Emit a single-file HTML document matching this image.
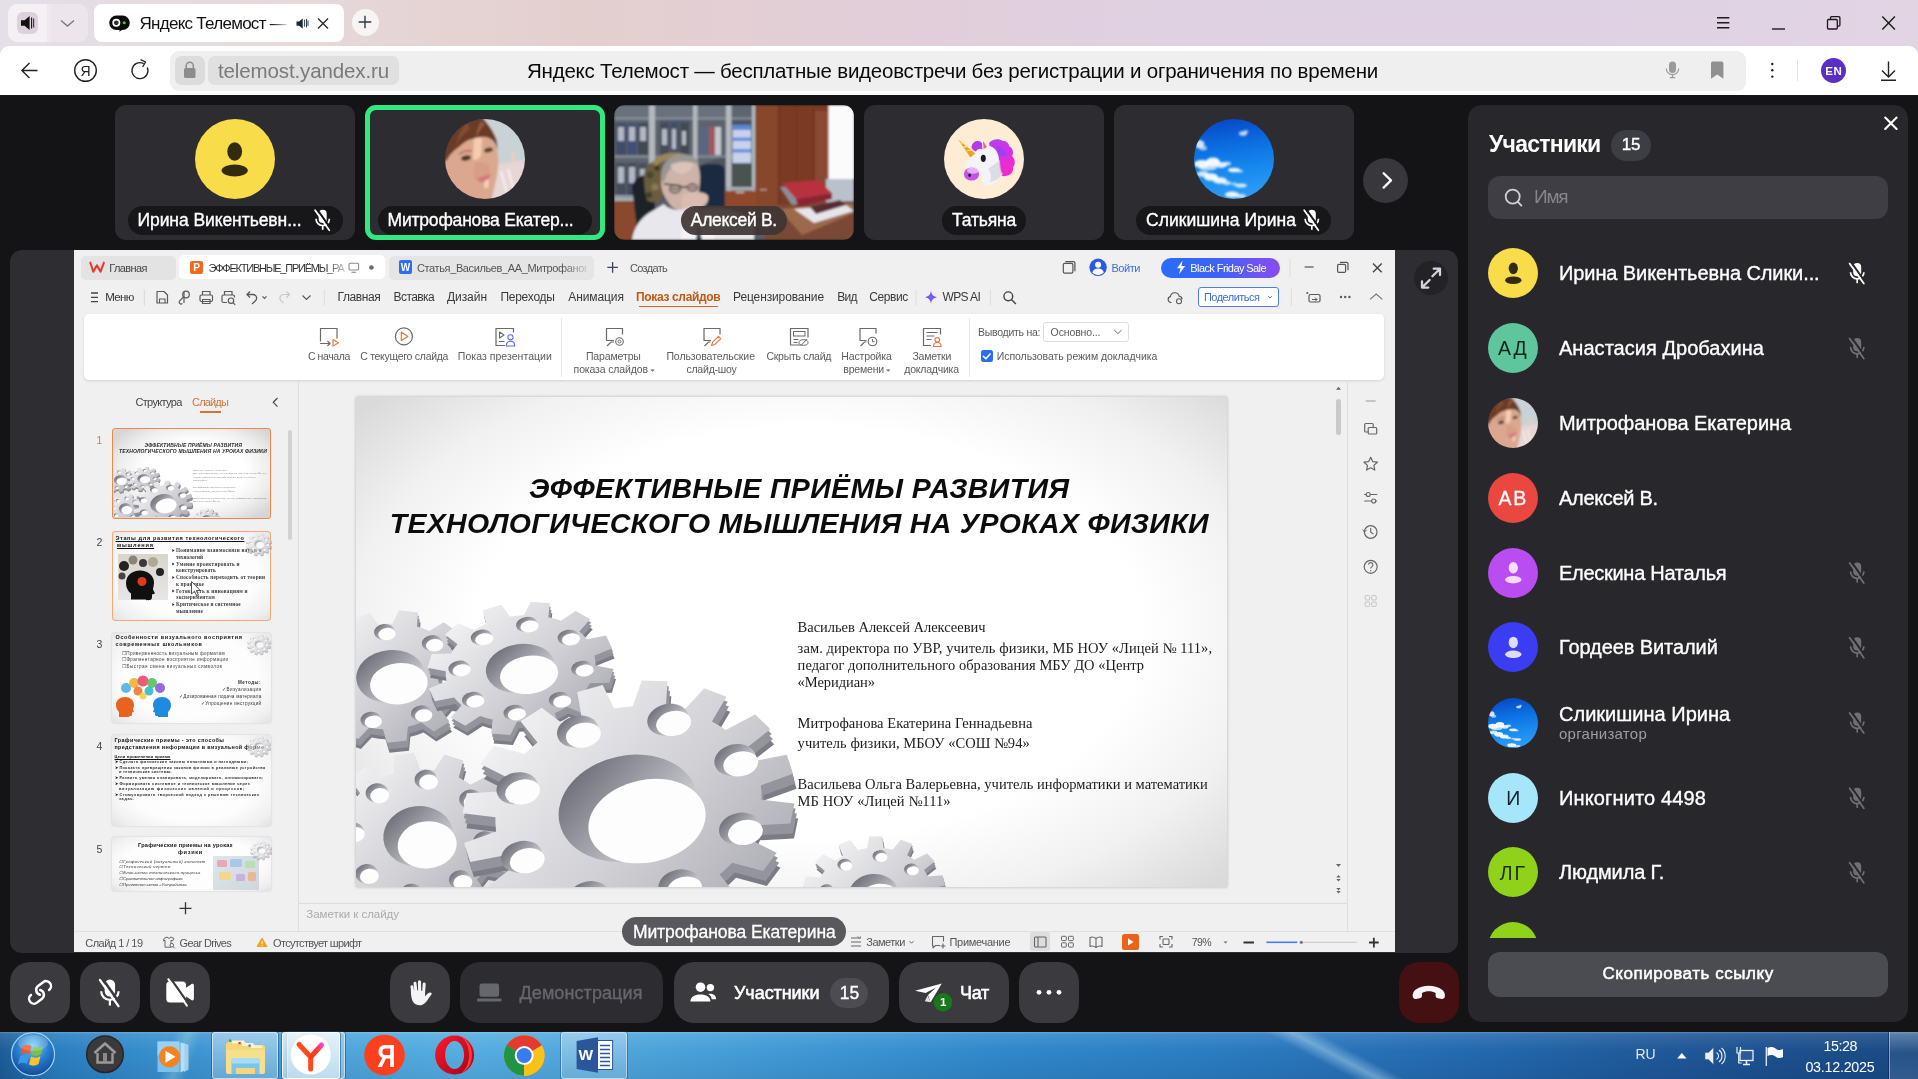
<!DOCTYPE html>
<html lang="ru"><head><meta charset="utf-8"><title>Яндекс Телемост</title>
<style>
html,body{margin:0;padding:0;}
body{width:1918px;height:1079px;overflow:hidden;position:relative;background:#141416;will-change:transform;font-family:"Liberation Sans",sans-serif;}
.b{position:absolute;box-sizing:border-box;}
.t{position:absolute;white-space:nowrap;}
svg{position:absolute;overflow:visible;}
</style></head><body>
<div class="b" style="left:0px;top:0px;width:1918px;height:60px;background:linear-gradient(90deg,#e5dfe8 0%,#e7d9db 14%,#e4cfcf 30%,#e2ceda 48%,#dfd1e2 62%,#ddd1e3 80%,#e2d4e3 100%);"></div>
<div class="b" style="left:8px;top:4px;width:39px;height:38px;background:#f4f0f4;border-radius:9px 0 0 9px;"></div>
<div class="b" style="left:47px;top:4px;width:4px;height:38px;background:#efe9ef;"></div>
<div class="b" style="left:51px;top:4px;width:37px;height:38px;background:#ece5ec;border-radius:0 9px 9px 0;"></div>
<div class="b" style="left:17px;top:12px;width:21px;height:22px;background:#dcd2de;border-radius:6px;"></div>
<div class="b" style="left:94px;top:4px;width:250px;height:38px;background:#fff;border-radius:8px;"></div>
<div class="b" style="left:351.5px;top:8.5px;width:27px;height:27px;background:#f7f4f3;border-radius:14px;"></div>
<div class="b" style="left:0px;top:46px;width:1918px;height:49px;background:#fff;border-radius:9px 9px 0 0;"></div>
<div class="b" style="left:170px;top:51px;width:1576px;height:39.5px;background:#efefef;border-radius:9px;"></div>
<div class="b" style="left:175px;top:55.5px;width:29.5px;height:29.5px;background:#dcdcdc;border-radius:7px;"></div>
<div class="b" style="left:208px;top:55.5px;width:190.5px;height:29.5px;background:#e0e0e0;border-radius:7px;"></div>
<span class="t " style="left:218px;top:57.9px;font-size:20.5px;line-height:26px;color:#7a7a7a;letter-spacing:-0.122px;">telemost.yandex.ru</span>
<span class="t " style="left:527px;top:57.9px;font-size:20.5px;line-height:26px;color:#0a0a0a;letter-spacing:-0.228px;">Яндекс Телемост — бесплатные видеовстречи без регистрации и ограничения по времени</span>
<span class="t " style="left:139.5px;top:12.61px;font-size:17px;line-height:22px;color:#111;letter-spacing:-0.720px;width:150px;overflow:hidden;-webkit-mask-image:linear-gradient(90deg,#000 88%,transparent 100%);">Яндекс Телемост —</span>
<div class="b" style="left:1821.2px;top:58.4px;width:24.8px;height:24.8px;background:#5b2fc4;border-radius:13px;"></div>
<span class="t " style="left:1825.3px;top:64.02px;font-size:11.5px;line-height:14px;color:#fff;font-weight:700;letter-spacing:0.512px;">EN</span>
<svg width="1918" height="1079" viewBox="0 0 1918 1079" style="left:0;top:0" fill="none"><path d="M21 20.2h3.6l5-4.2v14l-5-4.2H21z" fill="#111"/><path d="M31.6 17.5v11" stroke="#111" stroke-width="1.1"/><path d="M33.7 18.5v9" stroke="#111" stroke-width="0.9"/><path d="M61 20.5l6.5 5.6 6.5-5.6" stroke="#7b767d" stroke-width="1.3"/><path d="M116.5 15.5h6a7.3 7.3 0 0 1 0 14.6h-0.6l-2.6 1.7 0.3-1.7h-3.1a7.3 7.3 0 0 1 0-14.6z" fill="#0b0b0b"/><circle cx="116.3" cy="22.8" r="3.2" stroke="#fff" stroke-width="1.6" fill="#333"/><circle cx="124.2" cy="22.8" r="1.5" fill="#38d04c"/><path d="M296.5 21.4h2.6l3.6-3v10.4l-3.6-3h-2.6z" fill="#1c2838"/><path d="M304.6 19.7v7M306.5 19v8.4M308 20.5v5.4" stroke="#1c2838" stroke-width="0.9"/><path d="M318 18.5l10 10M328 18.5l-10 10" stroke="#2b2b2b" stroke-width="1.4"/><path d="M358.7 22h12.6M365 15.7v12.6" stroke="#2b3a4a" stroke-width="1.4"/><path d="M37.5 70.5H22M29.5 63l-7.6 7.5 7.6 7.5" stroke="#222" stroke-width="1.4"/><circle cx="85.5" cy="70.5" r="10.8" stroke="#222" stroke-width="1.4"/><path d="M147.300 67.500a8 8 0 1 1-3.600-3.900" stroke="#222" stroke-width="1.300"/><path d="M140.600 59.600l5 2.400-3 5" stroke="#222" stroke-width="1.300" stroke-linejoin="round"/><rect x="184" y="68" width="11.5" height="10" rx="1.6" fill="#8c8c8c"/><path d="M186.2 68v-2.3a3.55 3.55 0 0 1 7.1 0V68" stroke="#8c8c8c" stroke-width="1.5"/><path d="M1717 17.7h12.3M1717 22.7h12.3M1717 27.7h12.3" stroke="#1a1a1a" stroke-width="1.4"/><path d="M1772 29h13" stroke="#1a1a1a" stroke-width="1.4"/><rect x="1827.5" y="19.5" width="9.8" height="9.5" rx="1" stroke="#1a1a1a" stroke-width="1.3"/><path d="M1830.5 19.3v-1.6a1 1 0 0 1 1-1h7.4a1 1 0 0 1 1 1v7.4a1 1 0 0 1-1 1h-1.5" stroke="#1a1a1a" stroke-width="1.3"/><path d="M1882.3 16.5l12.6 13M1894.9 16.5l-12.6 13" stroke="#1a1a1a" stroke-width="1.4"/><rect x="1669" y="61.5" width="7" height="11.5" rx="3.5" fill="#9a9a9a"/><path d="M1666.3 68.5a6.2 6.2 0 0 0 12.4 0" stroke="#9a9a9a" stroke-width="1.2"/><path d="M1672.5 74.5v2.8M1669.8 77.6h5.4" stroke="#9a9a9a" stroke-width="1.2"/><path d="M1711 63.2a1.6 1.6 0 0 1 1.6-1.6h9.2a1.6 1.6 0 0 1 1.6 1.6v15.5l-6.2-4.2-6.2 4.2z" fill="#909090"/><circle cx="1772.3" cy="64" r="1.2" fill="#222"/><circle cx="1772.3" cy="70.3" r="1.2" fill="#222"/><circle cx="1772.3" cy="76.6" r="1.2" fill="#222"/><path d="M1797.5 60v21" stroke="#e2e2e2" stroke-width="1"/><path d="M1888.5 61.5v15M1882 70.5l6.5 6.5 6.5-6.5M1881 80.3h15" stroke="#222" stroke-width="1.4"/></svg>
<span class="t " style="left:80.6px;top:62.95px;font-size:14px;line-height:16px;color:#222;">Я</span>
<div class="b" style="left:0px;top:95px;width:1918px;height:935px;background:#141416;"></div>
<div class="b" style="left:115px;top:105px;width:239.5px;height:135px;background:#2c2c31;border-radius:11px;"></div>
<div class="b" style="left:365px;top:105px;width:239.5px;height:135px;background:#2c2c31;border-radius:11px;"></div>
<div class="b" style="left:864px;top:105px;width:239.5px;height:135px;background:#2c2c31;border-radius:11px;"></div>
<div class="b" style="left:1114px;top:105px;width:239.5px;height:135px;background:#2c2c31;border-radius:11px;"></div>
<div class="b" style="left:194.7px;top:119px;width:80px;height:80px;background:#f9dc4a;border-radius:40px;"></div>
<svg width="80" height="80" viewBox="0 0 80 80" style="left:444.5px;top:119.1px;border-radius:50%;overflow:hidden"><defs><filter id="fb1" x="-10%" y="-10%" width="120%" height="120%"><feGaussianBlur stdDeviation="1.3"/></filter></defs><g filter="url(#fb1)"><rect x="-5" y="-5" width="90" height="90" fill="#c9d3d5"/><path d="M50 46l35-6v50h-42z" fill="#e6d6d6"/><path d="M56 52l6 22M63 50l6 22" stroke="#f6ecec" stroke-width="2.500"/><rect x="67" y="32" width="2.500" height="11" fill="#f0cdb6"/><path d="M-5 38c6-14 22-22 38-22 12 0 19 8 20 20 1 8 0 14-1 20-2 10-4 18-6 28h-51z" fill="#dba88f"/><path d="M30 44c4-2 10-1 14 3 2 6 0 12-4 16-5 1-9-1-11-4z" fill="#d59a84" opacity=".8"/><path d="M29 20c3-2 6-2 8 0l-1 16c-2 4-5 6-8 4z" fill="#f6ccb0"/><path d="M40 60c2 0 4 1 4 3l-1 6c-2 1-4 0-4-2z" fill="#f6cdb6"/><path d="M32 60c4-2 9-3 14-5-1 4-6 8-11 8z" fill="#d4737c"/><ellipse cx="21" cy="39" rx="5" ry="2.600" fill="#4a3028" transform="rotate(-12 21 39)"/><ellipse cx="43.500" cy="31" rx="4.500" ry="2.300" fill="#5a3c30" transform="rotate(-14 43.500 31)"/><path d="M14 35c4-3 9-4 13-3" stroke="#8a5a48" stroke-width="1.200" fill="none"/><path d="M-5 48c2-4 5-6 7-7 3-6 7-10 12-13 4-4 8-7 13-8 5-2 9-2 12-2 4 0 8 2 10 5 2 2 3 5 3 8 1-4 0-10-2-14-3-7-8-13-12-18h-48z" fill="#6a3a27"/><path d="M22 4c-6 6-10 14-11 24 3-8 8-14 14-18z" fill="#8a5236" opacity=".8"/><path d="M36 2c-3 6-5 12-5 18 2-6 5-11 9-15z" fill="#a86a48" opacity=".7"/></g></svg>
<div class="b" style="left:944px;top:119px;width:80px;height:80px;background:#feecd4;border-radius:40px;"></div>
<svg width="80" height="80" viewBox="0 0 80 80" style="left:1193.9px;top:119.2px;border-radius:50%;overflow:hidden"><defs><linearGradient id="sk1" x1="0" y1="0" x2="0.15" y2="1"><stop offset="0" stop-color="#0742c2"/><stop offset="0.4" stop-color="#0b6fe2"/><stop offset="0.75" stop-color="#1a8cf0"/><stop offset="1" stop-color="#2c9af4"/></linearGradient><filter id="sb1" x="-10%" y="-10%" width="120%" height="120%"><feGaussianBlur stdDeviation="0.9"/></filter></defs><rect width="80" height="80" fill="url(#sk1)"/><g filter="url(#sb1)" fill="#fff"><ellipse cx="49" cy="14.5" rx="4" ry="2.3" opacity="0.75"/><ellipse cx="52" cy="12.5" rx="2.2" ry="1.6" opacity="0.6"/><ellipse cx="5" cy="25" rx="5.5" ry="4" opacity="0.8"/><ellipse cx="9" cy="29" rx="4" ry="2.5" opacity="0.6"/><ellipse cx="8" cy="45" rx="8" ry="4" opacity="0.92"/><ellipse cx="19" cy="43" rx="7" ry="4.5" opacity="0.95"/><ellipse cx="27" cy="46" rx="6" ry="3" opacity="0.85"/><ellipse cx="33" cy="44.5" rx="4" ry="2" opacity="0.7"/><ellipse cx="14" cy="49" rx="9" ry="2.5" opacity="0.7"/><ellipse cx="40" cy="51" rx="6" ry="2.3" opacity="0.9"/><ellipse cx="46" cy="52" rx="3" ry="1.5" opacity="0.6"/><ellipse cx="9" cy="55" rx="6" ry="3" opacity="0.8"/><ellipse cx="17" cy="58" rx="7" ry="3.8" opacity="0.92"/><ellipse cx="26" cy="61.5" rx="7" ry="3.3" opacity="0.9"/><ellipse cx="33" cy="64" rx="4" ry="2" opacity="0.7"/><ellipse cx="47" cy="66.5" rx="6" ry="2" opacity="0.8"/><ellipse cx="40" cy="65" rx="3" ry="1.4" opacity="0.6"/><ellipse cx="38" cy="75.5" rx="7" ry="3" opacity="0.9"/><ellipse cx="47" cy="77" rx="5" ry="2" opacity="0.7"/></g></svg>
<div class="b" style="left:128px;top:205.5px;width:214.5px;height:29.5px;background:#17171a;border-radius:15px;"></div>
<div class="b" style="left:378px;top:205.5px;width:214px;height:29.5px;background:#17171a;border-radius:15px;"></div>
<div class="b" style="left:942px;top:205.5px;width:84px;height:29.5px;background:#17171a;border-radius:15px;"></div>
<div class="b" style="left:1136.3px;top:205.5px;width:195.2px;height:29.5px;background:#17171a;border-radius:15px;"></div>
<span class="t " style="left:137.5px;top:209.24px;font-size:17.5px;line-height:22px;color:#fff;letter-spacing:-0.077px;-webkit-text-stroke:0.35px #fff;">Ирина Викентьевн...</span>
<span class="t " style="left:387.5px;top:209.24px;font-size:17.5px;line-height:22px;color:#fff;letter-spacing:-0.190px;-webkit-text-stroke:0.35px #fff;">Митрофанова Екатер...</span>
<span class="t " style="left:952px;top:209.24px;font-size:17.5px;line-height:22px;color:#fff;letter-spacing:-0.180px;-webkit-text-stroke:0.35px #fff;">Татьяна</span>
<span class="t " style="left:1146px;top:209.24px;font-size:17.5px;line-height:22px;color:#fff;letter-spacing:0.026px;-webkit-text-stroke:0.35px #fff;">Сликишина Ирина</span>
<div class="b" style="left:1363.4px;top:158px;width:44.6px;height:44.6px;background:#37373c;border-radius:23px;"></div>
<svg width="1918" height="1079" viewBox="0 0 1918 1079" style="left:0;top:0" fill="none"><g transform="translate(234.7 159.1) scale(1)" fill="#332b10"><ellipse cx="0" cy="-7.6" rx="7.4" ry="9.3"/><ellipse cx="0" cy="11.4" rx="13.1" ry="6"/></g><g transform="translate(322.7 220) scale(1.0)" opacity="1.0"><rect x="-4" y="-10.3" width="8" height="13.2" rx="4" fill="#fff"/><path d="M-6.7 -1.2a6.7 6.7 0 0 0 13.4 0" stroke="#fff" stroke-width="1.7" fill="none"/><path d="M0 5.6v4.2" stroke="#fff" stroke-width="1.7"/><path d="M-5.6 -10.6L8.6 9.4" stroke="#17171a" stroke-width="2" /><path d="M-7.6 -9.8L6.6 10.2" stroke="#fff" stroke-width="1.8" stroke-linecap="round"/></g><g transform="translate(1311.8 220) scale(1.0)" opacity="1.0"><rect x="-4" y="-10.3" width="8" height="13.2" rx="4" fill="#fff"/><path d="M-6.7 -1.2a6.7 6.7 0 0 0 13.4 0" stroke="#fff" stroke-width="1.7" fill="none"/><path d="M0 5.6v4.2" stroke="#fff" stroke-width="1.7"/><path d="M-5.6 -10.6L8.6 9.4" stroke="#17171a" stroke-width="2" /><path d="M-7.6 -9.8L6.6 10.2" stroke="#fff" stroke-width="1.8" stroke-linecap="round"/></g><path d="M1383.6 173.2l7.4 7.2-7.4 7.2" stroke="#fff" stroke-width="2.3" stroke-linecap="round" stroke-linejoin="round"/><g transform="translate(944 119)"><defs><linearGradient id="mane" x1="0" y1="0" x2="0.4" y2="1"><stop offset="0" stop-color="#b044f0"/><stop offset="0.45" stop-color="#cf33ea"/><stop offset="1" stop-color="#f628c8"/></linearGradient></defs><path d="M45 24c3-4 10-5 14-2 3 0 6 2 6 5 4 2 5 7 3 10 3 3 4 8 1 11 1 5-3 9-8 9-4 1-8-2-8-6l-4-8z" fill="url(#mane)"/><path d="M53 27c5 1 9 4 10 9-3 2-6 2-9 0z" fill="#7a4cf0" opacity=".55"/><path d="M30 35c2-6 9-10 16-8 6 2 9 8 9 15 0 6 1 11 3 14-2 5-7 9-13 10-4 1-7-1-7-4 0-4-2-6-5-8-4 2-9 1-11-2-2-4 0-9 3-12 2-2 4-3 5-5z" fill="#f4f4f8"/><path d="M44 50c3 3 4 8 2 13 5-1 10-4 13-8-2-3-3-8-3-14z" fill="#d4d4de" opacity=".75"/><ellipse cx="27.500" cy="55" rx="7.600" ry="6.600" fill="#c653e8"/><ellipse cx="29" cy="51.500" rx="6" ry="3.300" fill="#ecd0f6" opacity=".75"/><ellipse cx="25.600" cy="56.300" rx="1.300" ry="1.800" fill="#241428"/><ellipse cx="39.300" cy="39.300" rx="2.500" ry="3.600" fill="#1c1c1c"/><path d="M14 20.300l17.200 14.200-4.800 3.800z" fill="#eaa51c"/><path d="M16.800 24l3.600-0.600M19.800 28l4.200-1M22.900 32l4.800-1.400" stroke="#fbe38a" stroke-width="1.300"/><path d="M27.500 27.500c1-4.500 5-6.500 8.500-5 2.500 1 3.500 4.500 2.500 8-2.500-1.500-5-0.500-6.500 2-2.500-1-4.500-2.500-4.500-5z" fill="#b63ae8"/><path d="M37.400 17.800l7.400 10.600-6 4z" fill="#f4f4f8"/><path d="M38.800 21.600l4.200 6.400-3.400 2.200z" fill="#ec6a8a"/></g></svg>
<div class="b" style="left:365px;top:105px;width:239.5px;height:135px;border-radius:11px;border:5px solid #31e881;"></div>
<svg width="240" height="135" viewBox="0 0 240 135" style="left:614px;top:105px;border-radius:11px;overflow:hidden;"><defs><filter id="vb" x="-5%" y="-5%" width="110%" height="110%"><feGaussianBlur stdDeviation="0.9"/></filter></defs><g filter="url(#vb)"><rect width="240" height="135" fill="#565d66"/><rect x="0" y="0" width="142" height="95" fill="#4d545e"/><rect x="0" y="0" width="142" height="12" fill="#5d6670"/><rect x="2" y="18" width="10" height="32" fill="#2e3a5a"/><rect x="13" y="18" width="10" height="32" fill="#2c3f68"/><rect x="24" y="18" width="10" height="32" fill="#30343e"/><rect x="46" y="18" width="9" height="32" fill="#323846"/><rect x="56" y="18" width="9" height="32" fill="#2f3d55"/><rect x="66" y="18" width="9" height="32" fill="#30343c"/><rect x="86" y="22" width="8" height="28" fill="#4a5878"/><rect x="95" y="22" width="6" height="28" fill="#a04450"/><rect x="101" y="22" width="6" height="28" fill="#c8ccd4"/><rect x="2" y="58" width="10" height="32" fill="#343a48"/><rect x="13" y="58" width="10" height="32" fill="#30384c"/><rect x="24" y="58" width="9" height="32" fill="#3a3f48"/><rect x="46" y="14" width="30" height="4" fill="#3a4660"/><rect x="4" y="22" width="6" height="14" fill="#b4b8c6"/><rect x="15" y="22" width="6" height="14" fill="#b4b8c6"/><rect x="26" y="22" width="6" height="14" fill="#b4b8c6"/><rect x="48" y="24" width="5" height="16" fill="#b4b8c6"/><rect x="58" y="24" width="4" height="20" fill="#b4b8c6"/><rect x="68" y="26" width="4" height="14" fill="#b4b8c6"/><rect x="4" y="62" width="6" height="16" fill="#b4b8c6"/><rect x="15" y="62" width="6" height="16" fill="#b4b8c6"/><rect x="26" y="64" width="5" height="12" fill="#b4b8c6"/><rect x="0" y="12.5" width="140" height="2" fill="#8b949c"/><rect x="0" y="50.5" width="140" height="2.2" fill="#7f8890"/><rect x="0" y="90" width="35" height="3" fill="#8b949c"/><rect x="35" y="0" width="6" height="86" fill="#b4b9be"/><rect x="79" y="0" width="4.5" height="86" fill="#b4b9be"/><rect x="112" y="0" width="5.5" height="86" fill="#b4b9be"/><rect x="138" y="0" width="4" height="86" fill="#b4b9be"/><rect x="112" y="82" width="30" height="3.5" fill="#a9aeb3"/><path d="M0 0h112v50L0 95z" fill="#aab4bc" opacity=".16"/><rect x="118.5" y="20" width="18.5" height="38" fill="#c7d3ea"/><rect x="118.5" y="20" width="18.5" height="5" fill="#5f86d8"/><rect x="118.5" y="32.5" width="18.5" height="3.5" fill="#6a8fdc"/><rect x="118.5" y="44" width="18.5" height="3.5" fill="#6a8fdc"/><rect x="118" y="60" width="20" height="22" fill="#4a5350"/><rect x="141.5" y="0" width="73.5" height="110" fill="#7a3a24"/><rect x="141.5" y="0" width="24" height="110" fill="#86462c"/><rect x="200" y="6" width="15" height="100" fill="#8a4a30"/><rect x="164.5" y="0" width="1" height="100" fill="#5a2a1a"/><rect x="199.5" y="4" width="1" height="100" fill="#5a2a1a"/><rect x="182" y="0" width="1" height="100" fill="#6a321f"/><rect x="110" y="86" width="32" height="30" fill="#8f4a2c"/><rect x="0" y="95" width="30" height="40" fill="#8a4a2e"/><rect x="0" y="93" width="30" height="3" fill="#a8adb2"/><rect x="122" y="86.5" width="8" height="1.5" fill="#c9c1b8"/><rect x="146" y="84" width="7" height="1.5" fill="#b39a8a"/><rect x="214.5" y="0" width="26" height="74" fill="#fbfbfb"/><rect x="212" y="74" width="28" height="30" fill="#b9c1cb"/><path d="M160 100L240 96V135H150z" fill="#7a4a34"/><path d="M165 104l75-6v10l-52 22z" fill="#9c6a4c"/><path d="M180 104l52-4 8 6-40 12z" fill="#e6e6ea"/><path d="M166 82l40-2 12 14-40 6z" fill="#8c8f96"/><path d="M168 78l36-3 14 13-36 6z" fill="#b8303e"/><path d="M182 94l36-6v6l-34 8z" fill="#8c2430"/><path d="M196 102l30-7 6 5-30 9z" fill="#5a2a30"/><path d="M84 66c0-5 4-7 10-7h8c6 0 9 3 9 9v34H84z" fill="#1f2a40"/><path d="M18 82c2-8 8-12 14-12l8 2 2 60H24z" fill="#1d2027"/><path d="M30 72c0-10 6-16 13-16 3 0 5 2 5 5v34c-4 3-12 3-15 0-2-6-3-14-3-23z" fill="#6b5c3c"/><circle cx="36" cy="70" r="3.400" fill="#3f4a2c"/><circle cx="41" cy="82" r="3.600" fill="#8a7a52"/><circle cx="35" cy="90" r="3" fill="#39422a"/><circle cx="43" cy="63" r="2.500" fill="#2f3822"/><path d="M38 58c8-13 34-15 45 0l-3 2.500c-9-10-29-9-38 0.500z" fill="#9a8658"/><path d="M47 76c0-15 8-26 21-26 12 0 18 9 18 22 0 12-2 21-6 29-4 6-17 6-23 0-6-8-10-14-10-25z" fill="#cdb3a8"/><path d="M47 72c0-13 8-23 21-23 9 0 15 4 17 10-8-3-19-2-25 2-5 3-8 8-9 14l-3 3z" fill="#9a9693"/><path d="M56 60c6-4 16-5 24-1-3 6-6 9-12 10-6 0-10-4-12-9z" fill="#dcc6bc" opacity=".85"/><path d="M50 79l15 1.500 4 2 13-2.500" stroke="#3e3838" stroke-width="1.500" fill="none"/><ellipse cx="61" cy="84" rx="5.500" ry="3.800" stroke="#443c3c" stroke-width="1.200" fill="#b8a49c"/><ellipse cx="78.500" cy="82.500" rx="5" ry="3.600" stroke="#443c3c" stroke-width="1.200" fill="#b8a49c"/><path d="M57 84h8M75 82.500h7" stroke="#4a3e3a" stroke-width="1.200"/><path d="M68 92c2-4 8-6 14-5 6 0 10 1 12 4 1 4-1 8-4 10l-8 6-14-2z" fill="#d8bdb0"/><path d="M18 135c2-14 10-24 22-30l10-6c4 6 18 8 26 3l8 4c18-6 40-2 56 10v19z" fill="#e7e7ec"/><path d="M70 118c8-8 20-12 34-10l-4 27H66z" fill="#f4f4f8"/><path d="M84 118l4 17h-6z" fill="#3a3f4c"/></g></svg>
<div class="b" style="left:681px;top:205.5px;width:105.5px;height:29.5px;background:rgba(62,54,52,.93);border-radius:15px;"></div>
<span class="t " style="left:690.8px;top:209.24px;font-size:17.5px;line-height:22px;color:#fff;letter-spacing:-0.312px;-webkit-text-stroke:0.35px #fff;">Алексей В.</span>
<div class="b" style="left:1468.2px;top:105px;width:439.8px;height:917px;background:#27272c;border-radius:14px;"></div>
<span class="t " style="left:1489px;top:129.53px;font-size:23px;line-height:28px;color:#fff;font-weight:700;letter-spacing:-0.743px;">Участники</span>
<div class="b" style="left:1611.3px;top:130.3px;width:39.5px;height:30.3px;background:#3d3d44;border-radius:15.2px;"></div>
<span class="t " style="left:1621.7px;top:134.11px;font-size:17px;line-height:22px;color:#fff;letter-spacing:-0.105px;-webkit-text-stroke:0.4px #fff;">15</span>
<div class="b" style="left:1488.3px;top:175.6px;width:399.5px;height:43.8px;background:#3e3e44;border-radius:12px;"></div>
<span class="t " style="left:1534px;top:184.72px;font-size:19px;line-height:24px;color:#85858c;letter-spacing:-1.202px;">Имя</span>
<div class="b" style="left:1488.3px;top:248.10000000000002px;width:50px;height:50px;background:#f9dc4a;border-radius:25px;"></div>
<span class="t " style="left:1559px;top:261.27px;font-size:20px;line-height:24px;color:#fff;letter-spacing:-0.092px;-webkit-text-stroke:0.35px #fff;">Ирина Викентьевна Слики...</span>
<div class="b" style="left:1488.3px;top:323px;width:50px;height:50px;background:#5ec59d;border-radius:25px;"></div>
<span class="t " style="left:1498.05px;top:336.34px;font-size:19.5px;line-height:24px;color:#10271e;letter-spacing:1.820px;">АД</span>
<span class="t " style="left:1559px;top:336.17px;font-size:20px;line-height:24px;color:#fff;letter-spacing:0.033px;-webkit-text-stroke:0.35px #fff;">Анастасия Дробахина</span>
<svg width="50" height="50" viewBox="0 0 80 80" style="left:1488.3px;top:398px;border-radius:50%;overflow:hidden"><defs><filter id="fb2" x="-10%" y="-10%" width="120%" height="120%"><feGaussianBlur stdDeviation="1.3"/></filter></defs><g filter="url(#fb2)"><rect x="-5" y="-5" width="90" height="90" fill="#c9d3d5"/><path d="M50 46l35-6v50h-42z" fill="#e6d6d6"/><path d="M56 52l6 22M63 50l6 22" stroke="#f6ecec" stroke-width="2.500"/><rect x="67" y="32" width="2.500" height="11" fill="#f0cdb6"/><path d="M-5 38c6-14 22-22 38-22 12 0 19 8 20 20 1 8 0 14-1 20-2 10-4 18-6 28h-51z" fill="#dba88f"/><path d="M30 44c4-2 10-1 14 3 2 6 0 12-4 16-5 1-9-1-11-4z" fill="#d59a84" opacity=".8"/><path d="M29 20c3-2 6-2 8 0l-1 16c-2 4-5 6-8 4z" fill="#f6ccb0"/><path d="M40 60c2 0 4 1 4 3l-1 6c-2 1-4 0-4-2z" fill="#f6cdb6"/><path d="M32 60c4-2 9-3 14-5-1 4-6 8-11 8z" fill="#d4737c"/><ellipse cx="21" cy="39" rx="5" ry="2.600" fill="#4a3028" transform="rotate(-12 21 39)"/><ellipse cx="43.500" cy="31" rx="4.500" ry="2.300" fill="#5a3c30" transform="rotate(-14 43.500 31)"/><path d="M14 35c4-3 9-4 13-3" stroke="#8a5a48" stroke-width="1.200" fill="none"/><path d="M-5 48c2-4 5-6 7-7 3-6 7-10 12-13 4-4 8-7 13-8 5-2 9-2 12-2 4 0 8 2 10 5 2 2 3 5 3 8 1-4 0-10-2-14-3-7-8-13-12-18h-48z" fill="#6a3a27"/><path d="M22 4c-6 6-10 14-11 24 3-8 8-14 14-18z" fill="#8a5236" opacity=".8"/><path d="M36 2c-3 6-5 12-5 18 2-6 5-11 9-15z" fill="#a86a48" opacity=".7"/></g></svg>
<span class="t " style="left:1559px;top:411.17px;font-size:20px;line-height:24px;color:#fff;letter-spacing:-0.086px;-webkit-text-stroke:0.35px #fff;">Митрофанова Екатерина</span>
<div class="b" style="left:1488.3px;top:472.8px;width:50px;height:50px;background:#ea4740;border-radius:25px;"></div>
<span class="t " style="left:1498.55px;top:486.14px;font-size:19.5px;line-height:24px;color:#fff;letter-spacing:1.743px;-webkit-text-stroke:0.3px #fff;">АВ</span>
<span class="t " style="left:1559px;top:485.97px;font-size:20px;line-height:24px;color:#fff;letter-spacing:-0.316px;-webkit-text-stroke:0.35px #fff;">Алексей В.</span>
<div class="b" style="left:1488.3px;top:547.5px;width:50px;height:50px;background:#b94df2;border-radius:25px;"></div>
<span class="t " style="left:1559px;top:560.67px;font-size:20px;line-height:24px;color:#fff;letter-spacing:-0.280px;-webkit-text-stroke:0.35px #fff;">Елескина Наталья</span>
<div class="b" style="left:1488.3px;top:622.2px;width:50px;height:50px;background:#3b3df2;border-radius:25px;"></div>
<span class="t " style="left:1559px;top:635.37px;font-size:20px;line-height:24px;color:#fff;letter-spacing:-0.077px;-webkit-text-stroke:0.35px #fff;">Гордеев Виталий</span>
<svg width="50" height="50" viewBox="0 0 80 80" style="left:1488.3px;top:697.5px;border-radius:50%;overflow:hidden"><defs><linearGradient id="sk2" x1="0" y1="0" x2="0.15" y2="1"><stop offset="0" stop-color="#0742c2"/><stop offset="0.4" stop-color="#0b6fe2"/><stop offset="0.75" stop-color="#1a8cf0"/><stop offset="1" stop-color="#2c9af4"/></linearGradient><filter id="sb2" x="-10%" y="-10%" width="120%" height="120%"><feGaussianBlur stdDeviation="0.9"/></filter></defs><rect width="80" height="80" fill="url(#sk2)"/><g filter="url(#sb2)" fill="#fff"><ellipse cx="49" cy="14.5" rx="4" ry="2.3" opacity="0.75"/><ellipse cx="52" cy="12.5" rx="2.2" ry="1.6" opacity="0.6"/><ellipse cx="5" cy="25" rx="5.5" ry="4" opacity="0.8"/><ellipse cx="9" cy="29" rx="4" ry="2.5" opacity="0.6"/><ellipse cx="8" cy="45" rx="8" ry="4" opacity="0.92"/><ellipse cx="19" cy="43" rx="7" ry="4.5" opacity="0.95"/><ellipse cx="27" cy="46" rx="6" ry="3" opacity="0.85"/><ellipse cx="33" cy="44.5" rx="4" ry="2" opacity="0.7"/><ellipse cx="14" cy="49" rx="9" ry="2.5" opacity="0.7"/><ellipse cx="40" cy="51" rx="6" ry="2.3" opacity="0.9"/><ellipse cx="46" cy="52" rx="3" ry="1.5" opacity="0.6"/><ellipse cx="9" cy="55" rx="6" ry="3" opacity="0.8"/><ellipse cx="17" cy="58" rx="7" ry="3.8" opacity="0.92"/><ellipse cx="26" cy="61.5" rx="7" ry="3.3" opacity="0.9"/><ellipse cx="33" cy="64" rx="4" ry="2" opacity="0.7"/><ellipse cx="47" cy="66.5" rx="6" ry="2" opacity="0.8"/><ellipse cx="40" cy="65" rx="3" ry="1.4" opacity="0.6"/><ellipse cx="38" cy="75.5" rx="7" ry="3" opacity="0.9"/><ellipse cx="47" cy="77" rx="5" ry="2" opacity="0.7"/></g></svg>
<span class="t " style="left:1559px;top:701.67px;font-size:20px;line-height:24px;color:#fff;letter-spacing:0.014px;-webkit-text-stroke:0.35px #fff;">Сликишина Ирина</span>
<span class="t " style="left:1559px;top:724.7px;font-size:15px;line-height:18px;color:#9d9da3;letter-spacing:0.263px;">организатор</span>
<div class="b" style="left:1488.3px;top:772.8px;width:50px;height:50px;background:#a6e6fb;border-radius:25px;"></div>
<span class="t " style="left:1506.3px;top:786.14px;font-size:19.5px;line-height:24px;color:#12202a;letter-spacing:-0.016px;">И</span>
<span class="t " style="left:1559px;top:785.97px;font-size:20px;line-height:24px;color:#fff;letter-spacing:0.133px;-webkit-text-stroke:0.35px #fff;">Инкогнито 4498</span>
<div class="b" style="left:1488.3px;top:847.2px;width:50px;height:50px;background:#90d11a;border-radius:25px;"></div>
<span class="t " style="left:1499.8px;top:860.54px;font-size:19.5px;line-height:24px;color:#1a2a05;letter-spacing:1.822px;">ЛГ</span>
<span class="t " style="left:1559px;top:860.37px;font-size:20px;line-height:24px;color:#fff;letter-spacing:-0.127px;-webkit-text-stroke:0.35px #fff;">Людмила Г.</span>
<div class="b" style="left:1488.3px;top:900px;width:50px;height:37.5px;overflow:hidden;"><div class="b" style="left:0;top:22.3px;width:50px;height:50px;border-radius:25px;background:#90d11a"></div></div>
<div class="b" style="left:1488.4px;top:952.3px;width:399.6px;height:45.1px;background:#4b4c51;border-radius:12px;"></div>
<span class="t " style="left:1602.5px;top:962.51px;font-size:17px;line-height:22px;color:#fff;letter-spacing:0.537px;-webkit-text-stroke:0.5px #fff;">Скопировать ссылку</span>
<svg width="1918" height="1079" viewBox="0 0 1918 1079" style="left:0;top:0" fill="none"><path d="M1885.2 117.5l11.4 11.4M1896.6 117.5l-11.4 11.4" stroke="#fff" stroke-width="2.1" stroke-linecap="round"/><circle cx="1512.7" cy="196.6" r="7" stroke="#cfcfd4" stroke-width="1.8"/><path d="M1517.8 201.8l3.6 3.8" stroke="#cfcfd4" stroke-width="1.8" stroke-linecap="round"/><g transform="translate(1513.3 273.1) scale(0.625)" fill="#332b10"><ellipse cx="0" cy="-7.6" rx="7.4" ry="9.3"/><ellipse cx="0" cy="11.4" rx="13.1" ry="6"/></g><g transform="translate(1857.2 273.40000000000003) scale(1.0)" opacity="1.0"><rect x="-4" y="-10.3" width="8" height="13.2" rx="4" fill="#fff"/><path d="M-6.7 -1.2a6.7 6.7 0 0 0 13.4 0" stroke="#fff" stroke-width="1.7" fill="none"/><path d="M0 5.6v4.2" stroke="#fff" stroke-width="1.7"/><path d="M-5.6 -10.6L8.6 9.4" stroke="#27272c" stroke-width="2" /><path d="M-7.6 -9.8L6.6 10.2" stroke="#fff" stroke-width="1.8" stroke-linecap="round"/></g><g transform="translate(1857.2 348.3) scale(1.0)" opacity="1.0"><rect x="-4" y="-10.3" width="8" height="13.2" rx="4" fill="#6f6f76"/><path d="M-6.7 -1.2a6.7 6.7 0 0 0 13.4 0" stroke="#6f6f76" stroke-width="1.7" fill="none"/><path d="M0 5.6v4.2" stroke="#6f6f76" stroke-width="1.7"/><path d="M-5.6 -10.6L8.6 9.4" stroke="#27272c" stroke-width="2" /><path d="M-7.6 -9.8L6.6 10.2" stroke="#6f6f76" stroke-width="1.8" stroke-linecap="round"/></g><g transform="translate(1513.3 572.5) scale(0.625)" fill="#f6dcfd"><ellipse cx="0" cy="-7.6" rx="7.4" ry="9.3"/><ellipse cx="0" cy="11.4" rx="13.1" ry="6"/></g><g transform="translate(1857.2 572.8) scale(1.0)" opacity="1.0"><rect x="-4" y="-10.3" width="8" height="13.2" rx="4" fill="#6f6f76"/><path d="M-6.7 -1.2a6.7 6.7 0 0 0 13.4 0" stroke="#6f6f76" stroke-width="1.7" fill="none"/><path d="M0 5.6v4.2" stroke="#6f6f76" stroke-width="1.7"/><path d="M-5.6 -10.6L8.6 9.4" stroke="#27272c" stroke-width="2" /><path d="M-7.6 -9.8L6.6 10.2" stroke="#6f6f76" stroke-width="1.8" stroke-linecap="round"/></g><g transform="translate(1513.3 647.2) scale(0.625)" fill="#dcdcff"><ellipse cx="0" cy="-7.6" rx="7.4" ry="9.3"/><ellipse cx="0" cy="11.4" rx="13.1" ry="6"/></g><g transform="translate(1857.2 647.5) scale(1.0)" opacity="1.0"><rect x="-4" y="-10.3" width="8" height="13.2" rx="4" fill="#6f6f76"/><path d="M-6.7 -1.2a6.7 6.7 0 0 0 13.4 0" stroke="#6f6f76" stroke-width="1.7" fill="none"/><path d="M0 5.6v4.2" stroke="#6f6f76" stroke-width="1.7"/><path d="M-5.6 -10.6L8.6 9.4" stroke="#27272c" stroke-width="2" /><path d="M-7.6 -9.8L6.6 10.2" stroke="#6f6f76" stroke-width="1.8" stroke-linecap="round"/></g><g transform="translate(1857.2 722.8) scale(1.0)" opacity="1.0"><rect x="-4" y="-10.3" width="8" height="13.2" rx="4" fill="#6f6f76"/><path d="M-6.7 -1.2a6.7 6.7 0 0 0 13.4 0" stroke="#6f6f76" stroke-width="1.7" fill="none"/><path d="M0 5.6v4.2" stroke="#6f6f76" stroke-width="1.7"/><path d="M-5.6 -10.6L8.6 9.4" stroke="#27272c" stroke-width="2" /><path d="M-7.6 -9.8L6.6 10.2" stroke="#6f6f76" stroke-width="1.8" stroke-linecap="round"/></g><g transform="translate(1857.2 798.0999999999999) scale(1.0)" opacity="1.0"><rect x="-4" y="-10.3" width="8" height="13.2" rx="4" fill="#6f6f76"/><path d="M-6.7 -1.2a6.7 6.7 0 0 0 13.4 0" stroke="#6f6f76" stroke-width="1.7" fill="none"/><path d="M0 5.6v4.2" stroke="#6f6f76" stroke-width="1.7"/><path d="M-5.6 -10.6L8.6 9.4" stroke="#27272c" stroke-width="2" /><path d="M-7.6 -9.8L6.6 10.2" stroke="#6f6f76" stroke-width="1.8" stroke-linecap="round"/></g><g transform="translate(1857.2 872.5) scale(1.0)" opacity="1.0"><rect x="-4" y="-10.3" width="8" height="13.2" rx="4" fill="#6f6f76"/><path d="M-6.7 -1.2a6.7 6.7 0 0 0 13.4 0" stroke="#6f6f76" stroke-width="1.7" fill="none"/><path d="M0 5.6v4.2" stroke="#6f6f76" stroke-width="1.7"/><path d="M-5.6 -10.6L8.6 9.4" stroke="#27272c" stroke-width="2" /><path d="M-7.6 -9.8L6.6 10.2" stroke="#6f6f76" stroke-width="1.8" stroke-linecap="round"/></g></svg>
<div class="b" style="left:10px;top:962.3px;width:60px;height:60.3px;background:#3a3a3f;border-radius:20px;"></div>
<div class="b" style="left:79.9px;top:962.3px;width:60px;height:60.3px;background:#3a3a3f;border-radius:20px;"></div>
<div class="b" style="left:149.9px;top:962.3px;width:60px;height:60.3px;background:#3a3a3f;border-radius:20px;"></div>
<div class="b" style="left:389.7px;top:962.3px;width:60px;height:60.3px;background:#3a3a3f;border-radius:20px;"></div>
<div class="b" style="left:459.5px;top:962.3px;width:203.3px;height:60.3px;background:#2c2c31;border-radius:20px;"></div>
<div class="b" style="left:673.7px;top:962.3px;width:215.1px;height:60.3px;background:#3a3a3f;border-radius:20px;"></div>
<div class="b" style="left:899px;top:962.3px;width:109.5px;height:60.3px;background:#3a3a3f;border-radius:20px;"></div>
<div class="b" style="left:1019.3px;top:962.3px;width:59.3px;height:60.3px;background:#3a3a3f;border-radius:20px;"></div>
<div class="b" style="left:1398.5px;top:962.3px;width:60px;height:60.5px;background:#451012;border-radius:20px;"></div>
<span class="t " style="left:519.5px;top:981.76px;font-size:18px;line-height:22px;color:#66666d;letter-spacing:0.091px;-webkit-text-stroke:0.35px #66666d;">Демонстрация</span>
<span class="t " style="left:734px;top:981.76px;font-size:18px;line-height:22px;color:#fff;letter-spacing:-0.066px;-webkit-text-stroke:0.55px #fff;">Участники</span>
<div class="b" style="left:830.2px;top:978px;width:38.3px;height:29.5px;background:#4c4c52;border-radius:15px;"></div>
<span class="t " style="left:839.7px;top:981.94px;font-size:17.5px;line-height:22px;color:#fff;letter-spacing:0.117px;-webkit-text-stroke:0.35px #fff;">15</span>
<span class="t " style="left:960px;top:981.76px;font-size:18px;line-height:22px;color:#fff;letter-spacing:-0.352px;-webkit-text-stroke:0.55px #fff;">Чат</span>
<svg width="1918" height="1079" viewBox="0 0 1918 1079" style="left:0;top:0" fill="none"><path transform="translate(43.6 988) rotate(-38)" d="M3.2 4.9A4.9 4.9 0 0 0 3.2 -4.9L-3.2 -4.9A4.9 4.9 0 0 0 -7.06 3.02" stroke="#fff" stroke-width="2.5" fill="none" stroke-linecap="round"/><path transform="translate(36.5 996.8) rotate(-38)" d="M-3.2 -4.9A4.9 4.9 0 0 0 -3.2 4.9L3.2 4.9A4.9 4.9 0 0 0 7.06 -3.02" stroke="#fff" stroke-width="2.5" fill="none" stroke-linecap="round"/><g transform="translate(109.9 992.8) scale(1.3)" opacity="1.0"><rect x="-4" y="-10.3" width="8" height="13.2" rx="4" fill="#fff"/><path d="M-6.7 -1.2a6.7 6.7 0 0 0 13.4 0" stroke="#fff" stroke-width="1.7" fill="none"/><path d="M0 5.6v4.2" stroke="#fff" stroke-width="1.7"/><path d="M-5.6 -10.6L8.6 9.4" stroke="#3a3a3f" stroke-width="2" /><path d="M-7.6 -9.8L6.6 10.2" stroke="#fff" stroke-width="1.8" stroke-linecap="round"/></g><path d="M166.3 985.2a3.6 3.6 0 0 1 3.6-3.6h12.6a3.6 3.6 0 0 1 3.6 3.6v2.6l5.2-3.6c1.4-0.9 2.6-0.2 2.6 1.4v13c0 1.6-1.2 2.3-2.6 1.400l-5.200-3.600v2.6a3.6 3.6 0 0 1-3.6 3.6h-12.600a3.6 3.6 0 0 1-3.600-3.600z" fill="#fff"/><path d="M170.4 978.2L189 1004.6" stroke="#3a3a3f" stroke-width="2.2"/><path d="M168.3 979.2L186.9 1005.6" stroke="#fff" stroke-width="2" stroke-linecap="round"/><path d="M411.900 986.800L413.600 996" stroke="#f4f4f6" stroke-width="2.900" stroke-linecap="round"/><path d="M415 983.300L416.300 995" stroke="#f4f4f6" stroke-width="3" stroke-linecap="round"/><path d="M419.500 981.700L419.700 995" stroke="#f4f4f6" stroke-width="3.100" stroke-linecap="round"/><path d="M424.200 984L423.400 995" stroke="#f4f4f6" stroke-width="3" stroke-linecap="round"/><path d="M410.800 990C411 996 411.500 1000 413.500 1002.500C415.500 1005 419 1005.900 422 1004.900C425 1003.900 427 1001 428.500 998.500L431.400 994.600C432.100 993.500 431.600 992.500 430.400 992.400C428.500 992.300 426.500 994.300 425.200 996.400L425 991Z" fill="#f4f4f6"/><rect x="479.5" y="983.6" width="19.6" height="13.2" rx="2.3" fill="#66666d"/><rect x="476.8" y="998.4" width="25" height="3.2" rx="1.6" fill="#66666d"/><circle cx="700.5" cy="987.2" r="4.8" fill="#fff"/><path d="M690.4 1001.6c0-4.600 4.200-7 10-7s10 2.400 10 7z" fill="#fff" /><circle cx="710.4" cy="987.6" r="3.7" fill="#fff"/><path d="M709.8 993.8c3.500 0 6.200 1.600 6.200 4.700v0.700h-4.300c-0.300-2.300-1.400-4-3.600-5.100z" fill="#fff"/><path d="M915 990.800l26.800-7.200-11.200 18.600-2.600-7.200 8.200-7.400-10.600 5.400z" fill="#fff"/><path d="M927.600 995.600l3 6.600-5.800-1z" fill="#fff" opacity=".85"/><circle cx="943" cy="1002.3" r="9.2" fill="#17791b"/><circle cx="1039" cy="992.3" r="2.4" fill="#fff"/><circle cx="1049" cy="992.3" r="2.4" fill="#fff"/><circle cx="1059" cy="992.3" r="2.4" fill="#fff"/><path d="M1412.800 996.800c-0.600-2.800 0.600-5.800 3.400-7.600 3.400-2.200 7.600-3.400 12.600-3.400s9.200 1.200 12.600 3.400c2.800 1.800 4 4.800 3.400 7.600-0.300 1.500-1.500 2.300-3 2.100l-3.800-0.600c-1.500-0.200-2.400-1.300-2.400-2.800v-2.600c-2-1.100-4.300-1.600-6.800-1.600s-4.800 0.500-6.800 1.600v2.600c0 1.500-0.900 2.600-2.400 2.800l-3.800 0.600c-1.500 0.200-2.700-0.600-3-2.100z" fill="#f4f4f6"/></svg>
<span class="t " style="left:939.9px;top:995.42px;font-size:11.5px;line-height:14px;color:#fff;font-weight:700;">1</span>
<div class="b" style="left:10px;top:250.4px;width:1448.4px;height:702.2px;background:#2d2d32;border-radius:12px;"></div>
<div class="b" style="left:74.3px;top:250.4px;width:1320.3px;height:701.9px;background:#f0f0f0;"></div>
<div class="b" style="left:80.7px;top:255.5px;width:95.1px;height:24px;background:#e3e3e3;border-radius:5px;"></div>
<div class="b" style="left:179.3px;top:255.2px;width:205.6px;height:24.3px;background:#fff;border-radius:5px;"></div>
<div class="b" style="left:389px;top:255.6px;width:204.7px;height:24px;background:#e5e5e5;border-radius:5px;"></div>
<span class="t " style="left:109.2px;top:260.99px;font-size:11px;line-height:14px;color:#444;letter-spacing:-0.581px;">Главная</span>
<div class="b" style="left:189.6px;top:260.6px;width:13.7px;height:13.4px;background:#f0691c;border-radius:2px;"></div>
<span class="t " style="left:193.2px;top:261.54px;font-size:10px;line-height:12px;color:#fff;font-weight:700;">P</span>
<span class="t " style="left:208.5px;top:260.99px;font-size:11px;line-height:14px;color:#333;letter-spacing:-1.230px;width:136px;overflow:hidden;-webkit-mask-image:linear-gradient(90deg,#000 86%,rgba(0,0,0,.25) 100%);">ЭФФЕКТИВНЫЕ_ПРИЁМЫ_РА</span>
<div class="b" style="left:398.7px;top:260.2px;width:13.7px;height:13.8px;background:#2b6cf0;border-radius:2px;"></div>
<span class="t " style="left:400.7px;top:261.54px;font-size:10px;line-height:12px;color:#fff;font-weight:700;">W</span>
<span class="t " style="left:417px;top:260.99px;font-size:11px;line-height:14px;color:#555;letter-spacing:-0.383px;width:169px;overflow:hidden;-webkit-mask-image:linear-gradient(90deg,#000 86%,rgba(0,0,0,.2) 100%);">Статья_Васильев_АА_Митрофанова</span>
<span class="t " style="left:629.9px;top:260.59px;font-size:11px;line-height:14px;color:#555;letter-spacing:-0.658px;">Создать</span>
<span class="t " style="left:1111.4px;top:260.89px;font-size:11px;line-height:14px;color:#3d6de0;letter-spacing:-0.416px;">Войти</span>
<div class="b" style="left:1161.4px;top:257.5px;width:118.9px;height:20.4px;background:linear-gradient(90deg,#2a6cf8 0%,#3f62f6 50%,#8a4cf0 100%);border-radius:10.2px;"></div>
<span class="t " style="left:1190.3px;top:260.79px;font-size:11px;line-height:14px;color:#fff;letter-spacing:-0.582px;">Black Friday Sale</span>
<span class="t " style="left:105.3px;top:290.42px;font-size:11.5px;line-height:14px;color:#333;letter-spacing:-0.670px;">Меню</span>
<span class="t " style="left:337.5px;top:290.24px;font-size:12px;line-height:15px;color:#3a3a3a;letter-spacing:-0.396px;">Главная</span>
<span class="t " style="left:393.6px;top:290.24px;font-size:12px;line-height:15px;color:#3a3a3a;letter-spacing:-0.586px;">Вставка</span>
<span class="t " style="left:446.9px;top:290.24px;font-size:12px;line-height:15px;color:#3a3a3a;letter-spacing:-0.039px;">Дизайн</span>
<span class="t " style="left:500.4px;top:290.24px;font-size:12px;line-height:15px;color:#3a3a3a;letter-spacing:-0.248px;">Переходы</span>
<span class="t " style="left:568.3px;top:290.24px;font-size:12px;line-height:15px;color:#3a3a3a;letter-spacing:-0.104px;">Анимация</span>
<span class="t " style="left:733.1px;top:290.24px;font-size:12px;line-height:15px;color:#3a3a3a;letter-spacing:-0.126px;">Рецензирование</span>
<span class="t " style="left:837.3px;top:290.24px;font-size:12px;line-height:15px;color:#3a3a3a;letter-spacing:-0.803px;">Вид</span>
<span class="t " style="left:869.2px;top:290.24px;font-size:12px;line-height:15px;color:#3a3a3a;letter-spacing:-0.415px;">Сервис</span>
<span class="t " style="left:942.4px;top:290.24px;font-size:12px;line-height:15px;color:#3a3a3a;letter-spacing:-0.591px;">WPS AI</span>
<span class="t " style="left:636px;top:290.24px;font-size:12px;line-height:15px;color:#c25a14;font-weight:700;letter-spacing:-0.342px;">Показ слайдов</span>
<div class="b" style="left:639px;top:305.6px;width:79px;height:1.8px;background:#d2691e;"></div>
<div class="b" style="left:1198px;top:286.8px;width:80.6px;height:20.4px;background:#fff;border-radius:3px;border:1.3px solid #4d7df2;"></div>
<span class="t " style="left:1204px;top:290.19px;font-size:11px;line-height:14px;color:#3d6de0;letter-spacing:-0.534px;">Поделиться</span>
<svg width="1918" height="1079" viewBox="0 0 1918 1079" style="left:0;top:0" fill="none"><path d="M90.3 262.6l3 9.2 3.6-6.600 3.600 6.600 3.400-9.200" stroke="#e8382c" stroke-width="2" stroke-linejoin="round" stroke-linecap="round"/><rect x="349" y="263.2" width="9.6" height="6.800" rx="1.2" stroke="#8a8a8a" stroke-width="1.1"/><path d="M351.500 272.300h4.600" stroke="#8a8a8a" stroke-width="1.1"/><circle cx="371.4" cy="267.5" r="2.3" fill="#6a6a6a"/><path d="M607.300 267.400h10.600M612.600 262.100v10.600" stroke="#3c4262" stroke-width="1.300"/><rect x="1063.300" y="263.400" width="9.600" height="9.800" rx="1.400" stroke="#555" stroke-width="1.200"/><path d="M1065.300 261.600h8.200a1.400 1.400 0 0 1 1.400 1.400v8.200" stroke="#555" stroke-width="1.200"/><circle cx="1098.100" cy="267.300" r="8.700" fill="#2b5ae0"/><circle cx="1098.100" cy="264.800" r="3" fill="#fff"/><path d="M1092.400 272.600c0.600-2.600 2.800-4 5.700-4s5.100 1.400 5.700 4c-1.500 1.600-3.500 2.500-5.700 2.500s-4.200-0.900-5.700-2.500z" fill="#fff"/><path d="M1182.600 260.600l-5.600 7.600h3.600l-1.600 6 6.200-8.200h-3.800z" fill="#fff"/><path d="M1290 259v18" stroke="#dcdcdc" stroke-width="1"/><path d="M1304.600 267h9" stroke="#555" stroke-width="1.200"/><rect x="1337.600" y="264.400" width="8" height="8" rx="1.200" stroke="#555" stroke-width="1.200"/><path d="M1340 262.300h6.800a1.200 1.200 0 0 1 1.200 1.200v6.800" stroke="#555" stroke-width="1.200"/><path d="M1373 263.400l8.700 8.800M1381.700 263.400l-8.700 8.800" stroke="#444" stroke-width="1.400"/><path d="M91 293h7M91 297.300h7M91 301.600h7" stroke="#444" stroke-width="1.300"/><path d="M144.300 289.500v16" stroke="#d8d8d8" stroke-width="1"/><path d="M157 291.500h7l3.500 3.500v8h-10.500z" stroke="#5a5a5a" stroke-width="1.200" stroke-linejoin="round"/><path d="M159.500 303v-4h5.500v4" stroke="#5a5a5a" stroke-width="1.100"/><circle cx="186" cy="294.500" r="3.300" stroke="#5a5a5a" stroke-width="1.200"/><path d="M183.500 297l-3.800 3.800M179.700 300.800a1.800 1.800 0 1 0 2.600 2.600" stroke="#5a5a5a" stroke-width="1.200"/><path d="M184 292v11" stroke="#5a5a5a" stroke-width="1.200"/><rect x="200" y="295" width="12.500" height="6.500" rx="1.500" stroke="#5a5a5a" stroke-width="1.200"/><path d="M202.500 295v-3.500h7.500v3.500M202.500 299.500h7.500v4h-7.500z" stroke="#5a5a5a" stroke-width="1.200"/><path d="M224.500 295v-3.500h7.500v3.500" stroke="#5a5a5a" stroke-width="1.200"/><path d="M227 302.500h-3.500a1.500 1.500 0 0 1-1.500-1.500v-4.500a1.500 1.500 0 0 1 1.500-1.500h9.500a1.500 1.500 0 0 1 1.500 1.500v1" stroke="#5a5a5a" stroke-width="1.200"/><circle cx="231" cy="300.700" r="2.700" stroke="#5a5a5a" stroke-width="1.200"/><path d="M233 302.700l2.200 2.200" stroke="#5a5a5a" stroke-width="1.200"/><path d="M247.500 294.500h5.500a3.600 3.600 0 0 1 2.500 6.200l-3.500 3.300" stroke="#5a5a5a" stroke-width="1.300"/><path d="M250 291.500l-3 3 3 3" stroke="#5a5a5a" stroke-width="1.300"/><path d="M262.500 296.300l2 2 2-2" stroke="#5a5a5a" stroke-width="1.200"/><path d="M289 294.500h-5.500a3.600 3.600 0 0 0-2.500 6.200l2.500 2.500" stroke="#c8c8c8" stroke-width="1.200"/><path d="M286.500 291.500l3 3-3 3" stroke="#c8c8c8" stroke-width="1.200"/><path d="M302.500 295.500l4 4 4-4" stroke="#5a5a5a" stroke-width="1.200"/><path d="M324.300 289.500v16" stroke="#dcdcdc" stroke-width="1"/><path d="M916.100 289.500v16M990.400 289.500v16" stroke="#dcdcdc" stroke-width="1"/><path d="M931 290.600c0.500 4 1.800 5.800 6 6.700-4.200 0.900-5.500 2.700-6 6.700-0.500-4-1.800-5.800-6-6.700 4.200-0.900 5.500-2.700 6-6.700z" fill="#8a44f2"/><path d="M931 293.600c0.300 2.200 1 3.200 3.200 3.700-2.200 0.500-2.900 1.500-3.200 3.700-0.300-2.200-1-3.200-3.200-3.700 2.200-0.500 2.900-1.500 3.200-3.700z" fill="#4a7af8"/><circle cx="1008.300" cy="296.300" r="4.400" stroke="#444" stroke-width="1.400"/><path d="M1011.600 299.800l4.300 4.300" stroke="#444" stroke-width="1.400"/><path d="M1171.500 302.500h-0.500a3 3 0 0 1-0.600-5.900 4.500 4.500 0 0 1 8.800-0.500 3.300 3.300 0 0 1 2.800 3.200" stroke="#5a5a5a" stroke-width="1.200"/><circle cx="1179" cy="301.300" r="2.500" stroke="#5a5a5a" stroke-width="1.100"/><path d="M1268.300 296.200l1.800 1.800 1.800-1.800" stroke="#3d6de0" stroke-width="1"/><path d="M1291.300 288.500v18" stroke="#dcdcdc" stroke-width="1"/><rect x="1309" y="294.500" width="11" height="7.500" rx="1.500" stroke="#5a5a5a" stroke-width="1.200"/><path d="M1307.300 294v-2M1306.300 293h2M1312 299.500h5M1315 297.500l2 2-2 2" stroke="#5a5a5a" stroke-width="1"/><circle cx="1341" cy="297" r="1.200" fill="#5a5a5a"/><circle cx="1345.200" cy="297" r="1.200" fill="#5a5a5a"/><circle cx="1349.400" cy="297" r="1.200" fill="#5a5a5a"/><path d="M1370 299.400l6.200-5.400 6.200 5.400" stroke="#777" stroke-width="1.200"/></svg>
<div class="b" style="left:84.1px;top:313.7px;width:1299.5px;height:66.3px;background:#fff;border-radius:5px;box-shadow:0 1px 3px rgba(0,0,0,.13);"></div>
<span class="t " style="left:307.9px;top:349.66px;font-size:10.5px;line-height:13px;color:#5c5c5c;letter-spacing:-0.386px;">С начала</span>
<span class="t " style="left:360.2px;top:349.66px;font-size:10.5px;line-height:13px;color:#5c5c5c;letter-spacing:-0.280px;">С текущего слайда</span>
<span class="t " style="left:457.8px;top:349.66px;font-size:10.5px;line-height:13px;color:#5c5c5c;letter-spacing:0.041px;">Показ презентации</span>
<span class="t " style="left:585.9px;top:349.66px;font-size:10.5px;line-height:13px;color:#5c5c5c;letter-spacing:-0.119px;">Параметры</span>
<span class="t " style="left:573.6px;top:362.86px;font-size:10.5px;line-height:13px;color:#5c5c5c;letter-spacing:-0.141px;">показа слайдов</span>
<span class="t " style="left:666.4px;top:349.66px;font-size:10.5px;line-height:13px;color:#5c5c5c;letter-spacing:-0.074px;">Пользовательские</span>
<span class="t " style="left:686.4px;top:362.86px;font-size:10.5px;line-height:13px;color:#5c5c5c;letter-spacing:-0.211px;">слайд-шоу</span>
<span class="t " style="left:766.5px;top:349.66px;font-size:10.5px;line-height:13px;color:#5c5c5c;letter-spacing:-0.281px;">Скрыть слайд</span>
<span class="t " style="left:841.3px;top:349.66px;font-size:10.5px;line-height:13px;color:#5c5c5c;letter-spacing:-0.143px;">Настройка</span>
<span class="t " style="left:843.3px;top:362.86px;font-size:10.5px;line-height:13px;color:#5c5c5c;letter-spacing:-0.183px;">времени</span>
<span class="t " style="left:912.5px;top:349.66px;font-size:10.5px;line-height:13px;color:#5c5c5c;letter-spacing:-0.223px;">Заметки</span>
<span class="t " style="left:904.3px;top:362.86px;font-size:10.5px;line-height:13px;color:#5c5c5c;letter-spacing:-0.227px;">докладчика</span>
<span class="t " style="left:977.9px;top:326.26px;font-size:10.5px;line-height:13px;color:#5c5c5c;letter-spacing:-0.247px;">Выводить на:</span>
<div class="b" style="left:1042.6px;top:322px;width:86px;height:19.7px;background:#fff;border-radius:3px;border:1px solid #dedede;"></div>
<span class="t " style="left:1050.6px;top:326.26px;font-size:10.5px;line-height:13px;color:#5c5c5c;letter-spacing:-0.122px;">Основно...</span>
<div class="b" style="left:980.6px;top:350.1px;width:12.1px;height:12.2px;background:#2b6cf0;border-radius:2.5px;"></div>
<span class="t " style="left:996.7px;top:349.86px;font-size:10.5px;line-height:13px;color:#5c5c5c;letter-spacing:-0.043px;">Использовать режим докладчика</span>
<svg width="1918" height="1079" viewBox="0 0 1918 1079" style="left:0;top:0" fill="none"><path d="M983.300 356.200l2.500 2.500 4.300-4.800" stroke="#fff" stroke-width="1.500" stroke-linecap="round" stroke-linejoin="round"/><path d="M1114.200 330l3.700 3.600 3.700-3.600" stroke="#6a6a6a" stroke-width="1"/><path d="M561.500 318v59M969.400 318v59" stroke="#e6e6e6" stroke-width="1"/><path d="M650.300 369.500l2.200 2.200 2.200-2.200z M886 369.500l2.200 2.200 2.200-2.200z" fill="#6a6a6a"/><path d="M320.500 341.500v-13h16.500v10" stroke="#6a6a6a" stroke-width="1.200"/><path d="M320 343.500h9.500M327.500 341l2.500 2.500-2.500 2.500" stroke="#6a6a6a" stroke-width="1.200"/><path d="M333 339.500l5.500 3.300-5.500 3.300z" stroke="#e8743a" stroke-width="1.100" stroke-linejoin="round"/><circle cx="403.900" cy="336.400" r="8.500" stroke="#6a6a6a" stroke-width="1.200"/><path d="M401.300 332.200l6.600 4.200-6.600 4.200z" stroke="#e8743a" stroke-width="1.200" stroke-linejoin="round"/><path d="M505 345.500h-9v-17h17.500v4" stroke="#6a6a6a" stroke-width="1.200"/><path d="M499.500 332v6l4.500-3zM499 341.500h5.500" stroke="#6a6a6a" stroke-width="1.100" stroke-linejoin="round"/><circle cx="510.500" cy="337.300" r="2.600" stroke="#5a6af0" stroke-width="1.100"/><path d="M506.300 346c0-3 1.800-4.800 4.200-4.800s4.200 1.800 4.200 4.800z" stroke="#5a6af0" stroke-width="1.100"/><path d="M614 340.500h-7.500v-12h16v6" stroke="#6a6a6a" stroke-width="1.200"/><path d="M607 346l4-4h3" stroke="#6a6a6a" stroke-width="1.200"/><circle cx="619.500" cy="341.500" r="3.800" stroke="#6a6a6a" stroke-width="1.100"/><circle cx="619.500" cy="341.500" r="1.500" stroke="#6a6a6a" stroke-width="1"/><path d="M711 340.500h-7v-12h16v6" stroke="#6a6a6a" stroke-width="1.200"/><path d="M704.500 346l4-4h2" stroke="#6a6a6a" stroke-width="1.200"/><path d="M711.500 345.500l1.200-3.300 5.800-5.800 2.200 2.200-5.800 5.800z" stroke="#e8743a" stroke-width="1.100" stroke-linejoin="round"/><path d="M800 345h-9.500v-16.500h17.500v9" stroke="#6a6a6a" stroke-width="1.200"/><rect x="793.500" y="331.500" width="11.500" height="4.500" stroke="#6a6a6a" stroke-width="1"/><path d="M793.500 339.500h5M793.500 342.500h4" stroke="#6a6a6a" stroke-width="1"/><ellipse cx="803.500" cy="342.500" rx="4.500" ry="2.800" stroke="#6a6a6a" stroke-width="1"/><path d="M800.500 346l6.500-7" stroke="#6a6a6a" stroke-width="1"/><path d="M866.500 340.500h-6.500v-12h16v5" stroke="#6a6a6a" stroke-width="1.200"/><path d="M860.500 346l4-4h2" stroke="#6a6a6a" stroke-width="1.200"/><circle cx="872.500" cy="341.500" r="4.300" stroke="#6a6a6a" stroke-width="1.100"/><path d="M872.500 339v2.700h2.200" stroke="#6a6a6a" stroke-width="1"/><path d="M931 345.500h-7.500v-17h17v6" stroke="#6a6a6a" stroke-width="1.200"/><path d="M926.500 332.500h11M926.500 336h8M926.500 339.500h5" stroke="#6a6a6a" stroke-width="1"/><circle cx="937.300" cy="339.800" r="2.300" stroke="#e8743a" stroke-width="1.100"/><path d="M933.500 346.500c0-2.500 1.600-4 3.800-4s3.800 1.500 3.800 4z" stroke="#e8743a" stroke-width="1.100"/></svg>
<div class="b" style="left:297.5px;top:381px;width:1px;height:550.5px;background:#dedede;"></div>
<div class="b" style="left:1346.6px;top:381px;width:1px;height:550.5px;background:#dedede;"></div>
<div class="b" style="left:298px;top:903.4px;width:1048.6px;height:1px;background:#dcdcdc;"></div>
<div class="b" style="left:74.3px;top:931.3px;width:1320.3px;height:1px;background:#e0e0e0;"></div>
<div class="b" style="left:355.5px;top:396.6px;width:871.5px;height:490.69999999999993px;background:radial-gradient(ellipse 66% 72% at 52% 48%,#ffffff 0%,#ffffff 58%,#f1f1f1 80%,#dadada 100%);box-shadow:0 0 3px rgba(0,0,0,.25);"></div>
<svg width="871.5" height="490.69999999999993" viewBox="355.5 396.6 871.5 490.69999999999993" style="left:355.5px;top:396.6px;overflow:hidden"><defs><linearGradient id="g1" x1="0" y1="0" x2="1" y2="1"><stop offset="0" stop-color="#fbfbfc"/><stop offset="0.55" stop-color="#d0d0d5"/><stop offset="1" stop-color="#a4a4ac"/></linearGradient><linearGradient id="g1h" x1="0" y1="0" x2="1" y2="1"><stop offset="0" stop-color="#5e5e68"/><stop offset="0.5" stop-color="#a6a6ae"/><stop offset="1" stop-color="#f2f2f4"/></linearGradient></defs><path d="M0.7910 0.1196 L0.7746 0.2001 L0.9488 0.3159 L0.8526 0.5226 L0.6519 0.4638 L0.6008 0.5282 L0.5434 0.5871 L0.6274 0.7787 L0.4347 0.9006 L0.2976 0.7426 L0.2199 0.7692 L0.1397 0.7877 L0.1068 0.9943 L-0.1211 0.9926 L-0.1511 0.7856 L-0.2309 0.7660 L-0.3083 0.7382 L-0.4477 0.8942 L-0.6386 0.7696 L-0.5518 0.5792 L-0.6084 0.5195 L-0.6585 0.4543 L-0.8600 0.5102 L-0.9533 0.3022 L-0.7774 0.1889 L-0.7927 0.1081 L-0.7996 0.0262 L-0.9994 -0.0358 L-0.9653 -0.2612 L-0.7561 -0.2613 L-0.7253 -0.3376 L-0.6868 -0.4102 L-0.8214 -0.5704 L-0.6709 -0.7416 L-0.4948 -0.6286 L-0.4277 -0.6761 L-0.3560 -0.7164 L-0.3826 -0.9239 L-0.1634 -0.9866 L-0.0764 -0.7963 L0.0058 -0.8000 L0.0878 -0.7952 L0.1776 -0.9841 L0.3959 -0.9183 L0.3663 -0.7112 L0.4373 -0.6699 L0.5038 -0.6214 L0.6815 -0.7319 L0.8295 -0.5585 L0.6927 -0.4003 L0.7301 -0.3271 L0.7598 -0.2504 L0.9690 -0.2472 L0.9998 -0.0214 L0.7991 0.0377Z" transform="translate(392.5 686) rotate(-6) scale(86 66)" fill="#7c7c86"/><path d="M0.7910 0.1196 L0.7746 0.2001 L0.9488 0.3159 L0.8526 0.5226 L0.6519 0.4638 L0.6008 0.5282 L0.5434 0.5871 L0.6274 0.7787 L0.4347 0.9006 L0.2976 0.7426 L0.2199 0.7692 L0.1397 0.7877 L0.1068 0.9943 L-0.1211 0.9926 L-0.1511 0.7856 L-0.2309 0.7660 L-0.3083 0.7382 L-0.4477 0.8942 L-0.6386 0.7696 L-0.5518 0.5792 L-0.6084 0.5195 L-0.6585 0.4543 L-0.8600 0.5102 L-0.9533 0.3022 L-0.7774 0.1889 L-0.7927 0.1081 L-0.7996 0.0262 L-0.9994 -0.0358 L-0.9653 -0.2612 L-0.7561 -0.2613 L-0.7253 -0.3376 L-0.6868 -0.4102 L-0.8214 -0.5704 L-0.6709 -0.7416 L-0.4948 -0.6286 L-0.4277 -0.6761 L-0.3560 -0.7164 L-0.3826 -0.9239 L-0.1634 -0.9866 L-0.0764 -0.7963 L0.0058 -0.8000 L0.0878 -0.7952 L0.1776 -0.9841 L0.3959 -0.9183 L0.3663 -0.7112 L0.4373 -0.6699 L0.5038 -0.6214 L0.6815 -0.7319 L0.8295 -0.5585 L0.6927 -0.4003 L0.7301 -0.3271 L0.7598 -0.2504 L0.9690 -0.2472 L0.9998 -0.0214 L0.7991 0.0377Z" transform="translate(391.65 682.6) rotate(-6) scale(86 66)" fill="#94949c"/><path d="M0.7910 0.1196 L0.7746 0.2001 L0.9488 0.3159 L0.8526 0.5226 L0.6519 0.4638 L0.6008 0.5282 L0.5434 0.5871 L0.6274 0.7787 L0.4347 0.9006 L0.2976 0.7426 L0.2199 0.7692 L0.1397 0.7877 L0.1068 0.9943 L-0.1211 0.9926 L-0.1511 0.7856 L-0.2309 0.7660 L-0.3083 0.7382 L-0.4477 0.8942 L-0.6386 0.7696 L-0.5518 0.5792 L-0.6084 0.5195 L-0.6585 0.4543 L-0.8600 0.5102 L-0.9533 0.3022 L-0.7774 0.1889 L-0.7927 0.1081 L-0.7996 0.0262 L-0.9994 -0.0358 L-0.9653 -0.2612 L-0.7561 -0.2613 L-0.7253 -0.3376 L-0.6868 -0.4102 L-0.8214 -0.5704 L-0.6709 -0.7416 L-0.4948 -0.6286 L-0.4277 -0.6761 L-0.3560 -0.7164 L-0.3826 -0.9239 L-0.1634 -0.9866 L-0.0764 -0.7963 L0.0058 -0.8000 L0.0878 -0.7952 L0.1776 -0.9841 L0.3959 -0.9183 L0.3663 -0.7112 L0.4373 -0.6699 L0.5038 -0.6214 L0.6815 -0.7319 L0.8295 -0.5585 L0.6927 -0.4003 L0.7301 -0.3271 L0.7598 -0.2504 L0.9690 -0.2472 L0.9998 -0.0214 L0.7991 0.0377Z" transform="translate(390.825 679.3) rotate(-6) scale(86 66)" fill="#94949c"/><path d="M0.7910 0.1196 L0.7746 0.2001 L0.9488 0.3159 L0.8526 0.5226 L0.6519 0.4638 L0.6008 0.5282 L0.5434 0.5871 L0.6274 0.7787 L0.4347 0.9006 L0.2976 0.7426 L0.2199 0.7692 L0.1397 0.7877 L0.1068 0.9943 L-0.1211 0.9926 L-0.1511 0.7856 L-0.2309 0.7660 L-0.3083 0.7382 L-0.4477 0.8942 L-0.6386 0.7696 L-0.5518 0.5792 L-0.6084 0.5195 L-0.6585 0.4543 L-0.8600 0.5102 L-0.9533 0.3022 L-0.7774 0.1889 L-0.7927 0.1081 L-0.7996 0.0262 L-0.9994 -0.0358 L-0.9653 -0.2612 L-0.7561 -0.2613 L-0.7253 -0.3376 L-0.6868 -0.4102 L-0.8214 -0.5704 L-0.6709 -0.7416 L-0.4948 -0.6286 L-0.4277 -0.6761 L-0.3560 -0.7164 L-0.3826 -0.9239 L-0.1634 -0.9866 L-0.0764 -0.7963 L0.0058 -0.8000 L0.0878 -0.7952 L0.1776 -0.9841 L0.3959 -0.9183 L0.3663 -0.7112 L0.4373 -0.6699 L0.5038 -0.6214 L0.6815 -0.7319 L0.8295 -0.5585 L0.6927 -0.4003 L0.7301 -0.3271 L0.7598 -0.2504 L0.9690 -0.2472 L0.9998 -0.0214 L0.7991 0.0377Z" transform="translate(390 676) rotate(-6) scale(86 66)" fill="url(#g1)"/><g transform="translate(390 676) rotate(-6) scale(86 66)"><circle cx="0.000" cy="0.000" r="0.400" fill="url(#g1h)"/><ellipse cx="0.088" cy="0.123" rx="0.336" ry="0.312" fill="#fdfdfd"/><circle cx="0.666" cy="0.135" r="0.120" fill="url(#g1h)"/><ellipse cx="0.693" cy="0.172" rx="0.101" ry="0.094" fill="#fdfdfd"/><circle cx="0.310" cy="0.605" r="0.120" fill="url(#g1h)"/><ellipse cx="0.336" cy="0.642" rx="0.101" ry="0.094" fill="#fdfdfd"/><circle cx="-0.280" cy="0.620" r="0.120" fill="url(#g1h)"/><ellipse cx="-0.254" cy="0.657" rx="0.101" ry="0.094" fill="#fdfdfd"/><circle cx="-0.659" cy="0.167" r="0.120" fill="url(#g1h)"/><ellipse cx="-0.633" cy="0.204" rx="0.101" ry="0.094" fill="#fdfdfd"/><circle cx="-0.542" cy="-0.411" r="0.120" fill="url(#g1h)"/><ellipse cx="-0.515" cy="-0.374" rx="0.101" ry="0.094" fill="#fdfdfd"/><circle cx="-0.017" cy="-0.680" r="0.120" fill="url(#g1h)"/><ellipse cx="0.010" cy="-0.643" rx="0.101" ry="0.094" fill="#fdfdfd"/><circle cx="0.521" cy="-0.437" r="0.120" fill="url(#g1h)"/><ellipse cx="0.548" cy="-0.400" rx="0.101" ry="0.094" fill="#fdfdfd"/></g><defs><linearGradient id="g2" x1="0" y1="0" x2="1" y2="1"><stop offset="0" stop-color="#fbfbfc"/><stop offset="0.55" stop-color="#d0d0d5"/><stop offset="1" stop-color="#a4a4ac"/></linearGradient><linearGradient id="g2h" x1="0" y1="0" x2="1" y2="1"><stop offset="0" stop-color="#5e5e68"/><stop offset="0.5" stop-color="#a6a6ae"/><stop offset="1" stop-color="#f2f2f4"/></linearGradient></defs><path d="M0.7990 0.0400 L0.7917 0.1150 L0.9786 0.2056 L0.9145 0.4046 L0.7098 0.3690 L0.6720 0.4341 L0.6281 0.4954 L0.7447 0.6674 L0.5897 0.8076 L0.4303 0.6744 L0.3649 0.7119 L0.2963 0.7431 L0.3113 0.9503 L0.1069 0.9943 L0.0354 0.7992 L-0.0400 0.7990 L-0.1150 0.7917 L-0.2056 0.9786 L-0.4046 0.9145 L-0.3690 0.7098 L-0.4341 0.6720 L-0.4954 0.6281 L-0.6674 0.7447 L-0.8076 0.5897 L-0.6744 0.4303 L-0.7119 0.3649 L-0.7431 0.2963 L-0.9503 0.3113 L-0.9943 0.1069 L-0.7992 0.0354 L-0.7990 -0.0400 L-0.7917 -0.1150 L-0.9786 -0.2056 L-0.9145 -0.4046 L-0.7098 -0.3690 L-0.6720 -0.4341 L-0.6281 -0.4954 L-0.7447 -0.6674 L-0.5897 -0.8076 L-0.4303 -0.6744 L-0.3649 -0.7119 L-0.2963 -0.7431 L-0.3113 -0.9503 L-0.1069 -0.9943 L-0.0354 -0.7992 L0.0400 -0.7990 L0.1150 -0.7917 L0.2056 -0.9786 L0.4046 -0.9145 L0.3690 -0.7098 L0.4341 -0.6720 L0.4954 -0.6281 L0.6674 -0.7447 L0.8076 -0.5897 L0.6744 -0.4303 L0.7119 -0.3649 L0.7431 -0.2963 L0.9503 -0.3113 L0.9943 -0.1069 L0.7992 -0.0354Z" transform="translate(522.5 678) rotate(-8) scale(94 66)" fill="#7c7c86"/><path d="M0.7990 0.0400 L0.7917 0.1150 L0.9786 0.2056 L0.9145 0.4046 L0.7098 0.3690 L0.6720 0.4341 L0.6281 0.4954 L0.7447 0.6674 L0.5897 0.8076 L0.4303 0.6744 L0.3649 0.7119 L0.2963 0.7431 L0.3113 0.9503 L0.1069 0.9943 L0.0354 0.7992 L-0.0400 0.7990 L-0.1150 0.7917 L-0.2056 0.9786 L-0.4046 0.9145 L-0.3690 0.7098 L-0.4341 0.6720 L-0.4954 0.6281 L-0.6674 0.7447 L-0.8076 0.5897 L-0.6744 0.4303 L-0.7119 0.3649 L-0.7431 0.2963 L-0.9503 0.3113 L-0.9943 0.1069 L-0.7992 0.0354 L-0.7990 -0.0400 L-0.7917 -0.1150 L-0.9786 -0.2056 L-0.9145 -0.4046 L-0.7098 -0.3690 L-0.6720 -0.4341 L-0.6281 -0.4954 L-0.7447 -0.6674 L-0.5897 -0.8076 L-0.4303 -0.6744 L-0.3649 -0.7119 L-0.2963 -0.7431 L-0.3113 -0.9503 L-0.1069 -0.9943 L-0.0354 -0.7992 L0.0400 -0.7990 L0.1150 -0.7917 L0.2056 -0.9786 L0.4046 -0.9145 L0.3690 -0.7098 L0.4341 -0.6720 L0.4954 -0.6281 L0.6674 -0.7447 L0.8076 -0.5897 L0.6744 -0.4303 L0.7119 -0.3649 L0.7431 -0.2963 L0.9503 -0.3113 L0.9943 -0.1069 L0.7992 -0.0354Z" transform="translate(521.65 674.6) rotate(-8) scale(94 66)" fill="#94949c"/><path d="M0.7990 0.0400 L0.7917 0.1150 L0.9786 0.2056 L0.9145 0.4046 L0.7098 0.3690 L0.6720 0.4341 L0.6281 0.4954 L0.7447 0.6674 L0.5897 0.8076 L0.4303 0.6744 L0.3649 0.7119 L0.2963 0.7431 L0.3113 0.9503 L0.1069 0.9943 L0.0354 0.7992 L-0.0400 0.7990 L-0.1150 0.7917 L-0.2056 0.9786 L-0.4046 0.9145 L-0.3690 0.7098 L-0.4341 0.6720 L-0.4954 0.6281 L-0.6674 0.7447 L-0.8076 0.5897 L-0.6744 0.4303 L-0.7119 0.3649 L-0.7431 0.2963 L-0.9503 0.3113 L-0.9943 0.1069 L-0.7992 0.0354 L-0.7990 -0.0400 L-0.7917 -0.1150 L-0.9786 -0.2056 L-0.9145 -0.4046 L-0.7098 -0.3690 L-0.6720 -0.4341 L-0.6281 -0.4954 L-0.7447 -0.6674 L-0.5897 -0.8076 L-0.4303 -0.6744 L-0.3649 -0.7119 L-0.2963 -0.7431 L-0.3113 -0.9503 L-0.1069 -0.9943 L-0.0354 -0.7992 L0.0400 -0.7990 L0.1150 -0.7917 L0.2056 -0.9786 L0.4046 -0.9145 L0.3690 -0.7098 L0.4341 -0.6720 L0.4954 -0.6281 L0.6674 -0.7447 L0.8076 -0.5897 L0.6744 -0.4303 L0.7119 -0.3649 L0.7431 -0.2963 L0.9503 -0.3113 L0.9943 -0.1069 L0.7992 -0.0354Z" transform="translate(520.825 671.3) rotate(-8) scale(94 66)" fill="#94949c"/><path d="M0.7990 0.0400 L0.7917 0.1150 L0.9786 0.2056 L0.9145 0.4046 L0.7098 0.3690 L0.6720 0.4341 L0.6281 0.4954 L0.7447 0.6674 L0.5897 0.8076 L0.4303 0.6744 L0.3649 0.7119 L0.2963 0.7431 L0.3113 0.9503 L0.1069 0.9943 L0.0354 0.7992 L-0.0400 0.7990 L-0.1150 0.7917 L-0.2056 0.9786 L-0.4046 0.9145 L-0.3690 0.7098 L-0.4341 0.6720 L-0.4954 0.6281 L-0.6674 0.7447 L-0.8076 0.5897 L-0.6744 0.4303 L-0.7119 0.3649 L-0.7431 0.2963 L-0.9503 0.3113 L-0.9943 0.1069 L-0.7992 0.0354 L-0.7990 -0.0400 L-0.7917 -0.1150 L-0.9786 -0.2056 L-0.9145 -0.4046 L-0.7098 -0.3690 L-0.6720 -0.4341 L-0.6281 -0.4954 L-0.7447 -0.6674 L-0.5897 -0.8076 L-0.4303 -0.6744 L-0.3649 -0.7119 L-0.2963 -0.7431 L-0.3113 -0.9503 L-0.1069 -0.9943 L-0.0354 -0.7992 L0.0400 -0.7990 L0.1150 -0.7917 L0.2056 -0.9786 L0.4046 -0.9145 L0.3690 -0.7098 L0.4341 -0.6720 L0.4954 -0.6281 L0.6674 -0.7447 L0.8076 -0.5897 L0.6744 -0.4303 L0.7119 -0.3649 L0.7431 -0.2963 L0.9503 -0.3113 L0.9943 -0.1069 L0.7992 -0.0354Z" transform="translate(520 668) rotate(-8) scale(94 66)" fill="url(#g2)"/><g transform="translate(520 668) rotate(-8) scale(94 66)"><circle cx="0.000" cy="0.000" r="0.370" fill="url(#g2h)"/><ellipse cx="0.081" cy="0.114" rx="0.311" ry="0.289" fill="#fdfdfd"/><circle cx="0.647" cy="0.131" r="0.115" fill="url(#g2h)"/><ellipse cx="0.672" cy="0.167" rx="0.097" ry="0.090" fill="#fdfdfd"/><circle cx="0.365" cy="0.550" r="0.115" fill="url(#g2h)"/><ellipse cx="0.390" cy="0.586" rx="0.097" ry="0.090" fill="#fdfdfd"/><circle cx="-0.131" cy="0.647" r="0.115" fill="url(#g2h)"/><ellipse cx="-0.106" cy="0.682" rx="0.097" ry="0.090" fill="#fdfdfd"/><circle cx="-0.550" cy="0.365" r="0.115" fill="url(#g2h)"/><ellipse cx="-0.525" cy="0.400" rx="0.097" ry="0.090" fill="#fdfdfd"/><circle cx="-0.647" cy="-0.131" r="0.115" fill="url(#g2h)"/><ellipse cx="-0.622" cy="-0.096" rx="0.097" ry="0.090" fill="#fdfdfd"/><circle cx="-0.365" cy="-0.550" r="0.115" fill="url(#g2h)"/><ellipse cx="-0.339" cy="-0.515" rx="0.097" ry="0.090" fill="#fdfdfd"/><circle cx="0.131" cy="-0.647" r="0.115" fill="url(#g2h)"/><ellipse cx="0.156" cy="-0.611" rx="0.097" ry="0.090" fill="#fdfdfd"/><circle cx="0.550" cy="-0.365" r="0.115" fill="url(#g2h)"/><ellipse cx="0.575" cy="-0.329" rx="0.097" ry="0.090" fill="#fdfdfd"/></g><defs><linearGradient id="g3" x1="0" y1="0" x2="1" y2="1"><stop offset="0" stop-color="#fbfbfc"/><stop offset="0.55" stop-color="#d0d0d5"/><stop offset="1" stop-color="#a4a4ac"/></linearGradient><linearGradient id="g3h" x1="0" y1="0" x2="1" y2="1"><stop offset="0" stop-color="#5e5e68"/><stop offset="0.5" stop-color="#a6a6ae"/><stop offset="1" stop-color="#f2f2f4"/></linearGradient></defs><path d="M0.7841 0.1589 L0.7656 0.2320 L0.9369 0.3495 L0.8438 0.5367 L0.6467 0.4709 L0.5995 0.5297 L0.5470 0.5837 L0.6366 0.7712 L0.4624 0.8867 L0.3246 0.7312 L0.2544 0.7585 L0.1819 0.7791 L0.1658 0.9862 L-0.0429 0.9991 L-0.0844 0.7955 L-0.1589 0.7841 L-0.2320 0.7656 L-0.3495 0.9369 L-0.5367 0.8438 L-0.4709 0.6467 L-0.5297 0.5995 L-0.5837 0.5470 L-0.7712 0.6366 L-0.8867 0.4624 L-0.7312 0.3246 L-0.7585 0.2544 L-0.7791 0.1819 L-0.9862 0.1658 L-0.9991 -0.0429 L-0.7955 -0.0844 L-0.7841 -0.1589 L-0.7656 -0.2320 L-0.9369 -0.3495 L-0.8438 -0.5367 L-0.6467 -0.4709 L-0.5995 -0.5297 L-0.5470 -0.5837 L-0.6366 -0.7712 L-0.4624 -0.8867 L-0.3246 -0.7312 L-0.2544 -0.7585 L-0.1819 -0.7791 L-0.1658 -0.9862 L0.0429 -0.9991 L0.0844 -0.7955 L0.1589 -0.7841 L0.2320 -0.7656 L0.3495 -0.9369 L0.5367 -0.8438 L0.4709 -0.6467 L0.5297 -0.5995 L0.5837 -0.5470 L0.7712 -0.6366 L0.8867 -0.4624 L0.7312 -0.3246 L0.7585 -0.2544 L0.7791 -0.1819 L0.9862 -0.1658 L0.9991 0.0429 L0.7955 0.0844Z" transform="translate(420.75 847) rotate(-6) scale(98 84)" fill="#7c7c86"/><path d="M0.7841 0.1589 L0.7656 0.2320 L0.9369 0.3495 L0.8438 0.5367 L0.6467 0.4709 L0.5995 0.5297 L0.5470 0.5837 L0.6366 0.7712 L0.4624 0.8867 L0.3246 0.7312 L0.2544 0.7585 L0.1819 0.7791 L0.1658 0.9862 L-0.0429 0.9991 L-0.0844 0.7955 L-0.1589 0.7841 L-0.2320 0.7656 L-0.3495 0.9369 L-0.5367 0.8438 L-0.4709 0.6467 L-0.5297 0.5995 L-0.5837 0.5470 L-0.7712 0.6366 L-0.8867 0.4624 L-0.7312 0.3246 L-0.7585 0.2544 L-0.7791 0.1819 L-0.9862 0.1658 L-0.9991 -0.0429 L-0.7955 -0.0844 L-0.7841 -0.1589 L-0.7656 -0.2320 L-0.9369 -0.3495 L-0.8438 -0.5367 L-0.6467 -0.4709 L-0.5995 -0.5297 L-0.5470 -0.5837 L-0.6366 -0.7712 L-0.4624 -0.8867 L-0.3246 -0.7312 L-0.2544 -0.7585 L-0.1819 -0.7791 L-0.1658 -0.9862 L0.0429 -0.9991 L0.0844 -0.7955 L0.1589 -0.7841 L0.2320 -0.7656 L0.3495 -0.9369 L0.5367 -0.8438 L0.4709 -0.6467 L0.5297 -0.5995 L0.5837 -0.5470 L0.7712 -0.6366 L0.8867 -0.4624 L0.7312 -0.3246 L0.7585 -0.2544 L0.7791 -0.1819 L0.9862 -0.1658 L0.9991 0.0429 L0.7955 0.0844Z" transform="translate(419.815 843.26) rotate(-6) scale(98 84)" fill="#94949c"/><path d="M0.7841 0.1589 L0.7656 0.2320 L0.9369 0.3495 L0.8438 0.5367 L0.6467 0.4709 L0.5995 0.5297 L0.5470 0.5837 L0.6366 0.7712 L0.4624 0.8867 L0.3246 0.7312 L0.2544 0.7585 L0.1819 0.7791 L0.1658 0.9862 L-0.0429 0.9991 L-0.0844 0.7955 L-0.1589 0.7841 L-0.2320 0.7656 L-0.3495 0.9369 L-0.5367 0.8438 L-0.4709 0.6467 L-0.5297 0.5995 L-0.5837 0.5470 L-0.7712 0.6366 L-0.8867 0.4624 L-0.7312 0.3246 L-0.7585 0.2544 L-0.7791 0.1819 L-0.9862 0.1658 L-0.9991 -0.0429 L-0.7955 -0.0844 L-0.7841 -0.1589 L-0.7656 -0.2320 L-0.9369 -0.3495 L-0.8438 -0.5367 L-0.6467 -0.4709 L-0.5995 -0.5297 L-0.5470 -0.5837 L-0.6366 -0.7712 L-0.4624 -0.8867 L-0.3246 -0.7312 L-0.2544 -0.7585 L-0.1819 -0.7791 L-0.1658 -0.9862 L0.0429 -0.9991 L0.0844 -0.7955 L0.1589 -0.7841 L0.2320 -0.7656 L0.3495 -0.9369 L0.5367 -0.8438 L0.4709 -0.6467 L0.5297 -0.5995 L0.5837 -0.5470 L0.7712 -0.6366 L0.8867 -0.4624 L0.7312 -0.3246 L0.7585 -0.2544 L0.7791 -0.1819 L0.9862 -0.1658 L0.9991 0.0429 L0.7955 0.0844Z" transform="translate(418.9075 839.63) rotate(-6) scale(98 84)" fill="#94949c"/><path d="M0.7841 0.1589 L0.7656 0.2320 L0.9369 0.3495 L0.8438 0.5367 L0.6467 0.4709 L0.5995 0.5297 L0.5470 0.5837 L0.6366 0.7712 L0.4624 0.8867 L0.3246 0.7312 L0.2544 0.7585 L0.1819 0.7791 L0.1658 0.9862 L-0.0429 0.9991 L-0.0844 0.7955 L-0.1589 0.7841 L-0.2320 0.7656 L-0.3495 0.9369 L-0.5367 0.8438 L-0.4709 0.6467 L-0.5297 0.5995 L-0.5837 0.5470 L-0.7712 0.6366 L-0.8867 0.4624 L-0.7312 0.3246 L-0.7585 0.2544 L-0.7791 0.1819 L-0.9862 0.1658 L-0.9991 -0.0429 L-0.7955 -0.0844 L-0.7841 -0.1589 L-0.7656 -0.2320 L-0.9369 -0.3495 L-0.8438 -0.5367 L-0.6467 -0.4709 L-0.5995 -0.5297 L-0.5470 -0.5837 L-0.6366 -0.7712 L-0.4624 -0.8867 L-0.3246 -0.7312 L-0.2544 -0.7585 L-0.1819 -0.7791 L-0.1658 -0.9862 L0.0429 -0.9991 L0.0844 -0.7955 L0.1589 -0.7841 L0.2320 -0.7656 L0.3495 -0.9369 L0.5367 -0.8438 L0.4709 -0.6467 L0.5297 -0.5995 L0.5837 -0.5470 L0.7712 -0.6366 L0.8867 -0.4624 L0.7312 -0.3246 L0.7585 -0.2544 L0.7791 -0.1819 L0.9862 -0.1658 L0.9991 0.0429 L0.7955 0.0844Z" transform="translate(418 836) rotate(-6) scale(98 84)" fill="url(#g3)"/><g transform="translate(418 836) rotate(-6) scale(98 84)"><circle cx="0.000" cy="0.000" r="0.360" fill="url(#g3h)"/><ellipse cx="0.079" cy="0.111" rx="0.302" ry="0.281" fill="#fdfdfd"/><circle cx="0.666" cy="0.135" r="0.115" fill="url(#g3h)"/><ellipse cx="0.692" cy="0.171" rx="0.097" ry="0.090" fill="#fdfdfd"/><circle cx="0.376" cy="0.567" r="0.115" fill="url(#g3h)"/><ellipse cx="0.401" cy="0.602" rx="0.097" ry="0.090" fill="#fdfdfd"/><circle cx="-0.135" cy="0.666" r="0.115" fill="url(#g3h)"/><ellipse cx="-0.110" cy="0.702" rx="0.097" ry="0.090" fill="#fdfdfd"/><circle cx="-0.567" cy="0.376" r="0.115" fill="url(#g3h)"/><ellipse cx="-0.541" cy="0.411" rx="0.097" ry="0.090" fill="#fdfdfd"/><circle cx="-0.666" cy="-0.135" r="0.115" fill="url(#g3h)"/><ellipse cx="-0.641" cy="-0.100" rx="0.097" ry="0.090" fill="#fdfdfd"/><circle cx="-0.376" cy="-0.567" r="0.115" fill="url(#g3h)"/><ellipse cx="-0.350" cy="-0.531" rx="0.097" ry="0.090" fill="#fdfdfd"/><circle cx="0.135" cy="-0.666" r="0.115" fill="url(#g3h)"/><ellipse cx="0.160" cy="-0.631" rx="0.097" ry="0.090" fill="#fdfdfd"/><circle cx="0.567" cy="-0.376" r="0.115" fill="url(#g3h)"/><ellipse cx="0.592" cy="-0.340" rx="0.097" ry="0.090" fill="#fdfdfd"/></g><defs><linearGradient id="g4" x1="0" y1="0" x2="1" y2="1"><stop offset="0" stop-color="#fbfbfc"/><stop offset="0.55" stop-color="#d0d0d5"/><stop offset="1" stop-color="#a4a4ac"/></linearGradient><linearGradient id="g4h" x1="0" y1="0" x2="1" y2="1"><stop offset="0" stop-color="#5e5e68"/><stop offset="0.5" stop-color="#a6a6ae"/><stop offset="1" stop-color="#f2f2f4"/></linearGradient></defs><path d="M0.7960 0.0799 L0.7870 0.1438 L0.9726 0.2325 L0.9155 0.4024 L0.7140 0.3609 L0.6825 0.4173 L0.6466 0.4710 L0.7754 0.6315 L0.6502 0.7598 L0.4867 0.6349 L0.4339 0.6721 L0.3782 0.7050 L0.4246 0.9054 L0.2562 0.9666 L0.1630 0.7832 L0.0993 0.7938 L0.0349 0.7992 L-0.0102 0.9999 L-0.1886 0.9820 L-0.1930 0.7764 L-0.2550 0.7583 L-0.3153 0.7352 L-0.4431 0.8965 L-0.5960 0.8030 L-0.5107 0.6158 L-0.5587 0.5725 L-0.6031 0.5256 L-0.7882 0.6155 L-0.8854 0.4648 L-0.7273 0.3332 L-0.7518 0.2734 L-0.7714 0.2119 L-0.9772 0.2125 L-0.9994 0.0346 L-0.7999 -0.0154 L-0.7960 -0.0799 L-0.7870 -0.1438 L-0.9726 -0.2325 L-0.9155 -0.4024 L-0.7140 -0.3609 L-0.6825 -0.4173 L-0.6466 -0.4710 L-0.7754 -0.6315 L-0.6502 -0.7598 L-0.4867 -0.6349 L-0.4339 -0.6721 L-0.3782 -0.7050 L-0.4246 -0.9054 L-0.2562 -0.9666 L-0.1630 -0.7832 L-0.0993 -0.7938 L-0.0349 -0.7992 L0.0102 -0.9999 L0.1886 -0.9820 L0.1930 -0.7764 L0.2550 -0.7583 L0.3153 -0.7352 L0.4431 -0.8965 L0.5960 -0.8030 L0.5107 -0.6158 L0.5587 -0.5725 L0.6031 -0.5256 L0.7882 -0.6155 L0.8854 -0.4648 L0.7273 -0.3332 L0.7518 -0.2734 L0.7714 -0.2119 L0.9772 -0.2125 L0.9994 -0.0346 L0.7999 0.0154Z" transform="translate(874.75 900) rotate(-5) scale(72 57)" fill="#7c7c86"/><path d="M0.7960 0.0799 L0.7870 0.1438 L0.9726 0.2325 L0.9155 0.4024 L0.7140 0.3609 L0.6825 0.4173 L0.6466 0.4710 L0.7754 0.6315 L0.6502 0.7598 L0.4867 0.6349 L0.4339 0.6721 L0.3782 0.7050 L0.4246 0.9054 L0.2562 0.9666 L0.1630 0.7832 L0.0993 0.7938 L0.0349 0.7992 L-0.0102 0.9999 L-0.1886 0.9820 L-0.1930 0.7764 L-0.2550 0.7583 L-0.3153 0.7352 L-0.4431 0.8965 L-0.5960 0.8030 L-0.5107 0.6158 L-0.5587 0.5725 L-0.6031 0.5256 L-0.7882 0.6155 L-0.8854 0.4648 L-0.7273 0.3332 L-0.7518 0.2734 L-0.7714 0.2119 L-0.9772 0.2125 L-0.9994 0.0346 L-0.7999 -0.0154 L-0.7960 -0.0799 L-0.7870 -0.1438 L-0.9726 -0.2325 L-0.9155 -0.4024 L-0.7140 -0.3609 L-0.6825 -0.4173 L-0.6466 -0.4710 L-0.7754 -0.6315 L-0.6502 -0.7598 L-0.4867 -0.6349 L-0.4339 -0.6721 L-0.3782 -0.7050 L-0.4246 -0.9054 L-0.2562 -0.9666 L-0.1630 -0.7832 L-0.0993 -0.7938 L-0.0349 -0.7992 L0.0102 -0.9999 L0.1886 -0.9820 L0.1930 -0.7764 L0.2550 -0.7583 L0.3153 -0.7352 L0.4431 -0.8965 L0.5960 -0.8030 L0.5107 -0.6158 L0.5587 -0.5725 L0.6031 -0.5256 L0.7882 -0.6155 L0.8854 -0.4648 L0.7273 -0.3332 L0.7518 -0.2734 L0.7714 -0.2119 L0.9772 -0.2125 L0.9994 -0.0346 L0.7999 0.0154Z" transform="translate(874.155 897.62) rotate(-5) scale(72 57)" fill="#94949c"/><path d="M0.7960 0.0799 L0.7870 0.1438 L0.9726 0.2325 L0.9155 0.4024 L0.7140 0.3609 L0.6825 0.4173 L0.6466 0.4710 L0.7754 0.6315 L0.6502 0.7598 L0.4867 0.6349 L0.4339 0.6721 L0.3782 0.7050 L0.4246 0.9054 L0.2562 0.9666 L0.1630 0.7832 L0.0993 0.7938 L0.0349 0.7992 L-0.0102 0.9999 L-0.1886 0.9820 L-0.1930 0.7764 L-0.2550 0.7583 L-0.3153 0.7352 L-0.4431 0.8965 L-0.5960 0.8030 L-0.5107 0.6158 L-0.5587 0.5725 L-0.6031 0.5256 L-0.7882 0.6155 L-0.8854 0.4648 L-0.7273 0.3332 L-0.7518 0.2734 L-0.7714 0.2119 L-0.9772 0.2125 L-0.9994 0.0346 L-0.7999 -0.0154 L-0.7960 -0.0799 L-0.7870 -0.1438 L-0.9726 -0.2325 L-0.9155 -0.4024 L-0.7140 -0.3609 L-0.6825 -0.4173 L-0.6466 -0.4710 L-0.7754 -0.6315 L-0.6502 -0.7598 L-0.4867 -0.6349 L-0.4339 -0.6721 L-0.3782 -0.7050 L-0.4246 -0.9054 L-0.2562 -0.9666 L-0.1630 -0.7832 L-0.0993 -0.7938 L-0.0349 -0.7992 L0.0102 -0.9999 L0.1886 -0.9820 L0.1930 -0.7764 L0.2550 -0.7583 L0.3153 -0.7352 L0.4431 -0.8965 L0.5960 -0.8030 L0.5107 -0.6158 L0.5587 -0.5725 L0.6031 -0.5256 L0.7882 -0.6155 L0.8854 -0.4648 L0.7273 -0.3332 L0.7518 -0.2734 L0.7714 -0.2119 L0.9772 -0.2125 L0.9994 -0.0346 L0.7999 0.0154Z" transform="translate(873.5775 895.31) rotate(-5) scale(72 57)" fill="#94949c"/><path d="M0.7960 0.0799 L0.7870 0.1438 L0.9726 0.2325 L0.9155 0.4024 L0.7140 0.3609 L0.6825 0.4173 L0.6466 0.4710 L0.7754 0.6315 L0.6502 0.7598 L0.4867 0.6349 L0.4339 0.6721 L0.3782 0.7050 L0.4246 0.9054 L0.2562 0.9666 L0.1630 0.7832 L0.0993 0.7938 L0.0349 0.7992 L-0.0102 0.9999 L-0.1886 0.9820 L-0.1930 0.7764 L-0.2550 0.7583 L-0.3153 0.7352 L-0.4431 0.8965 L-0.5960 0.8030 L-0.5107 0.6158 L-0.5587 0.5725 L-0.6031 0.5256 L-0.7882 0.6155 L-0.8854 0.4648 L-0.7273 0.3332 L-0.7518 0.2734 L-0.7714 0.2119 L-0.9772 0.2125 L-0.9994 0.0346 L-0.7999 -0.0154 L-0.7960 -0.0799 L-0.7870 -0.1438 L-0.9726 -0.2325 L-0.9155 -0.4024 L-0.7140 -0.3609 L-0.6825 -0.4173 L-0.6466 -0.4710 L-0.7754 -0.6315 L-0.6502 -0.7598 L-0.4867 -0.6349 L-0.4339 -0.6721 L-0.3782 -0.7050 L-0.4246 -0.9054 L-0.2562 -0.9666 L-0.1630 -0.7832 L-0.0993 -0.7938 L-0.0349 -0.7992 L0.0102 -0.9999 L0.1886 -0.9820 L0.1930 -0.7764 L0.2550 -0.7583 L0.3153 -0.7352 L0.4431 -0.8965 L0.5960 -0.8030 L0.5107 -0.6158 L0.5587 -0.5725 L0.6031 -0.5256 L0.7882 -0.6155 L0.8854 -0.4648 L0.7273 -0.3332 L0.7518 -0.2734 L0.7714 -0.2119 L0.9772 -0.2125 L0.9994 -0.0346 L0.7999 0.0154Z" transform="translate(873 893) rotate(-5) scale(72 57)" fill="url(#g4)"/><g transform="translate(873 893) rotate(-5) scale(72 57)"><circle cx="0.000" cy="0.000" r="0.340" fill="url(#g4h)"/><ellipse cx="0.075" cy="0.105" rx="0.286" ry="0.265" fill="#fdfdfd"/><circle cx="0.647" cy="0.131" r="0.100" fill="url(#g4h)"/><ellipse cx="0.669" cy="0.162" rx="0.084" ry="0.078" fill="#fdfdfd"/><circle cx="0.365" cy="0.550" r="0.100" fill="url(#g4h)"/><ellipse cx="0.387" cy="0.581" rx="0.084" ry="0.078" fill="#fdfdfd"/><circle cx="-0.131" cy="0.647" r="0.100" fill="url(#g4h)"/><ellipse cx="-0.109" cy="0.678" rx="0.084" ry="0.078" fill="#fdfdfd"/><circle cx="-0.550" cy="0.365" r="0.100" fill="url(#g4h)"/><ellipse cx="-0.528" cy="0.395" rx="0.084" ry="0.078" fill="#fdfdfd"/><circle cx="-0.647" cy="-0.131" r="0.100" fill="url(#g4h)"/><ellipse cx="-0.625" cy="-0.100" rx="0.084" ry="0.078" fill="#fdfdfd"/><circle cx="-0.365" cy="-0.550" r="0.100" fill="url(#g4h)"/><ellipse cx="-0.343" cy="-0.519" rx="0.084" ry="0.078" fill="#fdfdfd"/><circle cx="0.131" cy="-0.647" r="0.100" fill="url(#g4h)"/><ellipse cx="0.153" cy="-0.616" rx="0.084" ry="0.078" fill="#fdfdfd"/><circle cx="0.550" cy="-0.365" r="0.100" fill="url(#g4h)"/><ellipse cx="0.572" cy="-0.334" rx="0.084" ry="0.078" fill="#fdfdfd"/></g><defs><linearGradient id="g5" x1="0" y1="0" x2="1" y2="1"><stop offset="0" stop-color="#fbfbfc"/><stop offset="0.55" stop-color="#d0d0d5"/><stop offset="1" stop-color="#a4a4ac"/></linearGradient><linearGradient id="g5h" x1="0" y1="0" x2="1" y2="1"><stop offset="0" stop-color="#5e5e68"/><stop offset="0.5" stop-color="#a6a6ae"/><stop offset="1" stop-color="#f2f2f4"/></linearGradient></defs><path d="M0.7942 0.0958 L0.7855 0.1516 L0.9719 0.2356 L0.9230 0.3847 L0.7231 0.3422 L0.6971 0.3924 L0.6677 0.4407 L0.8077 0.5896 L0.7056 0.7087 L0.5371 0.5929 L0.4939 0.6293 L0.4482 0.6626 L0.5206 0.8538 L0.3807 0.9247 L0.2693 0.7533 L0.2155 0.7704 L0.1605 0.7837 L0.1543 0.9880 L-0.0022 1.0000 L-0.0394 0.7990 L-0.0958 0.7942 L-0.1516 0.7855 L-0.2356 0.9719 L-0.3847 0.9230 L-0.3422 0.7231 L-0.3924 0.6971 L-0.4407 0.6677 L-0.5896 0.8077 L-0.7087 0.7056 L-0.5929 0.5371 L-0.6293 0.4939 L-0.6626 0.4482 L-0.8538 0.5206 L-0.9247 0.3807 L-0.7533 0.2693 L-0.7704 0.2155 L-0.7837 0.1605 L-0.9880 0.1543 L-1.0000 -0.0022 L-0.7990 -0.0394 L-0.7942 -0.0958 L-0.7855 -0.1516 L-0.9719 -0.2356 L-0.9230 -0.3847 L-0.7231 -0.3422 L-0.6971 -0.3924 L-0.6677 -0.4407 L-0.8077 -0.5896 L-0.7056 -0.7087 L-0.5371 -0.5929 L-0.4939 -0.6293 L-0.4482 -0.6626 L-0.5206 -0.8538 L-0.3807 -0.9247 L-0.2693 -0.7533 L-0.2155 -0.7704 L-0.1605 -0.7837 L-0.1543 -0.9880 L0.0022 -1.0000 L0.0394 -0.7990 L0.0958 -0.7942 L0.1516 -0.7855 L0.2356 -0.9719 L0.3847 -0.9230 L0.3422 -0.7231 L0.3924 -0.6971 L0.4407 -0.6677 L0.5896 -0.8077 L0.7087 -0.7056 L0.5929 -0.5371 L0.6293 -0.4939 L0.6626 -0.4482 L0.8538 -0.5206 L0.9247 -0.3807 L0.7533 -0.2693 L0.7704 -0.2155 L0.7837 -0.1605 L0.9880 -0.1543 L1.0000 0.0022 L0.7990 0.0394Z" transform="translate(631.75 823) rotate(-12) scale(168 126)" fill="#7c7c86"/><path d="M0.7942 0.0958 L0.7855 0.1516 L0.9719 0.2356 L0.9230 0.3847 L0.7231 0.3422 L0.6971 0.3924 L0.6677 0.4407 L0.8077 0.5896 L0.7056 0.7087 L0.5371 0.5929 L0.4939 0.6293 L0.4482 0.6626 L0.5206 0.8538 L0.3807 0.9247 L0.2693 0.7533 L0.2155 0.7704 L0.1605 0.7837 L0.1543 0.9880 L-0.0022 1.0000 L-0.0394 0.7990 L-0.0958 0.7942 L-0.1516 0.7855 L-0.2356 0.9719 L-0.3847 0.9230 L-0.3422 0.7231 L-0.3924 0.6971 L-0.4407 0.6677 L-0.5896 0.8077 L-0.7087 0.7056 L-0.5929 0.5371 L-0.6293 0.4939 L-0.6626 0.4482 L-0.8538 0.5206 L-0.9247 0.3807 L-0.7533 0.2693 L-0.7704 0.2155 L-0.7837 0.1605 L-0.9880 0.1543 L-1.0000 -0.0022 L-0.7990 -0.0394 L-0.7942 -0.0958 L-0.7855 -0.1516 L-0.9719 -0.2356 L-0.9230 -0.3847 L-0.7231 -0.3422 L-0.6971 -0.3924 L-0.6677 -0.4407 L-0.8077 -0.5896 L-0.7056 -0.7087 L-0.5371 -0.5929 L-0.4939 -0.6293 L-0.4482 -0.6626 L-0.5206 -0.8538 L-0.3807 -0.9247 L-0.2693 -0.7533 L-0.2155 -0.7704 L-0.1605 -0.7837 L-0.1543 -0.9880 L0.0022 -1.0000 L0.0394 -0.7990 L0.0958 -0.7942 L0.1516 -0.7855 L0.2356 -0.9719 L0.3847 -0.9230 L0.3422 -0.7231 L0.3924 -0.6971 L0.4407 -0.6677 L0.5896 -0.8077 L0.7087 -0.7056 L0.5929 -0.5371 L0.6293 -0.4939 L0.6626 -0.4482 L0.8538 -0.5206 L0.9247 -0.3807 L0.7533 -0.2693 L0.7704 -0.2155 L0.7837 -0.1605 L0.9880 -0.1543 L1.0000 0.0022 L0.7990 0.0394Z" transform="translate(630.475 817.9) rotate(-12) scale(168 126)" fill="#94949c"/><path d="M0.7942 0.0958 L0.7855 0.1516 L0.9719 0.2356 L0.9230 0.3847 L0.7231 0.3422 L0.6971 0.3924 L0.6677 0.4407 L0.8077 0.5896 L0.7056 0.7087 L0.5371 0.5929 L0.4939 0.6293 L0.4482 0.6626 L0.5206 0.8538 L0.3807 0.9247 L0.2693 0.7533 L0.2155 0.7704 L0.1605 0.7837 L0.1543 0.9880 L-0.0022 1.0000 L-0.0394 0.7990 L-0.0958 0.7942 L-0.1516 0.7855 L-0.2356 0.9719 L-0.3847 0.9230 L-0.3422 0.7231 L-0.3924 0.6971 L-0.4407 0.6677 L-0.5896 0.8077 L-0.7087 0.7056 L-0.5929 0.5371 L-0.6293 0.4939 L-0.6626 0.4482 L-0.8538 0.5206 L-0.9247 0.3807 L-0.7533 0.2693 L-0.7704 0.2155 L-0.7837 0.1605 L-0.9880 0.1543 L-1.0000 -0.0022 L-0.7990 -0.0394 L-0.7942 -0.0958 L-0.7855 -0.1516 L-0.9719 -0.2356 L-0.9230 -0.3847 L-0.7231 -0.3422 L-0.6971 -0.3924 L-0.6677 -0.4407 L-0.8077 -0.5896 L-0.7056 -0.7087 L-0.5371 -0.5929 L-0.4939 -0.6293 L-0.4482 -0.6626 L-0.5206 -0.8538 L-0.3807 -0.9247 L-0.2693 -0.7533 L-0.2155 -0.7704 L-0.1605 -0.7837 L-0.1543 -0.9880 L0.0022 -1.0000 L0.0394 -0.7990 L0.0958 -0.7942 L0.1516 -0.7855 L0.2356 -0.9719 L0.3847 -0.9230 L0.3422 -0.7231 L0.3924 -0.6971 L0.4407 -0.6677 L0.5896 -0.8077 L0.7087 -0.7056 L0.5929 -0.5371 L0.6293 -0.4939 L0.6626 -0.4482 L0.8538 -0.5206 L0.9247 -0.3807 L0.7533 -0.2693 L0.7704 -0.2155 L0.7837 -0.1605 L0.9880 -0.1543 L1.0000 0.0022 L0.7990 0.0394Z" transform="translate(629.2375 812.95) rotate(-12) scale(168 126)" fill="#94949c"/><path d="M0.7942 0.0958 L0.7855 0.1516 L0.9719 0.2356 L0.9230 0.3847 L0.7231 0.3422 L0.6971 0.3924 L0.6677 0.4407 L0.8077 0.5896 L0.7056 0.7087 L0.5371 0.5929 L0.4939 0.6293 L0.4482 0.6626 L0.5206 0.8538 L0.3807 0.9247 L0.2693 0.7533 L0.2155 0.7704 L0.1605 0.7837 L0.1543 0.9880 L-0.0022 1.0000 L-0.0394 0.7990 L-0.0958 0.7942 L-0.1516 0.7855 L-0.2356 0.9719 L-0.3847 0.9230 L-0.3422 0.7231 L-0.3924 0.6971 L-0.4407 0.6677 L-0.5896 0.8077 L-0.7087 0.7056 L-0.5929 0.5371 L-0.6293 0.4939 L-0.6626 0.4482 L-0.8538 0.5206 L-0.9247 0.3807 L-0.7533 0.2693 L-0.7704 0.2155 L-0.7837 0.1605 L-0.9880 0.1543 L-1.0000 -0.0022 L-0.7990 -0.0394 L-0.7942 -0.0958 L-0.7855 -0.1516 L-0.9719 -0.2356 L-0.9230 -0.3847 L-0.7231 -0.3422 L-0.6971 -0.3924 L-0.6677 -0.4407 L-0.8077 -0.5896 L-0.7056 -0.7087 L-0.5371 -0.5929 L-0.4939 -0.6293 L-0.4482 -0.6626 L-0.5206 -0.8538 L-0.3807 -0.9247 L-0.2693 -0.7533 L-0.2155 -0.7704 L-0.1605 -0.7837 L-0.1543 -0.9880 L0.0022 -1.0000 L0.0394 -0.7990 L0.0958 -0.7942 L0.1516 -0.7855 L0.2356 -0.9719 L0.3847 -0.9230 L0.3422 -0.7231 L0.3924 -0.6971 L0.4407 -0.6677 L0.5896 -0.8077 L0.7087 -0.7056 L0.5929 -0.5371 L0.6293 -0.4939 L0.6626 -0.4482 L0.8538 -0.5206 L0.9247 -0.3807 L0.7533 -0.2693 L0.7704 -0.2155 L0.7837 -0.1605 L0.9880 -0.1543 L1.0000 0.0022 L0.7990 0.0394Z" transform="translate(628 808) rotate(-12) scale(168 126)" fill="url(#g5)"/><g transform="translate(628 808) rotate(-12) scale(168 126)"><circle cx="0.000" cy="0.000" r="0.420" fill="url(#g5h)"/><ellipse cx="0.092" cy="0.129" rx="0.353" ry="0.328" fill="#fdfdfd"/><circle cx="0.623" cy="0.340" r="0.125" fill="url(#g5h)"/><ellipse cx="0.651" cy="0.379" rx="0.105" ry="0.098" fill="#fdfdfd"/><circle cx="0.200" cy="0.681" r="0.125" fill="url(#g5h)"/><ellipse cx="0.227" cy="0.720" rx="0.105" ry="0.098" fill="#fdfdfd"/><circle cx="-0.340" cy="0.623" r="0.125" fill="url(#g5h)"/><ellipse cx="-0.313" cy="0.662" rx="0.105" ry="0.098" fill="#fdfdfd"/><circle cx="-0.681" cy="0.200" r="0.125" fill="url(#g5h)"/><ellipse cx="-0.654" cy="0.238" rx="0.105" ry="0.098" fill="#fdfdfd"/><circle cx="-0.623" cy="-0.340" r="0.125" fill="url(#g5h)"/><ellipse cx="-0.596" cy="-0.302" rx="0.105" ry="0.098" fill="#fdfdfd"/><circle cx="-0.200" cy="-0.681" r="0.125" fill="url(#g5h)"/><ellipse cx="-0.172" cy="-0.643" rx="0.105" ry="0.098" fill="#fdfdfd"/><circle cx="0.340" cy="-0.623" r="0.125" fill="url(#g5h)"/><ellipse cx="0.368" cy="-0.585" rx="0.105" ry="0.098" fill="#fdfdfd"/><circle cx="0.681" cy="-0.200" r="0.125" fill="url(#g5h)"/><ellipse cx="0.709" cy="-0.161" rx="0.105" ry="0.098" fill="#fdfdfd"/></g></svg>
<span class="t " style="left:529px;top:471.32px;font-size:28.5px;line-height:34px;color:#0c0c0c;font-weight:700;font-style:italic;letter-spacing:0.377px;">ЭФФЕКТИВНЫЕ ПРИЁМЫ РАЗВИТИЯ</span>
<span class="t " style="left:389.7px;top:505.62px;font-size:28.5px;line-height:34px;color:#0c0c0c;font-weight:700;font-style:italic;letter-spacing:0.300px;">ТЕХНОЛОГИЧЕСКОГО МЫШЛЕНИЯ НА УРОКАХ ФИЗИКИ</span>
<span class="t " style="left:797.6px;top:617.61px;font-size:14.5px;line-height:18px;color:#1c1c1c;font-family:'Liberation Serif',serif;letter-spacing:-0.023px;">Васильев Алексей Алексеевич</span>
<span class="t " style="left:797.6px;top:638.61px;font-size:14.5px;line-height:18px;color:#1c1c1c;font-family:'Liberation Serif',serif;letter-spacing:0.065px;">зам. директора по УВР, учитель физики, МБ НОУ «Лицей № 111»,</span>
<span class="t " style="left:797.6px;top:655.71px;font-size:14.5px;line-height:18px;color:#1c1c1c;font-family:'Liberation Serif',serif;letter-spacing:0.033px;">педагог дополнительного образования МБУ ДО «Центр</span>
<span class="t " style="left:797.6px;top:672.81px;font-size:14.5px;line-height:18px;color:#1c1c1c;font-family:'Liberation Serif',serif;letter-spacing:-0.058px;">«Меридиан»</span>
<span class="t " style="left:797.6px;top:713.71px;font-size:14.5px;line-height:18px;color:#1c1c1c;font-family:'Liberation Serif',serif;letter-spacing:0.036px;">Митрофанова Екатерина Геннадьевна</span>
<span class="t " style="left:797.6px;top:733.61px;font-size:14.5px;line-height:18px;color:#1c1c1c;font-family:'Liberation Serif',serif;letter-spacing:0.032px;">учитель физики, МБОУ «СОШ №94»</span>
<span class="t " style="left:797.6px;top:774.51px;font-size:14.5px;line-height:18px;color:#1c1c1c;font-family:'Liberation Serif',serif;letter-spacing:0.021px;">Васильева Ольга Валерьевна, учитель информатики и математики</span>
<span class="t " style="left:797.6px;top:791.71px;font-size:14.5px;line-height:18px;color:#1c1c1c;font-family:'Liberation Serif',serif;letter-spacing:0.108px;">МБ НОУ «Лицей №111»</span>
<div class="b" style="left:1336px;top:399.3px;width:5.4px;height:36px;background:#c9c9c9;border-radius:2.7px;"></div>
<span class="t " style="left:306.3px;top:907.22px;font-size:11.5px;line-height:14px;color:#ababab;letter-spacing:-0.028px;">Заметки к слайду</span>
<svg width="1918" height="1079" viewBox="0 0 1918 1079" style="left:0;top:0" fill="none"><path d="M1336 389.800l2.500-3 2.500 3z" fill="#666"/><path d="M1336 864l2.500 3 2.500-3z" fill="#666"/><path d="M1336.300 877.500l2.200-2.600 2.200 2.600zM1336.300 879l2.200 2.600 2.200-2.600z" fill="#666"/><path d="M1336.300 888l2.200 2.600 2.200-2.600zM1336.300 891l2.200 2.600 2.200-2.600z" fill="#666"/><path d="M1365.7 401h10" stroke="#999" stroke-width="1"/><rect x="1364.7" y="423.500" width="8.500" height="8.500" rx="1" stroke="#666" stroke-width="1.200"/><rect x="1368.2" y="427.500" width="8.500" height="6.500" rx="1" stroke="#666" stroke-width="1.200" fill="#f0f0f0"/><path d="M1370.7 457.300l2 4.300 4.700 0.600-3.500 3.200 0.900 4.700-4.100-2.300-4.100 2.300 0.900-4.700-3.500-3.200 4.700-0.600z" stroke="#666" stroke-width="1.200" stroke-linejoin="round"/><path d="M1364.2 494.500h13M1364.2 501h13" stroke="#666" stroke-width="1.100"/><circle cx="1368.2" cy="494.500" r="2" fill="#f0f0f0" stroke="#666" stroke-width="1.100"/><circle cx="1373.7" cy="501" r="2" fill="#f0f0f0" stroke="#666" stroke-width="1.100"/><circle cx="1370.7" cy="532" r="6.300" stroke="#666" stroke-width="1.200"/><path d="M1370.7 528v4.300l2.800 1.600" stroke="#666" stroke-width="1.100"/><path d="M1362.7 529.500l1.700 2.500 2.300-2" stroke="#666" stroke-width="1"/><circle cx="1370.7" cy="566.800" r="6.500" stroke="#666" stroke-width="1.200"/><path d="M1368.5 564.800a2.200 2.200 0 1 1 3.300 1.900c-0.800 0.500-1.100 0.900-1.100 1.800" stroke="#666" stroke-width="1.100"/><circle cx="1370.7" cy="570.700" r="0.700" fill="#666"/><rect x="1365.2" y="595.5" width="4.500" height="4.500" rx="1" stroke="#c4c4c4" stroke-width="1"/><rect x="1371.7" y="595.5" width="4.500" height="4.500" rx="1" stroke="#c4c4c4" stroke-width="1"/><rect x="1365.2" y="602" width="4.500" height="4.500" rx="1" stroke="#c4c4c4" stroke-width="1"/><rect x="1371.7" y="602" width="4.500" height="4.500" rx="1" stroke="#c4c4c4" stroke-width="1"/></svg>
<span class="t " style="left:135.4px;top:395.09px;font-size:11px;line-height:14px;color:#444;letter-spacing:-0.654px;">Структура</span>
<span class="t " style="left:192.1px;top:395.09px;font-size:11px;line-height:14px;color:#d2733a;letter-spacing:-0.842px;">Слайды</span>
<div class="b" style="left:199.5px;top:411.2px;width:21px;height:1.6px;background:#d2733a;"></div>
<div class="b" style="left:287.6px;top:429.8px;width:4.2px;height:110px;background:#d2d2d2;border-radius:2px;"></div>
<span class="t " style="left:96.6px;top:434.26px;font-size:10.5px;line-height:13px;color:#e07a3c;">1</span>
<span class="t " style="left:96.6px;top:536.16px;font-size:10.5px;line-height:13px;color:#444;">2</span>
<span class="t " style="left:96.6px;top:638.16px;font-size:10.5px;line-height:13px;color:#444;">3</span>
<span class="t " style="left:96.6px;top:740.36px;font-size:10.5px;line-height:13px;color:#444;">4</span>
<span class="t " style="left:96.6px;top:842.56px;font-size:10.5px;line-height:13px;color:#444;">5</span>
<div class="b" style="left:112.2px;top:428.2px;width:159.2px;height:90.80000000000001px;background:radial-gradient(ellipse 62% 66% at 52% 48%,#ffffff 0%,#ffffff 52%,#ededed 78%,#d6d6d6 100%);border-radius:3px;border:1.6px solid #f0874a;"></div>
<svg width="156.2" height="87.80000000000001" viewBox="355.5 396.6 871.5 490.7" preserveAspectRatio="none" style="left:113.7px;top:429.7px;overflow:hidden"><defs><linearGradient id="g6" x1="0" y1="0" x2="1" y2="1"><stop offset="0" stop-color="#fbfbfc"/><stop offset="0.55" stop-color="#d0d0d5"/><stop offset="1" stop-color="#a4a4ac"/></linearGradient><linearGradient id="g6h" x1="0" y1="0" x2="1" y2="1"><stop offset="0" stop-color="#5e5e68"/><stop offset="0.5" stop-color="#a6a6ae"/><stop offset="1" stop-color="#f2f2f4"/></linearGradient></defs><path d="M0.7910 0.1196 L0.7746 0.2001 L0.9488 0.3159 L0.8526 0.5226 L0.6519 0.4638 L0.6008 0.5282 L0.5434 0.5871 L0.6274 0.7787 L0.4347 0.9006 L0.2976 0.7426 L0.2199 0.7692 L0.1397 0.7877 L0.1068 0.9943 L-0.1211 0.9926 L-0.1511 0.7856 L-0.2309 0.7660 L-0.3083 0.7382 L-0.4477 0.8942 L-0.6386 0.7696 L-0.5518 0.5792 L-0.6084 0.5195 L-0.6585 0.4543 L-0.8600 0.5102 L-0.9533 0.3022 L-0.7774 0.1889 L-0.7927 0.1081 L-0.7996 0.0262 L-0.9994 -0.0358 L-0.9653 -0.2612 L-0.7561 -0.2613 L-0.7253 -0.3376 L-0.6868 -0.4102 L-0.8214 -0.5704 L-0.6709 -0.7416 L-0.4948 -0.6286 L-0.4277 -0.6761 L-0.3560 -0.7164 L-0.3826 -0.9239 L-0.1634 -0.9866 L-0.0764 -0.7963 L0.0058 -0.8000 L0.0878 -0.7952 L0.1776 -0.9841 L0.3959 -0.9183 L0.3663 -0.7112 L0.4373 -0.6699 L0.5038 -0.6214 L0.6815 -0.7319 L0.8295 -0.5585 L0.6927 -0.4003 L0.7301 -0.3271 L0.7598 -0.2504 L0.9690 -0.2472 L0.9998 -0.0214 L0.7991 0.0377Z" transform="translate(392.5 686) rotate(-6) scale(86 66)" fill="#7c7c86"/><path d="M0.7910 0.1196 L0.7746 0.2001 L0.9488 0.3159 L0.8526 0.5226 L0.6519 0.4638 L0.6008 0.5282 L0.5434 0.5871 L0.6274 0.7787 L0.4347 0.9006 L0.2976 0.7426 L0.2199 0.7692 L0.1397 0.7877 L0.1068 0.9943 L-0.1211 0.9926 L-0.1511 0.7856 L-0.2309 0.7660 L-0.3083 0.7382 L-0.4477 0.8942 L-0.6386 0.7696 L-0.5518 0.5792 L-0.6084 0.5195 L-0.6585 0.4543 L-0.8600 0.5102 L-0.9533 0.3022 L-0.7774 0.1889 L-0.7927 0.1081 L-0.7996 0.0262 L-0.9994 -0.0358 L-0.9653 -0.2612 L-0.7561 -0.2613 L-0.7253 -0.3376 L-0.6868 -0.4102 L-0.8214 -0.5704 L-0.6709 -0.7416 L-0.4948 -0.6286 L-0.4277 -0.6761 L-0.3560 -0.7164 L-0.3826 -0.9239 L-0.1634 -0.9866 L-0.0764 -0.7963 L0.0058 -0.8000 L0.0878 -0.7952 L0.1776 -0.9841 L0.3959 -0.9183 L0.3663 -0.7112 L0.4373 -0.6699 L0.5038 -0.6214 L0.6815 -0.7319 L0.8295 -0.5585 L0.6927 -0.4003 L0.7301 -0.3271 L0.7598 -0.2504 L0.9690 -0.2472 L0.9998 -0.0214 L0.7991 0.0377Z" transform="translate(391.65 682.6) rotate(-6) scale(86 66)" fill="#94949c"/><path d="M0.7910 0.1196 L0.7746 0.2001 L0.9488 0.3159 L0.8526 0.5226 L0.6519 0.4638 L0.6008 0.5282 L0.5434 0.5871 L0.6274 0.7787 L0.4347 0.9006 L0.2976 0.7426 L0.2199 0.7692 L0.1397 0.7877 L0.1068 0.9943 L-0.1211 0.9926 L-0.1511 0.7856 L-0.2309 0.7660 L-0.3083 0.7382 L-0.4477 0.8942 L-0.6386 0.7696 L-0.5518 0.5792 L-0.6084 0.5195 L-0.6585 0.4543 L-0.8600 0.5102 L-0.9533 0.3022 L-0.7774 0.1889 L-0.7927 0.1081 L-0.7996 0.0262 L-0.9994 -0.0358 L-0.9653 -0.2612 L-0.7561 -0.2613 L-0.7253 -0.3376 L-0.6868 -0.4102 L-0.8214 -0.5704 L-0.6709 -0.7416 L-0.4948 -0.6286 L-0.4277 -0.6761 L-0.3560 -0.7164 L-0.3826 -0.9239 L-0.1634 -0.9866 L-0.0764 -0.7963 L0.0058 -0.8000 L0.0878 -0.7952 L0.1776 -0.9841 L0.3959 -0.9183 L0.3663 -0.7112 L0.4373 -0.6699 L0.5038 -0.6214 L0.6815 -0.7319 L0.8295 -0.5585 L0.6927 -0.4003 L0.7301 -0.3271 L0.7598 -0.2504 L0.9690 -0.2472 L0.9998 -0.0214 L0.7991 0.0377Z" transform="translate(390.825 679.3) rotate(-6) scale(86 66)" fill="#94949c"/><path d="M0.7910 0.1196 L0.7746 0.2001 L0.9488 0.3159 L0.8526 0.5226 L0.6519 0.4638 L0.6008 0.5282 L0.5434 0.5871 L0.6274 0.7787 L0.4347 0.9006 L0.2976 0.7426 L0.2199 0.7692 L0.1397 0.7877 L0.1068 0.9943 L-0.1211 0.9926 L-0.1511 0.7856 L-0.2309 0.7660 L-0.3083 0.7382 L-0.4477 0.8942 L-0.6386 0.7696 L-0.5518 0.5792 L-0.6084 0.5195 L-0.6585 0.4543 L-0.8600 0.5102 L-0.9533 0.3022 L-0.7774 0.1889 L-0.7927 0.1081 L-0.7996 0.0262 L-0.9994 -0.0358 L-0.9653 -0.2612 L-0.7561 -0.2613 L-0.7253 -0.3376 L-0.6868 -0.4102 L-0.8214 -0.5704 L-0.6709 -0.7416 L-0.4948 -0.6286 L-0.4277 -0.6761 L-0.3560 -0.7164 L-0.3826 -0.9239 L-0.1634 -0.9866 L-0.0764 -0.7963 L0.0058 -0.8000 L0.0878 -0.7952 L0.1776 -0.9841 L0.3959 -0.9183 L0.3663 -0.7112 L0.4373 -0.6699 L0.5038 -0.6214 L0.6815 -0.7319 L0.8295 -0.5585 L0.6927 -0.4003 L0.7301 -0.3271 L0.7598 -0.2504 L0.9690 -0.2472 L0.9998 -0.0214 L0.7991 0.0377Z" transform="translate(390 676) rotate(-6) scale(86 66)" fill="url(#g6)"/><g transform="translate(390 676) rotate(-6) scale(86 66)"><circle cx="0.000" cy="0.000" r="0.400" fill="url(#g6h)"/><ellipse cx="0.088" cy="0.123" rx="0.336" ry="0.312" fill="#fdfdfd"/><circle cx="0.666" cy="0.135" r="0.120" fill="url(#g6h)"/><ellipse cx="0.693" cy="0.172" rx="0.101" ry="0.094" fill="#fdfdfd"/><circle cx="0.310" cy="0.605" r="0.120" fill="url(#g6h)"/><ellipse cx="0.336" cy="0.642" rx="0.101" ry="0.094" fill="#fdfdfd"/><circle cx="-0.280" cy="0.620" r="0.120" fill="url(#g6h)"/><ellipse cx="-0.254" cy="0.657" rx="0.101" ry="0.094" fill="#fdfdfd"/><circle cx="-0.659" cy="0.167" r="0.120" fill="url(#g6h)"/><ellipse cx="-0.633" cy="0.204" rx="0.101" ry="0.094" fill="#fdfdfd"/><circle cx="-0.542" cy="-0.411" r="0.120" fill="url(#g6h)"/><ellipse cx="-0.515" cy="-0.374" rx="0.101" ry="0.094" fill="#fdfdfd"/><circle cx="-0.017" cy="-0.680" r="0.120" fill="url(#g6h)"/><ellipse cx="0.010" cy="-0.643" rx="0.101" ry="0.094" fill="#fdfdfd"/><circle cx="0.521" cy="-0.437" r="0.120" fill="url(#g6h)"/><ellipse cx="0.548" cy="-0.400" rx="0.101" ry="0.094" fill="#fdfdfd"/></g><defs><linearGradient id="g7" x1="0" y1="0" x2="1" y2="1"><stop offset="0" stop-color="#fbfbfc"/><stop offset="0.55" stop-color="#d0d0d5"/><stop offset="1" stop-color="#a4a4ac"/></linearGradient><linearGradient id="g7h" x1="0" y1="0" x2="1" y2="1"><stop offset="0" stop-color="#5e5e68"/><stop offset="0.5" stop-color="#a6a6ae"/><stop offset="1" stop-color="#f2f2f4"/></linearGradient></defs><path d="M0.7990 0.0400 L0.7917 0.1150 L0.9786 0.2056 L0.9145 0.4046 L0.7098 0.3690 L0.6720 0.4341 L0.6281 0.4954 L0.7447 0.6674 L0.5897 0.8076 L0.4303 0.6744 L0.3649 0.7119 L0.2963 0.7431 L0.3113 0.9503 L0.1069 0.9943 L0.0354 0.7992 L-0.0400 0.7990 L-0.1150 0.7917 L-0.2056 0.9786 L-0.4046 0.9145 L-0.3690 0.7098 L-0.4341 0.6720 L-0.4954 0.6281 L-0.6674 0.7447 L-0.8076 0.5897 L-0.6744 0.4303 L-0.7119 0.3649 L-0.7431 0.2963 L-0.9503 0.3113 L-0.9943 0.1069 L-0.7992 0.0354 L-0.7990 -0.0400 L-0.7917 -0.1150 L-0.9786 -0.2056 L-0.9145 -0.4046 L-0.7098 -0.3690 L-0.6720 -0.4341 L-0.6281 -0.4954 L-0.7447 -0.6674 L-0.5897 -0.8076 L-0.4303 -0.6744 L-0.3649 -0.7119 L-0.2963 -0.7431 L-0.3113 -0.9503 L-0.1069 -0.9943 L-0.0354 -0.7992 L0.0400 -0.7990 L0.1150 -0.7917 L0.2056 -0.9786 L0.4046 -0.9145 L0.3690 -0.7098 L0.4341 -0.6720 L0.4954 -0.6281 L0.6674 -0.7447 L0.8076 -0.5897 L0.6744 -0.4303 L0.7119 -0.3649 L0.7431 -0.2963 L0.9503 -0.3113 L0.9943 -0.1069 L0.7992 -0.0354Z" transform="translate(522.5 678) rotate(-8) scale(94 66)" fill="#7c7c86"/><path d="M0.7990 0.0400 L0.7917 0.1150 L0.9786 0.2056 L0.9145 0.4046 L0.7098 0.3690 L0.6720 0.4341 L0.6281 0.4954 L0.7447 0.6674 L0.5897 0.8076 L0.4303 0.6744 L0.3649 0.7119 L0.2963 0.7431 L0.3113 0.9503 L0.1069 0.9943 L0.0354 0.7992 L-0.0400 0.7990 L-0.1150 0.7917 L-0.2056 0.9786 L-0.4046 0.9145 L-0.3690 0.7098 L-0.4341 0.6720 L-0.4954 0.6281 L-0.6674 0.7447 L-0.8076 0.5897 L-0.6744 0.4303 L-0.7119 0.3649 L-0.7431 0.2963 L-0.9503 0.3113 L-0.9943 0.1069 L-0.7992 0.0354 L-0.7990 -0.0400 L-0.7917 -0.1150 L-0.9786 -0.2056 L-0.9145 -0.4046 L-0.7098 -0.3690 L-0.6720 -0.4341 L-0.6281 -0.4954 L-0.7447 -0.6674 L-0.5897 -0.8076 L-0.4303 -0.6744 L-0.3649 -0.7119 L-0.2963 -0.7431 L-0.3113 -0.9503 L-0.1069 -0.9943 L-0.0354 -0.7992 L0.0400 -0.7990 L0.1150 -0.7917 L0.2056 -0.9786 L0.4046 -0.9145 L0.3690 -0.7098 L0.4341 -0.6720 L0.4954 -0.6281 L0.6674 -0.7447 L0.8076 -0.5897 L0.6744 -0.4303 L0.7119 -0.3649 L0.7431 -0.2963 L0.9503 -0.3113 L0.9943 -0.1069 L0.7992 -0.0354Z" transform="translate(521.65 674.6) rotate(-8) scale(94 66)" fill="#94949c"/><path d="M0.7990 0.0400 L0.7917 0.1150 L0.9786 0.2056 L0.9145 0.4046 L0.7098 0.3690 L0.6720 0.4341 L0.6281 0.4954 L0.7447 0.6674 L0.5897 0.8076 L0.4303 0.6744 L0.3649 0.7119 L0.2963 0.7431 L0.3113 0.9503 L0.1069 0.9943 L0.0354 0.7992 L-0.0400 0.7990 L-0.1150 0.7917 L-0.2056 0.9786 L-0.4046 0.9145 L-0.3690 0.7098 L-0.4341 0.6720 L-0.4954 0.6281 L-0.6674 0.7447 L-0.8076 0.5897 L-0.6744 0.4303 L-0.7119 0.3649 L-0.7431 0.2963 L-0.9503 0.3113 L-0.9943 0.1069 L-0.7992 0.0354 L-0.7990 -0.0400 L-0.7917 -0.1150 L-0.9786 -0.2056 L-0.9145 -0.4046 L-0.7098 -0.3690 L-0.6720 -0.4341 L-0.6281 -0.4954 L-0.7447 -0.6674 L-0.5897 -0.8076 L-0.4303 -0.6744 L-0.3649 -0.7119 L-0.2963 -0.7431 L-0.3113 -0.9503 L-0.1069 -0.9943 L-0.0354 -0.7992 L0.0400 -0.7990 L0.1150 -0.7917 L0.2056 -0.9786 L0.4046 -0.9145 L0.3690 -0.7098 L0.4341 -0.6720 L0.4954 -0.6281 L0.6674 -0.7447 L0.8076 -0.5897 L0.6744 -0.4303 L0.7119 -0.3649 L0.7431 -0.2963 L0.9503 -0.3113 L0.9943 -0.1069 L0.7992 -0.0354Z" transform="translate(520.825 671.3) rotate(-8) scale(94 66)" fill="#94949c"/><path d="M0.7990 0.0400 L0.7917 0.1150 L0.9786 0.2056 L0.9145 0.4046 L0.7098 0.3690 L0.6720 0.4341 L0.6281 0.4954 L0.7447 0.6674 L0.5897 0.8076 L0.4303 0.6744 L0.3649 0.7119 L0.2963 0.7431 L0.3113 0.9503 L0.1069 0.9943 L0.0354 0.7992 L-0.0400 0.7990 L-0.1150 0.7917 L-0.2056 0.9786 L-0.4046 0.9145 L-0.3690 0.7098 L-0.4341 0.6720 L-0.4954 0.6281 L-0.6674 0.7447 L-0.8076 0.5897 L-0.6744 0.4303 L-0.7119 0.3649 L-0.7431 0.2963 L-0.9503 0.3113 L-0.9943 0.1069 L-0.7992 0.0354 L-0.7990 -0.0400 L-0.7917 -0.1150 L-0.9786 -0.2056 L-0.9145 -0.4046 L-0.7098 -0.3690 L-0.6720 -0.4341 L-0.6281 -0.4954 L-0.7447 -0.6674 L-0.5897 -0.8076 L-0.4303 -0.6744 L-0.3649 -0.7119 L-0.2963 -0.7431 L-0.3113 -0.9503 L-0.1069 -0.9943 L-0.0354 -0.7992 L0.0400 -0.7990 L0.1150 -0.7917 L0.2056 -0.9786 L0.4046 -0.9145 L0.3690 -0.7098 L0.4341 -0.6720 L0.4954 -0.6281 L0.6674 -0.7447 L0.8076 -0.5897 L0.6744 -0.4303 L0.7119 -0.3649 L0.7431 -0.2963 L0.9503 -0.3113 L0.9943 -0.1069 L0.7992 -0.0354Z" transform="translate(520 668) rotate(-8) scale(94 66)" fill="url(#g7)"/><g transform="translate(520 668) rotate(-8) scale(94 66)"><circle cx="0.000" cy="0.000" r="0.370" fill="url(#g7h)"/><ellipse cx="0.081" cy="0.114" rx="0.311" ry="0.289" fill="#fdfdfd"/><circle cx="0.647" cy="0.131" r="0.115" fill="url(#g7h)"/><ellipse cx="0.672" cy="0.167" rx="0.097" ry="0.090" fill="#fdfdfd"/><circle cx="0.365" cy="0.550" r="0.115" fill="url(#g7h)"/><ellipse cx="0.390" cy="0.586" rx="0.097" ry="0.090" fill="#fdfdfd"/><circle cx="-0.131" cy="0.647" r="0.115" fill="url(#g7h)"/><ellipse cx="-0.106" cy="0.682" rx="0.097" ry="0.090" fill="#fdfdfd"/><circle cx="-0.550" cy="0.365" r="0.115" fill="url(#g7h)"/><ellipse cx="-0.525" cy="0.400" rx="0.097" ry="0.090" fill="#fdfdfd"/><circle cx="-0.647" cy="-0.131" r="0.115" fill="url(#g7h)"/><ellipse cx="-0.622" cy="-0.096" rx="0.097" ry="0.090" fill="#fdfdfd"/><circle cx="-0.365" cy="-0.550" r="0.115" fill="url(#g7h)"/><ellipse cx="-0.339" cy="-0.515" rx="0.097" ry="0.090" fill="#fdfdfd"/><circle cx="0.131" cy="-0.647" r="0.115" fill="url(#g7h)"/><ellipse cx="0.156" cy="-0.611" rx="0.097" ry="0.090" fill="#fdfdfd"/><circle cx="0.550" cy="-0.365" r="0.115" fill="url(#g7h)"/><ellipse cx="0.575" cy="-0.329" rx="0.097" ry="0.090" fill="#fdfdfd"/></g><defs><linearGradient id="g8" x1="0" y1="0" x2="1" y2="1"><stop offset="0" stop-color="#fbfbfc"/><stop offset="0.55" stop-color="#d0d0d5"/><stop offset="1" stop-color="#a4a4ac"/></linearGradient><linearGradient id="g8h" x1="0" y1="0" x2="1" y2="1"><stop offset="0" stop-color="#5e5e68"/><stop offset="0.5" stop-color="#a6a6ae"/><stop offset="1" stop-color="#f2f2f4"/></linearGradient></defs><path d="M0.7841 0.1589 L0.7656 0.2320 L0.9369 0.3495 L0.8438 0.5367 L0.6467 0.4709 L0.5995 0.5297 L0.5470 0.5837 L0.6366 0.7712 L0.4624 0.8867 L0.3246 0.7312 L0.2544 0.7585 L0.1819 0.7791 L0.1658 0.9862 L-0.0429 0.9991 L-0.0844 0.7955 L-0.1589 0.7841 L-0.2320 0.7656 L-0.3495 0.9369 L-0.5367 0.8438 L-0.4709 0.6467 L-0.5297 0.5995 L-0.5837 0.5470 L-0.7712 0.6366 L-0.8867 0.4624 L-0.7312 0.3246 L-0.7585 0.2544 L-0.7791 0.1819 L-0.9862 0.1658 L-0.9991 -0.0429 L-0.7955 -0.0844 L-0.7841 -0.1589 L-0.7656 -0.2320 L-0.9369 -0.3495 L-0.8438 -0.5367 L-0.6467 -0.4709 L-0.5995 -0.5297 L-0.5470 -0.5837 L-0.6366 -0.7712 L-0.4624 -0.8867 L-0.3246 -0.7312 L-0.2544 -0.7585 L-0.1819 -0.7791 L-0.1658 -0.9862 L0.0429 -0.9991 L0.0844 -0.7955 L0.1589 -0.7841 L0.2320 -0.7656 L0.3495 -0.9369 L0.5367 -0.8438 L0.4709 -0.6467 L0.5297 -0.5995 L0.5837 -0.5470 L0.7712 -0.6366 L0.8867 -0.4624 L0.7312 -0.3246 L0.7585 -0.2544 L0.7791 -0.1819 L0.9862 -0.1658 L0.9991 0.0429 L0.7955 0.0844Z" transform="translate(420.75 847) rotate(-6) scale(98 84)" fill="#7c7c86"/><path d="M0.7841 0.1589 L0.7656 0.2320 L0.9369 0.3495 L0.8438 0.5367 L0.6467 0.4709 L0.5995 0.5297 L0.5470 0.5837 L0.6366 0.7712 L0.4624 0.8867 L0.3246 0.7312 L0.2544 0.7585 L0.1819 0.7791 L0.1658 0.9862 L-0.0429 0.9991 L-0.0844 0.7955 L-0.1589 0.7841 L-0.2320 0.7656 L-0.3495 0.9369 L-0.5367 0.8438 L-0.4709 0.6467 L-0.5297 0.5995 L-0.5837 0.5470 L-0.7712 0.6366 L-0.8867 0.4624 L-0.7312 0.3246 L-0.7585 0.2544 L-0.7791 0.1819 L-0.9862 0.1658 L-0.9991 -0.0429 L-0.7955 -0.0844 L-0.7841 -0.1589 L-0.7656 -0.2320 L-0.9369 -0.3495 L-0.8438 -0.5367 L-0.6467 -0.4709 L-0.5995 -0.5297 L-0.5470 -0.5837 L-0.6366 -0.7712 L-0.4624 -0.8867 L-0.3246 -0.7312 L-0.2544 -0.7585 L-0.1819 -0.7791 L-0.1658 -0.9862 L0.0429 -0.9991 L0.0844 -0.7955 L0.1589 -0.7841 L0.2320 -0.7656 L0.3495 -0.9369 L0.5367 -0.8438 L0.4709 -0.6467 L0.5297 -0.5995 L0.5837 -0.5470 L0.7712 -0.6366 L0.8867 -0.4624 L0.7312 -0.3246 L0.7585 -0.2544 L0.7791 -0.1819 L0.9862 -0.1658 L0.9991 0.0429 L0.7955 0.0844Z" transform="translate(419.815 843.26) rotate(-6) scale(98 84)" fill="#94949c"/><path d="M0.7841 0.1589 L0.7656 0.2320 L0.9369 0.3495 L0.8438 0.5367 L0.6467 0.4709 L0.5995 0.5297 L0.5470 0.5837 L0.6366 0.7712 L0.4624 0.8867 L0.3246 0.7312 L0.2544 0.7585 L0.1819 0.7791 L0.1658 0.9862 L-0.0429 0.9991 L-0.0844 0.7955 L-0.1589 0.7841 L-0.2320 0.7656 L-0.3495 0.9369 L-0.5367 0.8438 L-0.4709 0.6467 L-0.5297 0.5995 L-0.5837 0.5470 L-0.7712 0.6366 L-0.8867 0.4624 L-0.7312 0.3246 L-0.7585 0.2544 L-0.7791 0.1819 L-0.9862 0.1658 L-0.9991 -0.0429 L-0.7955 -0.0844 L-0.7841 -0.1589 L-0.7656 -0.2320 L-0.9369 -0.3495 L-0.8438 -0.5367 L-0.6467 -0.4709 L-0.5995 -0.5297 L-0.5470 -0.5837 L-0.6366 -0.7712 L-0.4624 -0.8867 L-0.3246 -0.7312 L-0.2544 -0.7585 L-0.1819 -0.7791 L-0.1658 -0.9862 L0.0429 -0.9991 L0.0844 -0.7955 L0.1589 -0.7841 L0.2320 -0.7656 L0.3495 -0.9369 L0.5367 -0.8438 L0.4709 -0.6467 L0.5297 -0.5995 L0.5837 -0.5470 L0.7712 -0.6366 L0.8867 -0.4624 L0.7312 -0.3246 L0.7585 -0.2544 L0.7791 -0.1819 L0.9862 -0.1658 L0.9991 0.0429 L0.7955 0.0844Z" transform="translate(418.9075 839.63) rotate(-6) scale(98 84)" fill="#94949c"/><path d="M0.7841 0.1589 L0.7656 0.2320 L0.9369 0.3495 L0.8438 0.5367 L0.6467 0.4709 L0.5995 0.5297 L0.5470 0.5837 L0.6366 0.7712 L0.4624 0.8867 L0.3246 0.7312 L0.2544 0.7585 L0.1819 0.7791 L0.1658 0.9862 L-0.0429 0.9991 L-0.0844 0.7955 L-0.1589 0.7841 L-0.2320 0.7656 L-0.3495 0.9369 L-0.5367 0.8438 L-0.4709 0.6467 L-0.5297 0.5995 L-0.5837 0.5470 L-0.7712 0.6366 L-0.8867 0.4624 L-0.7312 0.3246 L-0.7585 0.2544 L-0.7791 0.1819 L-0.9862 0.1658 L-0.9991 -0.0429 L-0.7955 -0.0844 L-0.7841 -0.1589 L-0.7656 -0.2320 L-0.9369 -0.3495 L-0.8438 -0.5367 L-0.6467 -0.4709 L-0.5995 -0.5297 L-0.5470 -0.5837 L-0.6366 -0.7712 L-0.4624 -0.8867 L-0.3246 -0.7312 L-0.2544 -0.7585 L-0.1819 -0.7791 L-0.1658 -0.9862 L0.0429 -0.9991 L0.0844 -0.7955 L0.1589 -0.7841 L0.2320 -0.7656 L0.3495 -0.9369 L0.5367 -0.8438 L0.4709 -0.6467 L0.5297 -0.5995 L0.5837 -0.5470 L0.7712 -0.6366 L0.8867 -0.4624 L0.7312 -0.3246 L0.7585 -0.2544 L0.7791 -0.1819 L0.9862 -0.1658 L0.9991 0.0429 L0.7955 0.0844Z" transform="translate(418 836) rotate(-6) scale(98 84)" fill="url(#g8)"/><g transform="translate(418 836) rotate(-6) scale(98 84)"><circle cx="0.000" cy="0.000" r="0.360" fill="url(#g8h)"/><ellipse cx="0.079" cy="0.111" rx="0.302" ry="0.281" fill="#fdfdfd"/><circle cx="0.666" cy="0.135" r="0.115" fill="url(#g8h)"/><ellipse cx="0.692" cy="0.171" rx="0.097" ry="0.090" fill="#fdfdfd"/><circle cx="0.376" cy="0.567" r="0.115" fill="url(#g8h)"/><ellipse cx="0.401" cy="0.602" rx="0.097" ry="0.090" fill="#fdfdfd"/><circle cx="-0.135" cy="0.666" r="0.115" fill="url(#g8h)"/><ellipse cx="-0.110" cy="0.702" rx="0.097" ry="0.090" fill="#fdfdfd"/><circle cx="-0.567" cy="0.376" r="0.115" fill="url(#g8h)"/><ellipse cx="-0.541" cy="0.411" rx="0.097" ry="0.090" fill="#fdfdfd"/><circle cx="-0.666" cy="-0.135" r="0.115" fill="url(#g8h)"/><ellipse cx="-0.641" cy="-0.100" rx="0.097" ry="0.090" fill="#fdfdfd"/><circle cx="-0.376" cy="-0.567" r="0.115" fill="url(#g8h)"/><ellipse cx="-0.350" cy="-0.531" rx="0.097" ry="0.090" fill="#fdfdfd"/><circle cx="0.135" cy="-0.666" r="0.115" fill="url(#g8h)"/><ellipse cx="0.160" cy="-0.631" rx="0.097" ry="0.090" fill="#fdfdfd"/><circle cx="0.567" cy="-0.376" r="0.115" fill="url(#g8h)"/><ellipse cx="0.592" cy="-0.340" rx="0.097" ry="0.090" fill="#fdfdfd"/></g><defs><linearGradient id="g9" x1="0" y1="0" x2="1" y2="1"><stop offset="0" stop-color="#fbfbfc"/><stop offset="0.55" stop-color="#d0d0d5"/><stop offset="1" stop-color="#a4a4ac"/></linearGradient><linearGradient id="g9h" x1="0" y1="0" x2="1" y2="1"><stop offset="0" stop-color="#5e5e68"/><stop offset="0.5" stop-color="#a6a6ae"/><stop offset="1" stop-color="#f2f2f4"/></linearGradient></defs><path d="M0.7960 0.0799 L0.7870 0.1438 L0.9726 0.2325 L0.9155 0.4024 L0.7140 0.3609 L0.6825 0.4173 L0.6466 0.4710 L0.7754 0.6315 L0.6502 0.7598 L0.4867 0.6349 L0.4339 0.6721 L0.3782 0.7050 L0.4246 0.9054 L0.2562 0.9666 L0.1630 0.7832 L0.0993 0.7938 L0.0349 0.7992 L-0.0102 0.9999 L-0.1886 0.9820 L-0.1930 0.7764 L-0.2550 0.7583 L-0.3153 0.7352 L-0.4431 0.8965 L-0.5960 0.8030 L-0.5107 0.6158 L-0.5587 0.5725 L-0.6031 0.5256 L-0.7882 0.6155 L-0.8854 0.4648 L-0.7273 0.3332 L-0.7518 0.2734 L-0.7714 0.2119 L-0.9772 0.2125 L-0.9994 0.0346 L-0.7999 -0.0154 L-0.7960 -0.0799 L-0.7870 -0.1438 L-0.9726 -0.2325 L-0.9155 -0.4024 L-0.7140 -0.3609 L-0.6825 -0.4173 L-0.6466 -0.4710 L-0.7754 -0.6315 L-0.6502 -0.7598 L-0.4867 -0.6349 L-0.4339 -0.6721 L-0.3782 -0.7050 L-0.4246 -0.9054 L-0.2562 -0.9666 L-0.1630 -0.7832 L-0.0993 -0.7938 L-0.0349 -0.7992 L0.0102 -0.9999 L0.1886 -0.9820 L0.1930 -0.7764 L0.2550 -0.7583 L0.3153 -0.7352 L0.4431 -0.8965 L0.5960 -0.8030 L0.5107 -0.6158 L0.5587 -0.5725 L0.6031 -0.5256 L0.7882 -0.6155 L0.8854 -0.4648 L0.7273 -0.3332 L0.7518 -0.2734 L0.7714 -0.2119 L0.9772 -0.2125 L0.9994 -0.0346 L0.7999 0.0154Z" transform="translate(874.75 900) rotate(-5) scale(72 57)" fill="#7c7c86"/><path d="M0.7960 0.0799 L0.7870 0.1438 L0.9726 0.2325 L0.9155 0.4024 L0.7140 0.3609 L0.6825 0.4173 L0.6466 0.4710 L0.7754 0.6315 L0.6502 0.7598 L0.4867 0.6349 L0.4339 0.6721 L0.3782 0.7050 L0.4246 0.9054 L0.2562 0.9666 L0.1630 0.7832 L0.0993 0.7938 L0.0349 0.7992 L-0.0102 0.9999 L-0.1886 0.9820 L-0.1930 0.7764 L-0.2550 0.7583 L-0.3153 0.7352 L-0.4431 0.8965 L-0.5960 0.8030 L-0.5107 0.6158 L-0.5587 0.5725 L-0.6031 0.5256 L-0.7882 0.6155 L-0.8854 0.4648 L-0.7273 0.3332 L-0.7518 0.2734 L-0.7714 0.2119 L-0.9772 0.2125 L-0.9994 0.0346 L-0.7999 -0.0154 L-0.7960 -0.0799 L-0.7870 -0.1438 L-0.9726 -0.2325 L-0.9155 -0.4024 L-0.7140 -0.3609 L-0.6825 -0.4173 L-0.6466 -0.4710 L-0.7754 -0.6315 L-0.6502 -0.7598 L-0.4867 -0.6349 L-0.4339 -0.6721 L-0.3782 -0.7050 L-0.4246 -0.9054 L-0.2562 -0.9666 L-0.1630 -0.7832 L-0.0993 -0.7938 L-0.0349 -0.7992 L0.0102 -0.9999 L0.1886 -0.9820 L0.1930 -0.7764 L0.2550 -0.7583 L0.3153 -0.7352 L0.4431 -0.8965 L0.5960 -0.8030 L0.5107 -0.6158 L0.5587 -0.5725 L0.6031 -0.5256 L0.7882 -0.6155 L0.8854 -0.4648 L0.7273 -0.3332 L0.7518 -0.2734 L0.7714 -0.2119 L0.9772 -0.2125 L0.9994 -0.0346 L0.7999 0.0154Z" transform="translate(874.155 897.62) rotate(-5) scale(72 57)" fill="#94949c"/><path d="M0.7960 0.0799 L0.7870 0.1438 L0.9726 0.2325 L0.9155 0.4024 L0.7140 0.3609 L0.6825 0.4173 L0.6466 0.4710 L0.7754 0.6315 L0.6502 0.7598 L0.4867 0.6349 L0.4339 0.6721 L0.3782 0.7050 L0.4246 0.9054 L0.2562 0.9666 L0.1630 0.7832 L0.0993 0.7938 L0.0349 0.7992 L-0.0102 0.9999 L-0.1886 0.9820 L-0.1930 0.7764 L-0.2550 0.7583 L-0.3153 0.7352 L-0.4431 0.8965 L-0.5960 0.8030 L-0.5107 0.6158 L-0.5587 0.5725 L-0.6031 0.5256 L-0.7882 0.6155 L-0.8854 0.4648 L-0.7273 0.3332 L-0.7518 0.2734 L-0.7714 0.2119 L-0.9772 0.2125 L-0.9994 0.0346 L-0.7999 -0.0154 L-0.7960 -0.0799 L-0.7870 -0.1438 L-0.9726 -0.2325 L-0.9155 -0.4024 L-0.7140 -0.3609 L-0.6825 -0.4173 L-0.6466 -0.4710 L-0.7754 -0.6315 L-0.6502 -0.7598 L-0.4867 -0.6349 L-0.4339 -0.6721 L-0.3782 -0.7050 L-0.4246 -0.9054 L-0.2562 -0.9666 L-0.1630 -0.7832 L-0.0993 -0.7938 L-0.0349 -0.7992 L0.0102 -0.9999 L0.1886 -0.9820 L0.1930 -0.7764 L0.2550 -0.7583 L0.3153 -0.7352 L0.4431 -0.8965 L0.5960 -0.8030 L0.5107 -0.6158 L0.5587 -0.5725 L0.6031 -0.5256 L0.7882 -0.6155 L0.8854 -0.4648 L0.7273 -0.3332 L0.7518 -0.2734 L0.7714 -0.2119 L0.9772 -0.2125 L0.9994 -0.0346 L0.7999 0.0154Z" transform="translate(873.5775 895.31) rotate(-5) scale(72 57)" fill="#94949c"/><path d="M0.7960 0.0799 L0.7870 0.1438 L0.9726 0.2325 L0.9155 0.4024 L0.7140 0.3609 L0.6825 0.4173 L0.6466 0.4710 L0.7754 0.6315 L0.6502 0.7598 L0.4867 0.6349 L0.4339 0.6721 L0.3782 0.7050 L0.4246 0.9054 L0.2562 0.9666 L0.1630 0.7832 L0.0993 0.7938 L0.0349 0.7992 L-0.0102 0.9999 L-0.1886 0.9820 L-0.1930 0.7764 L-0.2550 0.7583 L-0.3153 0.7352 L-0.4431 0.8965 L-0.5960 0.8030 L-0.5107 0.6158 L-0.5587 0.5725 L-0.6031 0.5256 L-0.7882 0.6155 L-0.8854 0.4648 L-0.7273 0.3332 L-0.7518 0.2734 L-0.7714 0.2119 L-0.9772 0.2125 L-0.9994 0.0346 L-0.7999 -0.0154 L-0.7960 -0.0799 L-0.7870 -0.1438 L-0.9726 -0.2325 L-0.9155 -0.4024 L-0.7140 -0.3609 L-0.6825 -0.4173 L-0.6466 -0.4710 L-0.7754 -0.6315 L-0.6502 -0.7598 L-0.4867 -0.6349 L-0.4339 -0.6721 L-0.3782 -0.7050 L-0.4246 -0.9054 L-0.2562 -0.9666 L-0.1630 -0.7832 L-0.0993 -0.7938 L-0.0349 -0.7992 L0.0102 -0.9999 L0.1886 -0.9820 L0.1930 -0.7764 L0.2550 -0.7583 L0.3153 -0.7352 L0.4431 -0.8965 L0.5960 -0.8030 L0.5107 -0.6158 L0.5587 -0.5725 L0.6031 -0.5256 L0.7882 -0.6155 L0.8854 -0.4648 L0.7273 -0.3332 L0.7518 -0.2734 L0.7714 -0.2119 L0.9772 -0.2125 L0.9994 -0.0346 L0.7999 0.0154Z" transform="translate(873 893) rotate(-5) scale(72 57)" fill="url(#g9)"/><g transform="translate(873 893) rotate(-5) scale(72 57)"><circle cx="0.000" cy="0.000" r="0.340" fill="url(#g9h)"/><ellipse cx="0.075" cy="0.105" rx="0.286" ry="0.265" fill="#fdfdfd"/><circle cx="0.647" cy="0.131" r="0.100" fill="url(#g9h)"/><ellipse cx="0.669" cy="0.162" rx="0.084" ry="0.078" fill="#fdfdfd"/><circle cx="0.365" cy="0.550" r="0.100" fill="url(#g9h)"/><ellipse cx="0.387" cy="0.581" rx="0.084" ry="0.078" fill="#fdfdfd"/><circle cx="-0.131" cy="0.647" r="0.100" fill="url(#g9h)"/><ellipse cx="-0.109" cy="0.678" rx="0.084" ry="0.078" fill="#fdfdfd"/><circle cx="-0.550" cy="0.365" r="0.100" fill="url(#g9h)"/><ellipse cx="-0.528" cy="0.395" rx="0.084" ry="0.078" fill="#fdfdfd"/><circle cx="-0.647" cy="-0.131" r="0.100" fill="url(#g9h)"/><ellipse cx="-0.625" cy="-0.100" rx="0.084" ry="0.078" fill="#fdfdfd"/><circle cx="-0.365" cy="-0.550" r="0.100" fill="url(#g9h)"/><ellipse cx="-0.343" cy="-0.519" rx="0.084" ry="0.078" fill="#fdfdfd"/><circle cx="0.131" cy="-0.647" r="0.100" fill="url(#g9h)"/><ellipse cx="0.153" cy="-0.616" rx="0.084" ry="0.078" fill="#fdfdfd"/><circle cx="0.550" cy="-0.365" r="0.100" fill="url(#g9h)"/><ellipse cx="0.572" cy="-0.334" rx="0.084" ry="0.078" fill="#fdfdfd"/></g><defs><linearGradient id="g10" x1="0" y1="0" x2="1" y2="1"><stop offset="0" stop-color="#fbfbfc"/><stop offset="0.55" stop-color="#d0d0d5"/><stop offset="1" stop-color="#a4a4ac"/></linearGradient><linearGradient id="g10h" x1="0" y1="0" x2="1" y2="1"><stop offset="0" stop-color="#5e5e68"/><stop offset="0.5" stop-color="#a6a6ae"/><stop offset="1" stop-color="#f2f2f4"/></linearGradient></defs><path d="M0.7942 0.0958 L0.7855 0.1516 L0.9719 0.2356 L0.9230 0.3847 L0.7231 0.3422 L0.6971 0.3924 L0.6677 0.4407 L0.8077 0.5896 L0.7056 0.7087 L0.5371 0.5929 L0.4939 0.6293 L0.4482 0.6626 L0.5206 0.8538 L0.3807 0.9247 L0.2693 0.7533 L0.2155 0.7704 L0.1605 0.7837 L0.1543 0.9880 L-0.0022 1.0000 L-0.0394 0.7990 L-0.0958 0.7942 L-0.1516 0.7855 L-0.2356 0.9719 L-0.3847 0.9230 L-0.3422 0.7231 L-0.3924 0.6971 L-0.4407 0.6677 L-0.5896 0.8077 L-0.7087 0.7056 L-0.5929 0.5371 L-0.6293 0.4939 L-0.6626 0.4482 L-0.8538 0.5206 L-0.9247 0.3807 L-0.7533 0.2693 L-0.7704 0.2155 L-0.7837 0.1605 L-0.9880 0.1543 L-1.0000 -0.0022 L-0.7990 -0.0394 L-0.7942 -0.0958 L-0.7855 -0.1516 L-0.9719 -0.2356 L-0.9230 -0.3847 L-0.7231 -0.3422 L-0.6971 -0.3924 L-0.6677 -0.4407 L-0.8077 -0.5896 L-0.7056 -0.7087 L-0.5371 -0.5929 L-0.4939 -0.6293 L-0.4482 -0.6626 L-0.5206 -0.8538 L-0.3807 -0.9247 L-0.2693 -0.7533 L-0.2155 -0.7704 L-0.1605 -0.7837 L-0.1543 -0.9880 L0.0022 -1.0000 L0.0394 -0.7990 L0.0958 -0.7942 L0.1516 -0.7855 L0.2356 -0.9719 L0.3847 -0.9230 L0.3422 -0.7231 L0.3924 -0.6971 L0.4407 -0.6677 L0.5896 -0.8077 L0.7087 -0.7056 L0.5929 -0.5371 L0.6293 -0.4939 L0.6626 -0.4482 L0.8538 -0.5206 L0.9247 -0.3807 L0.7533 -0.2693 L0.7704 -0.2155 L0.7837 -0.1605 L0.9880 -0.1543 L1.0000 0.0022 L0.7990 0.0394Z" transform="translate(631.75 823) rotate(-12) scale(168 126)" fill="#7c7c86"/><path d="M0.7942 0.0958 L0.7855 0.1516 L0.9719 0.2356 L0.9230 0.3847 L0.7231 0.3422 L0.6971 0.3924 L0.6677 0.4407 L0.8077 0.5896 L0.7056 0.7087 L0.5371 0.5929 L0.4939 0.6293 L0.4482 0.6626 L0.5206 0.8538 L0.3807 0.9247 L0.2693 0.7533 L0.2155 0.7704 L0.1605 0.7837 L0.1543 0.9880 L-0.0022 1.0000 L-0.0394 0.7990 L-0.0958 0.7942 L-0.1516 0.7855 L-0.2356 0.9719 L-0.3847 0.9230 L-0.3422 0.7231 L-0.3924 0.6971 L-0.4407 0.6677 L-0.5896 0.8077 L-0.7087 0.7056 L-0.5929 0.5371 L-0.6293 0.4939 L-0.6626 0.4482 L-0.8538 0.5206 L-0.9247 0.3807 L-0.7533 0.2693 L-0.7704 0.2155 L-0.7837 0.1605 L-0.9880 0.1543 L-1.0000 -0.0022 L-0.7990 -0.0394 L-0.7942 -0.0958 L-0.7855 -0.1516 L-0.9719 -0.2356 L-0.9230 -0.3847 L-0.7231 -0.3422 L-0.6971 -0.3924 L-0.6677 -0.4407 L-0.8077 -0.5896 L-0.7056 -0.7087 L-0.5371 -0.5929 L-0.4939 -0.6293 L-0.4482 -0.6626 L-0.5206 -0.8538 L-0.3807 -0.9247 L-0.2693 -0.7533 L-0.2155 -0.7704 L-0.1605 -0.7837 L-0.1543 -0.9880 L0.0022 -1.0000 L0.0394 -0.7990 L0.0958 -0.7942 L0.1516 -0.7855 L0.2356 -0.9719 L0.3847 -0.9230 L0.3422 -0.7231 L0.3924 -0.6971 L0.4407 -0.6677 L0.5896 -0.8077 L0.7087 -0.7056 L0.5929 -0.5371 L0.6293 -0.4939 L0.6626 -0.4482 L0.8538 -0.5206 L0.9247 -0.3807 L0.7533 -0.2693 L0.7704 -0.2155 L0.7837 -0.1605 L0.9880 -0.1543 L1.0000 0.0022 L0.7990 0.0394Z" transform="translate(630.475 817.9) rotate(-12) scale(168 126)" fill="#94949c"/><path d="M0.7942 0.0958 L0.7855 0.1516 L0.9719 0.2356 L0.9230 0.3847 L0.7231 0.3422 L0.6971 0.3924 L0.6677 0.4407 L0.8077 0.5896 L0.7056 0.7087 L0.5371 0.5929 L0.4939 0.6293 L0.4482 0.6626 L0.5206 0.8538 L0.3807 0.9247 L0.2693 0.7533 L0.2155 0.7704 L0.1605 0.7837 L0.1543 0.9880 L-0.0022 1.0000 L-0.0394 0.7990 L-0.0958 0.7942 L-0.1516 0.7855 L-0.2356 0.9719 L-0.3847 0.9230 L-0.3422 0.7231 L-0.3924 0.6971 L-0.4407 0.6677 L-0.5896 0.8077 L-0.7087 0.7056 L-0.5929 0.5371 L-0.6293 0.4939 L-0.6626 0.4482 L-0.8538 0.5206 L-0.9247 0.3807 L-0.7533 0.2693 L-0.7704 0.2155 L-0.7837 0.1605 L-0.9880 0.1543 L-1.0000 -0.0022 L-0.7990 -0.0394 L-0.7942 -0.0958 L-0.7855 -0.1516 L-0.9719 -0.2356 L-0.9230 -0.3847 L-0.7231 -0.3422 L-0.6971 -0.3924 L-0.6677 -0.4407 L-0.8077 -0.5896 L-0.7056 -0.7087 L-0.5371 -0.5929 L-0.4939 -0.6293 L-0.4482 -0.6626 L-0.5206 -0.8538 L-0.3807 -0.9247 L-0.2693 -0.7533 L-0.2155 -0.7704 L-0.1605 -0.7837 L-0.1543 -0.9880 L0.0022 -1.0000 L0.0394 -0.7990 L0.0958 -0.7942 L0.1516 -0.7855 L0.2356 -0.9719 L0.3847 -0.9230 L0.3422 -0.7231 L0.3924 -0.6971 L0.4407 -0.6677 L0.5896 -0.8077 L0.7087 -0.7056 L0.5929 -0.5371 L0.6293 -0.4939 L0.6626 -0.4482 L0.8538 -0.5206 L0.9247 -0.3807 L0.7533 -0.2693 L0.7704 -0.2155 L0.7837 -0.1605 L0.9880 -0.1543 L1.0000 0.0022 L0.7990 0.0394Z" transform="translate(629.2375 812.95) rotate(-12) scale(168 126)" fill="#94949c"/><path d="M0.7942 0.0958 L0.7855 0.1516 L0.9719 0.2356 L0.9230 0.3847 L0.7231 0.3422 L0.6971 0.3924 L0.6677 0.4407 L0.8077 0.5896 L0.7056 0.7087 L0.5371 0.5929 L0.4939 0.6293 L0.4482 0.6626 L0.5206 0.8538 L0.3807 0.9247 L0.2693 0.7533 L0.2155 0.7704 L0.1605 0.7837 L0.1543 0.9880 L-0.0022 1.0000 L-0.0394 0.7990 L-0.0958 0.7942 L-0.1516 0.7855 L-0.2356 0.9719 L-0.3847 0.9230 L-0.3422 0.7231 L-0.3924 0.6971 L-0.4407 0.6677 L-0.5896 0.8077 L-0.7087 0.7056 L-0.5929 0.5371 L-0.6293 0.4939 L-0.6626 0.4482 L-0.8538 0.5206 L-0.9247 0.3807 L-0.7533 0.2693 L-0.7704 0.2155 L-0.7837 0.1605 L-0.9880 0.1543 L-1.0000 -0.0022 L-0.7990 -0.0394 L-0.7942 -0.0958 L-0.7855 -0.1516 L-0.9719 -0.2356 L-0.9230 -0.3847 L-0.7231 -0.3422 L-0.6971 -0.3924 L-0.6677 -0.4407 L-0.8077 -0.5896 L-0.7056 -0.7087 L-0.5371 -0.5929 L-0.4939 -0.6293 L-0.4482 -0.6626 L-0.5206 -0.8538 L-0.3807 -0.9247 L-0.2693 -0.7533 L-0.2155 -0.7704 L-0.1605 -0.7837 L-0.1543 -0.9880 L0.0022 -1.0000 L0.0394 -0.7990 L0.0958 -0.7942 L0.1516 -0.7855 L0.2356 -0.9719 L0.3847 -0.9230 L0.3422 -0.7231 L0.3924 -0.6971 L0.4407 -0.6677 L0.5896 -0.8077 L0.7087 -0.7056 L0.5929 -0.5371 L0.6293 -0.4939 L0.6626 -0.4482 L0.8538 -0.5206 L0.9247 -0.3807 L0.7533 -0.2693 L0.7704 -0.2155 L0.7837 -0.1605 L0.9880 -0.1543 L1.0000 0.0022 L0.7990 0.0394Z" transform="translate(628 808) rotate(-12) scale(168 126)" fill="url(#g10)"/><g transform="translate(628 808) rotate(-12) scale(168 126)"><circle cx="0.000" cy="0.000" r="0.420" fill="url(#g10h)"/><ellipse cx="0.092" cy="0.129" rx="0.353" ry="0.328" fill="#fdfdfd"/><circle cx="0.623" cy="0.340" r="0.125" fill="url(#g10h)"/><ellipse cx="0.651" cy="0.379" rx="0.105" ry="0.098" fill="#fdfdfd"/><circle cx="0.200" cy="0.681" r="0.125" fill="url(#g10h)"/><ellipse cx="0.227" cy="0.720" rx="0.105" ry="0.098" fill="#fdfdfd"/><circle cx="-0.340" cy="0.623" r="0.125" fill="url(#g10h)"/><ellipse cx="-0.313" cy="0.662" rx="0.105" ry="0.098" fill="#fdfdfd"/><circle cx="-0.681" cy="0.200" r="0.125" fill="url(#g10h)"/><ellipse cx="-0.654" cy="0.238" rx="0.105" ry="0.098" fill="#fdfdfd"/><circle cx="-0.623" cy="-0.340" r="0.125" fill="url(#g10h)"/><ellipse cx="-0.596" cy="-0.302" rx="0.105" ry="0.098" fill="#fdfdfd"/><circle cx="-0.200" cy="-0.681" r="0.125" fill="url(#g10h)"/><ellipse cx="-0.172" cy="-0.643" rx="0.105" ry="0.098" fill="#fdfdfd"/><circle cx="0.340" cy="-0.623" r="0.125" fill="url(#g10h)"/><ellipse cx="0.368" cy="-0.585" rx="0.105" ry="0.098" fill="#fdfdfd"/><circle cx="0.681" cy="-0.200" r="0.125" fill="url(#g10h)"/><ellipse cx="0.709" cy="-0.161" rx="0.105" ry="0.098" fill="#fdfdfd"/></g></svg>
<span class="t " style="left:144.5px;top:441.97px;font-size:5px;line-height:7px;color:#2a2a2a;font-weight:700;font-style:italic;letter-spacing:0.165px;">ЭФФЕКТИВНЫЕ ПРИЁМЫ РАЗВИТИЯ</span>
<span class="t " style="left:119px;top:448.37px;font-size:5px;line-height:7px;color:#2a2a2a;font-weight:700;font-style:italic;letter-spacing:0.155px;">ТЕХНОЛОГИЧЕСКОГО МЫШЛЕНИЯ НА УРОКАХ ФИЗИКИ</span>
<span class="t " style="left:193px;top:468.69px;font-size:2.7px;line-height:4px;color:#777;font-family:'Liberation Serif',serif;letter-spacing:-0.041px;">Васильев Алексей Алексеевич</span>
<span class="t " style="left:193px;top:472.49px;font-size:2.7px;line-height:4px;color:#777;font-family:'Liberation Serif',serif;letter-spacing:-0.033px;">зам. директора по УВР, учитель физики, МБ НОУ «Лицей № 111»,</span>
<span class="t " style="left:193px;top:475.59px;font-size:2.7px;line-height:4px;color:#777;font-family:'Liberation Serif',serif;letter-spacing:-0.025px;">педагог дополнительного образования МБУ ДО «Центр</span>
<span class="t " style="left:193px;top:478.69px;font-size:2.7px;line-height:4px;color:#777;font-family:'Liberation Serif',serif;letter-spacing:-0.052px;">«Меридиан»</span>
<span class="t " style="left:193px;top:486.09px;font-size:2.7px;line-height:4px;color:#777;font-family:'Liberation Serif',serif;letter-spacing:-0.031px;">Митрофанова Екатерина Геннадьевна</span>
<span class="t " style="left:193px;top:489.79px;font-size:2.7px;line-height:4px;color:#777;font-family:'Liberation Serif',serif;letter-spacing:-0.035px;">учитель физики, МБОУ «СОШ №94»</span>
<span class="t " style="left:193px;top:497.19px;font-size:2.7px;line-height:4px;color:#777;font-family:'Liberation Serif',serif;letter-spacing:-0.036px;">Васильева Ольга Валерьевна, учитель информатики и математики</span>
<span class="t " style="left:193px;top:500.39px;font-size:2.7px;line-height:4px;color:#777;font-family:'Liberation Serif',serif;letter-spacing:-0.033px;">МБ НОУ «Лицей №111»</span>
<div class="b" style="left:112.2px;top:530.6px;width:159.2px;height:90.79999999999995px;background:radial-gradient(ellipse 70% 78% at 50% 48%,#ffffff 0%,#fdfdfd 60%,#efefef 85%,#dedede 100%);border-radius:3px;border:1.6px solid #f5a877;"></div>
<span class="t " style="left:115.5px;top:534.96px;font-size:5.6px;line-height:7px;color:#111;font-weight:700;letter-spacing:0.593px;text-decoration:underline;">Этапы для развития технологического</span>
<span class="t " style="left:117px;top:542.16px;font-size:5.6px;line-height:7px;color:#111;font-weight:700;letter-spacing:0.840px;text-decoration:underline;">мышления</span>
<div class="b" style="left:117.5px;top:553.5px;width:50px;height:46px;background:linear-gradient(180deg,#d9d5cc 0%,#e6e6e6 100%);"></div>
<span class="t " style="left:176px;top:547.45px;font-size:5.2px;line-height:7px;color:#3a3a3a;font-weight:700;font-family:'Liberation Serif',serif;letter-spacing:0.297px;">Понимание взаимосвязи науки и</span>
<span class="t " style="left:176px;top:553.95px;font-size:5.2px;line-height:7px;color:#3a3a3a;font-weight:700;font-family:'Liberation Serif',serif;letter-spacing:0.024px;">технологий</span>
<span class="t " style="left:176px;top:560.95px;font-size:5.2px;line-height:7px;color:#3a3a3a;font-weight:700;font-family:'Liberation Serif',serif;letter-spacing:0.254px;">Умение проектировать и</span>
<span class="t " style="left:176px;top:567.45px;font-size:5.2px;line-height:7px;color:#3a3a3a;font-weight:700;font-family:'Liberation Serif',serif;letter-spacing:0.156px;">конструировать</span>
<span class="t " style="left:176px;top:574.45px;font-size:5.2px;line-height:7px;color:#3a3a3a;font-weight:700;font-family:'Liberation Serif',serif;letter-spacing:0.247px;">Способность переходить от теории</span>
<span class="t " style="left:176px;top:580.95px;font-size:5.2px;line-height:7px;color:#3a3a3a;font-weight:700;font-family:'Liberation Serif',serif;letter-spacing:0.149px;">к практике</span>
<span class="t " style="left:176px;top:587.95px;font-size:5.2px;line-height:7px;color:#3a3a3a;font-weight:700;font-family:'Liberation Serif',serif;letter-spacing:0.262px;">Готовность к инновациям и</span>
<span class="t " style="left:176px;top:594.45px;font-size:5.2px;line-height:7px;color:#3a3a3a;font-weight:700;font-family:'Liberation Serif',serif;letter-spacing:0.214px;">экспериментам</span>
<span class="t " style="left:176px;top:601.45px;font-size:5.2px;line-height:7px;color:#3a3a3a;font-weight:700;font-family:'Liberation Serif',serif;letter-spacing:0.210px;">Критическое и системное</span>
<span class="t " style="left:176px;top:607.95px;font-size:5.2px;line-height:7px;color:#3a3a3a;font-weight:700;font-family:'Liberation Serif',serif;letter-spacing:0.185px;">мышление</span>
<div class="b" style="left:112.2px;top:632.6px;width:159.2px;height:90.89999999999998px;background:radial-gradient(ellipse 70% 78% at 50% 48%,#ffffff 0%,#fdfdfd 60%,#efefef 85%,#dedede 100%);border-radius:2px;box-shadow:0 0 2px rgba(0,0,0,.18);"></div>
<span class="t " style="left:115.5px;top:634.39px;font-size:5.5px;line-height:7px;color:#111;font-weight:700;letter-spacing:0.617px;">Особенности визуального восприятия</span>
<span class="t " style="left:115.5px;top:641.19px;font-size:5.5px;line-height:7px;color:#111;font-weight:700;letter-spacing:0.651px;">современных школьников</span>
<span class="t " style="left:122px;top:650.71px;font-size:4.6px;line-height:6px;color:#444;letter-spacing:0.349px;">☐Приверженность визуальным форматам</span>
<span class="t " style="left:122px;top:657.41px;font-size:4.6px;line-height:6px;color:#444;letter-spacing:0.403px;">☐Фрагментарное восприятие информации</span>
<span class="t " style="left:122px;top:664.11px;font-size:4.6px;line-height:6px;color:#444;letter-spacing:0.457px;">☐Быстрая смена визуальных символов</span>
<span class="t " style="left:238px;top:680.41px;font-size:4.6px;line-height:6px;color:#333;font-weight:700;letter-spacing:0.478px;">Методы:</span>
<span class="t " style="left:222px;top:687.41px;font-size:4.6px;line-height:6px;color:#333;letter-spacing:0.418px;">✓Визуализация</span>
<span class="t " style="left:179px;top:694.11px;font-size:4.6px;line-height:6px;color:#333;letter-spacing:0.241px;">✓Дозированная подача материала</span>
<span class="t " style="left:201px;top:700.81px;font-size:4.6px;line-height:6px;color:#333;letter-spacing:0.328px;">✓Упрощение инструкций</span>
<div class="b" style="left:112.2px;top:734.8px;width:159.2px;height:90.80000000000007px;background:radial-gradient(ellipse 70% 78% at 50% 48%,#ffffff 0%,#fdfdfd 60%,#efefef 85%,#dedede 100%);border-radius:2px;box-shadow:0 0 2px rgba(0,0,0,.18);"></div>
<span class="t " style="left:114.5px;top:737.13px;font-size:5.4px;line-height:7px;color:#111;font-weight:700;letter-spacing:0.405px;">Графические приемы - это способы</span>
<span class="t " style="left:114.5px;top:744.03px;font-size:5.4px;line-height:7px;color:#111;font-weight:700;letter-spacing:0.353px;">представления информации в визуальной форме</span>
<span class="t " style="left:114.5px;top:754.11px;font-size:4px;line-height:5px;color:#111;font-weight:700;letter-spacing:0.210px;text-decoration:underline;">Цели применения приема</span>
<span class="t " style="left:114.5px;top:760.18px;font-size:3.8px;line-height:5px;color:#222;font-weight:700;letter-spacing:0.463px;">➤ Сделать физические законы понятными и наглядными;</span>
<span class="t " style="left:114.5px;top:765.78px;font-size:3.8px;line-height:5px;color:#222;font-weight:700;letter-spacing:0.441px;">➤ Показать превращения законов физики в реальные устройства</span>
<span class="t " style="left:119px;top:770.48px;font-size:3.8px;line-height:5px;color:#222;font-weight:700;letter-spacing:0.334px;">и технические системы;</span>
<span class="t " style="left:114.5px;top:776.38px;font-size:3.8px;line-height:5px;color:#222;font-weight:700;letter-spacing:0.417px;">➤ Развить умения планировать, моделировать, оптимизировать;</span>
<span class="t " style="left:114.5px;top:782.18px;font-size:3.8px;line-height:5px;color:#222;font-weight:700;letter-spacing:0.448px;">➤ Формировать системное и техническое мышление через</span>
<span class="t " style="left:119px;top:786.88px;font-size:3.8px;line-height:5px;color:#222;font-weight:700;letter-spacing:0.730px;">визуализацию физических явлений и процессов;</span>
<span class="t " style="left:114.5px;top:792.68px;font-size:3.8px;line-height:5px;color:#222;font-weight:700;letter-spacing:0.506px;">➤ Стимулировать творческий подход к решению технических</span>
<span class="t " style="left:119px;top:797.38px;font-size:3.8px;line-height:5px;color:#222;font-weight:700;letter-spacing:0.726px;">задач.</span>
<div class="b" style="left:112.2px;top:837px;width:159.2px;height:53.5px;background:radial-gradient(ellipse 70% 78% at 50% 48%,#ffffff 0%,#fdfdfd 60%,#efefef 85%,#dedede 100%);border-radius:2px;box-shadow:0 0 2px rgba(0,0,0,.18);"></div>
<span class="t " style="left:138px;top:841.96px;font-size:5.6px;line-height:7px;color:#111;font-weight:700;letter-spacing:0.218px;">Графические приемы на уроках</span>
<span class="t " style="left:178px;top:849.06px;font-size:5.6px;line-height:7px;color:#111;font-weight:700;letter-spacing:0.698px;">физики</span>
<span class="t " style="left:119px;top:858.64px;font-size:4.2px;line-height:5px;color:#333;font-style:italic;letter-spacing:0.292px;">☐Графический (визуальный) конспект</span>
<span class="t " style="left:119px;top:864.44px;font-size:4.2px;line-height:5px;color:#333;font-style:italic;letter-spacing:0.348px;">☐Технический чертеж</span>
<span class="t " style="left:119px;top:870.24px;font-size:4.2px;line-height:5px;color:#333;font-style:italic;letter-spacing:0.221px;">☐Блок-схема технического процесса</span>
<span class="t " style="left:119px;top:876.04px;font-size:4.2px;line-height:5px;color:#333;font-style:italic;letter-spacing:-0.018px;">☐Сравнительная инфографика</span>
<span class="t " style="left:119px;top:881.84px;font-size:4.2px;line-height:5px;color:#333;font-style:italic;letter-spacing:-0.001px;">☐Проектная схема «Устройства</span>
<div class="b" style="left:213px;top:856px;width:46px;height:34px;background:linear-gradient(135deg,#dfe6ea 0%,#cfd6dc 100%);"></div>
<svg width="1918" height="1079" viewBox="0 0 1918 1079" style="left:0;top:0" fill="none"><path d="M277.500 398l-4.200 4.300 4.200 4.300" stroke="#444" stroke-width="1.200"/><path d="M131 599.500v-6c-3-2-5-6-5-10 0-8 6-13 14-13s14 5 14 12c0 3-1 5-1 7l2 4-3 1v3c0 2-2 3-5 2.500l-1 0.500v-1z" fill="#101010"/><circle cx="142" cy="581.500" r="4.500" fill="#e03a1e"/><circle cx="124" cy="566" r="5" fill="#222"/><circle cx="133" cy="560" r="4.5" fill="#8a8578"/><circle cx="143" cy="563" r="4" fill="#3a3a3a"/><circle cx="153" cy="562" r="5" fill="#b0a890"/><circle cx="160" cy="572" r="4" fill="#222"/><circle cx="122" cy="576" r="3.5" fill="#444"/><g opacity=".55"><defs><linearGradient id="g11" x1="0" y1="0" x2="1" y2="1"><stop offset="0" stop-color="#fbfbfc"/><stop offset="0.55" stop-color="#d0d0d5"/><stop offset="1" stop-color="#a4a4ac"/></linearGradient><linearGradient id="g11h" x1="0" y1="0" x2="1" y2="1"><stop offset="0" stop-color="#5e5e68"/><stop offset="0.5" stop-color="#a6a6ae"/><stop offset="1" stop-color="#f2f2f4"/></linearGradient></defs><path d="M0.7960 0.0799 L0.7850 0.1544 L0.9671 0.2543 L0.8931 0.4498 L0.6905 0.4040 L0.6494 0.4672 L0.6026 0.5262 L0.7104 0.7038 L0.5486 0.8361 L0.3960 0.6951 L0.3288 0.7293 L0.2587 0.7570 L0.2634 0.9647 L0.0570 0.9984 L-0.0046 0.8000 L-0.0799 0.7960 L-0.1544 0.7850 L-0.2543 0.9671 L-0.4498 0.8931 L-0.4040 0.6905 L-0.4672 0.6494 L-0.5262 0.6026 L-0.7038 0.7104 L-0.8361 0.5486 L-0.6951 0.3960 L-0.7293 0.3288 L-0.7570 0.2587 L-0.9647 0.2634 L-0.9984 0.0570 L-0.8000 -0.0046 L-0.7960 -0.0799 L-0.7850 -0.1544 L-0.9671 -0.2543 L-0.8931 -0.4498 L-0.6905 -0.4040 L-0.6494 -0.4672 L-0.6026 -0.5262 L-0.7104 -0.7038 L-0.5486 -0.8361 L-0.3960 -0.6951 L-0.3288 -0.7293 L-0.2587 -0.7570 L-0.2634 -0.9647 L-0.0570 -0.9984 L0.0046 -0.8000 L0.0799 -0.7960 L0.1544 -0.7850 L0.2543 -0.9671 L0.4498 -0.8931 L0.4040 -0.6905 L0.4672 -0.6494 L0.5262 -0.6026 L0.7038 -0.7104 L0.8361 -0.5486 L0.6951 -0.3960 L0.7293 -0.3288 L0.7570 -0.2587 L0.9647 -0.2634 L0.9984 -0.0570 L0.8000 0.0046Z" transform="translate(259.375 545.5) rotate(-5) scale(13 11)" fill="#7c7c86"/><path d="M0.7960 0.0799 L0.7850 0.1544 L0.9671 0.2543 L0.8931 0.4498 L0.6905 0.4040 L0.6494 0.4672 L0.6026 0.5262 L0.7104 0.7038 L0.5486 0.8361 L0.3960 0.6951 L0.3288 0.7293 L0.2587 0.7570 L0.2634 0.9647 L0.0570 0.9984 L-0.0046 0.8000 L-0.0799 0.7960 L-0.1544 0.7850 L-0.2543 0.9671 L-0.4498 0.8931 L-0.4040 0.6905 L-0.4672 0.6494 L-0.5262 0.6026 L-0.7038 0.7104 L-0.8361 0.5486 L-0.6951 0.3960 L-0.7293 0.3288 L-0.7570 0.2587 L-0.9647 0.2634 L-0.9984 0.0570 L-0.8000 -0.0046 L-0.7960 -0.0799 L-0.7850 -0.1544 L-0.9671 -0.2543 L-0.8931 -0.4498 L-0.6905 -0.4040 L-0.6494 -0.4672 L-0.6026 -0.5262 L-0.7104 -0.7038 L-0.5486 -0.8361 L-0.3960 -0.6951 L-0.3288 -0.7293 L-0.2587 -0.7570 L-0.2634 -0.9647 L-0.0570 -0.9984 L0.0046 -0.8000 L0.0799 -0.7960 L0.1544 -0.7850 L0.2543 -0.9671 L0.4498 -0.8931 L0.4040 -0.6905 L0.4672 -0.6494 L0.5262 -0.6026 L0.7038 -0.7104 L0.8361 -0.5486 L0.6951 -0.3960 L0.7293 -0.3288 L0.7570 -0.2587 L0.9647 -0.2634 L0.9984 -0.0570 L0.8000 0.0046Z" transform="translate(259.2475 544.99) rotate(-5) scale(13 11)" fill="#94949c"/><path d="M0.7960 0.0799 L0.7850 0.1544 L0.9671 0.2543 L0.8931 0.4498 L0.6905 0.4040 L0.6494 0.4672 L0.6026 0.5262 L0.7104 0.7038 L0.5486 0.8361 L0.3960 0.6951 L0.3288 0.7293 L0.2587 0.7570 L0.2634 0.9647 L0.0570 0.9984 L-0.0046 0.8000 L-0.0799 0.7960 L-0.1544 0.7850 L-0.2543 0.9671 L-0.4498 0.8931 L-0.4040 0.6905 L-0.4672 0.6494 L-0.5262 0.6026 L-0.7038 0.7104 L-0.8361 0.5486 L-0.6951 0.3960 L-0.7293 0.3288 L-0.7570 0.2587 L-0.9647 0.2634 L-0.9984 0.0570 L-0.8000 -0.0046 L-0.7960 -0.0799 L-0.7850 -0.1544 L-0.9671 -0.2543 L-0.8931 -0.4498 L-0.6905 -0.4040 L-0.6494 -0.4672 L-0.6026 -0.5262 L-0.7104 -0.7038 L-0.5486 -0.8361 L-0.3960 -0.6951 L-0.3288 -0.7293 L-0.2587 -0.7570 L-0.2634 -0.9647 L-0.0570 -0.9984 L0.0046 -0.8000 L0.0799 -0.7960 L0.1544 -0.7850 L0.2543 -0.9671 L0.4498 -0.8931 L0.4040 -0.6905 L0.4672 -0.6494 L0.5262 -0.6026 L0.7038 -0.7104 L0.8361 -0.5486 L0.6951 -0.3960 L0.7293 -0.3288 L0.7570 -0.2587 L0.9647 -0.2634 L0.9984 -0.0570 L0.8000 0.0046Z" transform="translate(259.12375 544.495) rotate(-5) scale(13 11)" fill="#94949c"/><path d="M0.7960 0.0799 L0.7850 0.1544 L0.9671 0.2543 L0.8931 0.4498 L0.6905 0.4040 L0.6494 0.4672 L0.6026 0.5262 L0.7104 0.7038 L0.5486 0.8361 L0.3960 0.6951 L0.3288 0.7293 L0.2587 0.7570 L0.2634 0.9647 L0.0570 0.9984 L-0.0046 0.8000 L-0.0799 0.7960 L-0.1544 0.7850 L-0.2543 0.9671 L-0.4498 0.8931 L-0.4040 0.6905 L-0.4672 0.6494 L-0.5262 0.6026 L-0.7038 0.7104 L-0.8361 0.5486 L-0.6951 0.3960 L-0.7293 0.3288 L-0.7570 0.2587 L-0.9647 0.2634 L-0.9984 0.0570 L-0.8000 -0.0046 L-0.7960 -0.0799 L-0.7850 -0.1544 L-0.9671 -0.2543 L-0.8931 -0.4498 L-0.6905 -0.4040 L-0.6494 -0.4672 L-0.6026 -0.5262 L-0.7104 -0.7038 L-0.5486 -0.8361 L-0.3960 -0.6951 L-0.3288 -0.7293 L-0.2587 -0.7570 L-0.2634 -0.9647 L-0.0570 -0.9984 L0.0046 -0.8000 L0.0799 -0.7960 L0.1544 -0.7850 L0.2543 -0.9671 L0.4498 -0.8931 L0.4040 -0.6905 L0.4672 -0.6494 L0.5262 -0.6026 L0.7038 -0.7104 L0.8361 -0.5486 L0.6951 -0.3960 L0.7293 -0.3288 L0.7570 -0.2587 L0.9647 -0.2634 L0.9984 -0.0570 L0.8000 0.0046Z" transform="translate(259 544) rotate(-5) scale(13 11)" fill="url(#g11)"/><g transform="translate(259 544) rotate(-5) scale(13 11)"><circle cx="0.000" cy="0.000" r="0.360" fill="url(#g11h)"/><ellipse cx="0.079" cy="0.111" rx="0.302" ry="0.281" fill="#fdfdfd"/><circle cx="0.627" cy="0.127" r="0.120" fill="url(#g11h)"/><ellipse cx="0.654" cy="0.164" rx="0.101" ry="0.094" fill="#fdfdfd"/><circle cx="0.354" cy="0.533" r="0.120" fill="url(#g11h)"/><ellipse cx="0.380" cy="0.570" rx="0.101" ry="0.094" fill="#fdfdfd"/><circle cx="-0.127" cy="0.627" r="0.120" fill="url(#g11h)"/><ellipse cx="-0.101" cy="0.664" rx="0.101" ry="0.094" fill="#fdfdfd"/><circle cx="-0.533" cy="0.354" r="0.120" fill="url(#g11h)"/><ellipse cx="-0.507" cy="0.391" rx="0.101" ry="0.094" fill="#fdfdfd"/><circle cx="-0.627" cy="-0.127" r="0.120" fill="url(#g11h)"/><ellipse cx="-0.601" cy="-0.090" rx="0.101" ry="0.094" fill="#fdfdfd"/><circle cx="-0.354" cy="-0.533" r="0.120" fill="url(#g11h)"/><ellipse cx="-0.327" cy="-0.496" rx="0.101" ry="0.094" fill="#fdfdfd"/><circle cx="0.127" cy="-0.627" r="0.120" fill="url(#g11h)"/><ellipse cx="0.154" cy="-0.590" rx="0.101" ry="0.094" fill="#fdfdfd"/><circle cx="0.533" cy="-0.354" r="0.120" fill="url(#g11h)"/><ellipse cx="0.560" cy="-0.317" rx="0.101" ry="0.094" fill="#fdfdfd"/></g></g><path d="M172.300 549.1l2.200 1.500-2.200 1.500z" fill="#222"/><path d="M172.300 562.6l2.200 1.500-2.200 1.500z" fill="#222"/><path d="M172.300 576.1l2.200 1.500-2.200 1.500z" fill="#222"/><path d="M172.300 589.6l2.200 1.500-2.200 1.500z" fill="#222"/><path d="M172.300 603.1l2.200 1.500-2.200 1.500z" fill="#222"/><g opacity=".5"><defs><linearGradient id="g12" x1="0" y1="0" x2="1" y2="1"><stop offset="0" stop-color="#fbfbfc"/><stop offset="0.55" stop-color="#d0d0d5"/><stop offset="1" stop-color="#a4a4ac"/></linearGradient><linearGradient id="g12h" x1="0" y1="0" x2="1" y2="1"><stop offset="0" stop-color="#5e5e68"/><stop offset="0.5" stop-color="#a6a6ae"/><stop offset="1" stop-color="#f2f2f4"/></linearGradient></defs><path d="M0.7960 0.0799 L0.7850 0.1544 L0.9671 0.2543 L0.8931 0.4498 L0.6905 0.4040 L0.6494 0.4672 L0.6026 0.5262 L0.7104 0.7038 L0.5486 0.8361 L0.3960 0.6951 L0.3288 0.7293 L0.2587 0.7570 L0.2634 0.9647 L0.0570 0.9984 L-0.0046 0.8000 L-0.0799 0.7960 L-0.1544 0.7850 L-0.2543 0.9671 L-0.4498 0.8931 L-0.4040 0.6905 L-0.4672 0.6494 L-0.5262 0.6026 L-0.7038 0.7104 L-0.8361 0.5486 L-0.6951 0.3960 L-0.7293 0.3288 L-0.7570 0.2587 L-0.9647 0.2634 L-0.9984 0.0570 L-0.8000 -0.0046 L-0.7960 -0.0799 L-0.7850 -0.1544 L-0.9671 -0.2543 L-0.8931 -0.4498 L-0.6905 -0.4040 L-0.6494 -0.4672 L-0.6026 -0.5262 L-0.7104 -0.7038 L-0.5486 -0.8361 L-0.3960 -0.6951 L-0.3288 -0.7293 L-0.2587 -0.7570 L-0.2634 -0.9647 L-0.0570 -0.9984 L0.0046 -0.8000 L0.0799 -0.7960 L0.1544 -0.7850 L0.2543 -0.9671 L0.4498 -0.8931 L0.4040 -0.6905 L0.4672 -0.6494 L0.5262 -0.6026 L0.7038 -0.7104 L0.8361 -0.5486 L0.6951 -0.3960 L0.7293 -0.3288 L0.7570 -0.2587 L0.9647 -0.2634 L0.9984 -0.0570 L0.8000 0.0046Z" transform="translate(259.375 645.5) rotate(-5) scale(12 10)" fill="#7c7c86"/><path d="M0.7960 0.0799 L0.7850 0.1544 L0.9671 0.2543 L0.8931 0.4498 L0.6905 0.4040 L0.6494 0.4672 L0.6026 0.5262 L0.7104 0.7038 L0.5486 0.8361 L0.3960 0.6951 L0.3288 0.7293 L0.2587 0.7570 L0.2634 0.9647 L0.0570 0.9984 L-0.0046 0.8000 L-0.0799 0.7960 L-0.1544 0.7850 L-0.2543 0.9671 L-0.4498 0.8931 L-0.4040 0.6905 L-0.4672 0.6494 L-0.5262 0.6026 L-0.7038 0.7104 L-0.8361 0.5486 L-0.6951 0.3960 L-0.7293 0.3288 L-0.7570 0.2587 L-0.9647 0.2634 L-0.9984 0.0570 L-0.8000 -0.0046 L-0.7960 -0.0799 L-0.7850 -0.1544 L-0.9671 -0.2543 L-0.8931 -0.4498 L-0.6905 -0.4040 L-0.6494 -0.4672 L-0.6026 -0.5262 L-0.7104 -0.7038 L-0.5486 -0.8361 L-0.3960 -0.6951 L-0.3288 -0.7293 L-0.2587 -0.7570 L-0.2634 -0.9647 L-0.0570 -0.9984 L0.0046 -0.8000 L0.0799 -0.7960 L0.1544 -0.7850 L0.2543 -0.9671 L0.4498 -0.8931 L0.4040 -0.6905 L0.4672 -0.6494 L0.5262 -0.6026 L0.7038 -0.7104 L0.8361 -0.5486 L0.6951 -0.3960 L0.7293 -0.3288 L0.7570 -0.2587 L0.9647 -0.2634 L0.9984 -0.0570 L0.8000 0.0046Z" transform="translate(259.2475 644.99) rotate(-5) scale(12 10)" fill="#94949c"/><path d="M0.7960 0.0799 L0.7850 0.1544 L0.9671 0.2543 L0.8931 0.4498 L0.6905 0.4040 L0.6494 0.4672 L0.6026 0.5262 L0.7104 0.7038 L0.5486 0.8361 L0.3960 0.6951 L0.3288 0.7293 L0.2587 0.7570 L0.2634 0.9647 L0.0570 0.9984 L-0.0046 0.8000 L-0.0799 0.7960 L-0.1544 0.7850 L-0.2543 0.9671 L-0.4498 0.8931 L-0.4040 0.6905 L-0.4672 0.6494 L-0.5262 0.6026 L-0.7038 0.7104 L-0.8361 0.5486 L-0.6951 0.3960 L-0.7293 0.3288 L-0.7570 0.2587 L-0.9647 0.2634 L-0.9984 0.0570 L-0.8000 -0.0046 L-0.7960 -0.0799 L-0.7850 -0.1544 L-0.9671 -0.2543 L-0.8931 -0.4498 L-0.6905 -0.4040 L-0.6494 -0.4672 L-0.6026 -0.5262 L-0.7104 -0.7038 L-0.5486 -0.8361 L-0.3960 -0.6951 L-0.3288 -0.7293 L-0.2587 -0.7570 L-0.2634 -0.9647 L-0.0570 -0.9984 L0.0046 -0.8000 L0.0799 -0.7960 L0.1544 -0.7850 L0.2543 -0.9671 L0.4498 -0.8931 L0.4040 -0.6905 L0.4672 -0.6494 L0.5262 -0.6026 L0.7038 -0.7104 L0.8361 -0.5486 L0.6951 -0.3960 L0.7293 -0.3288 L0.7570 -0.2587 L0.9647 -0.2634 L0.9984 -0.0570 L0.8000 0.0046Z" transform="translate(259.12375 644.495) rotate(-5) scale(12 10)" fill="#94949c"/><path d="M0.7960 0.0799 L0.7850 0.1544 L0.9671 0.2543 L0.8931 0.4498 L0.6905 0.4040 L0.6494 0.4672 L0.6026 0.5262 L0.7104 0.7038 L0.5486 0.8361 L0.3960 0.6951 L0.3288 0.7293 L0.2587 0.7570 L0.2634 0.9647 L0.0570 0.9984 L-0.0046 0.8000 L-0.0799 0.7960 L-0.1544 0.7850 L-0.2543 0.9671 L-0.4498 0.8931 L-0.4040 0.6905 L-0.4672 0.6494 L-0.5262 0.6026 L-0.7038 0.7104 L-0.8361 0.5486 L-0.6951 0.3960 L-0.7293 0.3288 L-0.7570 0.2587 L-0.9647 0.2634 L-0.9984 0.0570 L-0.8000 -0.0046 L-0.7960 -0.0799 L-0.7850 -0.1544 L-0.9671 -0.2543 L-0.8931 -0.4498 L-0.6905 -0.4040 L-0.6494 -0.4672 L-0.6026 -0.5262 L-0.7104 -0.7038 L-0.5486 -0.8361 L-0.3960 -0.6951 L-0.3288 -0.7293 L-0.2587 -0.7570 L-0.2634 -0.9647 L-0.0570 -0.9984 L0.0046 -0.8000 L0.0799 -0.7960 L0.1544 -0.7850 L0.2543 -0.9671 L0.4498 -0.8931 L0.4040 -0.6905 L0.4672 -0.6494 L0.5262 -0.6026 L0.7038 -0.7104 L0.8361 -0.5486 L0.6951 -0.3960 L0.7293 -0.3288 L0.7570 -0.2587 L0.9647 -0.2634 L0.9984 -0.0570 L0.8000 0.0046Z" transform="translate(259 644) rotate(-5) scale(12 10)" fill="url(#g12)"/><g transform="translate(259 644) rotate(-5) scale(12 10)"><circle cx="0.000" cy="0.000" r="0.360" fill="url(#g12h)"/><ellipse cx="0.079" cy="0.111" rx="0.302" ry="0.281" fill="#fdfdfd"/><circle cx="0.627" cy="0.127" r="0.120" fill="url(#g12h)"/><ellipse cx="0.654" cy="0.164" rx="0.101" ry="0.094" fill="#fdfdfd"/><circle cx="0.354" cy="0.533" r="0.120" fill="url(#g12h)"/><ellipse cx="0.380" cy="0.570" rx="0.101" ry="0.094" fill="#fdfdfd"/><circle cx="-0.127" cy="0.627" r="0.120" fill="url(#g12h)"/><ellipse cx="-0.101" cy="0.664" rx="0.101" ry="0.094" fill="#fdfdfd"/><circle cx="-0.533" cy="0.354" r="0.120" fill="url(#g12h)"/><ellipse cx="-0.507" cy="0.391" rx="0.101" ry="0.094" fill="#fdfdfd"/><circle cx="-0.627" cy="-0.127" r="0.120" fill="url(#g12h)"/><ellipse cx="-0.601" cy="-0.090" rx="0.101" ry="0.094" fill="#fdfdfd"/><circle cx="-0.354" cy="-0.533" r="0.120" fill="url(#g12h)"/><ellipse cx="-0.327" cy="-0.496" rx="0.101" ry="0.094" fill="#fdfdfd"/><circle cx="0.127" cy="-0.627" r="0.120" fill="url(#g12h)"/><ellipse cx="0.154" cy="-0.590" rx="0.101" ry="0.094" fill="#fdfdfd"/><circle cx="0.533" cy="-0.354" r="0.120" fill="url(#g12h)"/><ellipse cx="0.560" cy="-0.317" rx="0.101" ry="0.094" fill="#fdfdfd"/></g></g><path d="M119 717v-5c-2-2-3-4-3-7 0-5 4-8 9-8s9 3 9 8c0 2-1 3-1 4l1 3-2 0.500v2c0 1.500-1.500 2-3 1.600v1z" fill="#e8641e"/><path d="M168 717v-5c2-2 3-4 3-7 0-5-4-8-9-8s-9 3-9 8c0 2 1 3 1 4l-1 3 2 0.500v2c0 1.500 1.500 2 3 1.600v1z" fill="#1e8ae0"/><circle cx="126" cy="688" r="5" fill="#4ab0e8" opacity=".9"/><circle cx="134" cy="683" r="5" fill="#f0b030" opacity=".9"/><circle cx="143" cy="681" r="5.5" fill="#e84a6a" opacity=".9"/><circle cx="152" cy="683" r="5" fill="#58c060" opacity=".9"/><circle cx="160" cy="688" r="5" fill="#8a5ad8" opacity=".9"/><circle cx="138" cy="691" r="4.5" fill="#f07830" opacity=".9"/><circle cx="149" cy="691" r="4.5" fill="#30b8c8" opacity=".9"/><circle cx="143" cy="696" r="3.5" fill="#f0d040" opacity=".9"/><g opacity=".5"><defs><linearGradient id="g13" x1="0" y1="0" x2="1" y2="1"><stop offset="0" stop-color="#fbfbfc"/><stop offset="0.55" stop-color="#d0d0d5"/><stop offset="1" stop-color="#a4a4ac"/></linearGradient><linearGradient id="g13h" x1="0" y1="0" x2="1" y2="1"><stop offset="0" stop-color="#5e5e68"/><stop offset="0.5" stop-color="#a6a6ae"/><stop offset="1" stop-color="#f2f2f4"/></linearGradient></defs><path d="M0.7960 0.0799 L0.7850 0.1544 L0.9671 0.2543 L0.8931 0.4498 L0.6905 0.4040 L0.6494 0.4672 L0.6026 0.5262 L0.7104 0.7038 L0.5486 0.8361 L0.3960 0.6951 L0.3288 0.7293 L0.2587 0.7570 L0.2634 0.9647 L0.0570 0.9984 L-0.0046 0.8000 L-0.0799 0.7960 L-0.1544 0.7850 L-0.2543 0.9671 L-0.4498 0.8931 L-0.4040 0.6905 L-0.4672 0.6494 L-0.5262 0.6026 L-0.7038 0.7104 L-0.8361 0.5486 L-0.6951 0.3960 L-0.7293 0.3288 L-0.7570 0.2587 L-0.9647 0.2634 L-0.9984 0.0570 L-0.8000 -0.0046 L-0.7960 -0.0799 L-0.7850 -0.1544 L-0.9671 -0.2543 L-0.8931 -0.4498 L-0.6905 -0.4040 L-0.6494 -0.4672 L-0.6026 -0.5262 L-0.7104 -0.7038 L-0.5486 -0.8361 L-0.3960 -0.6951 L-0.3288 -0.7293 L-0.2587 -0.7570 L-0.2634 -0.9647 L-0.0570 -0.9984 L0.0046 -0.8000 L0.0799 -0.7960 L0.1544 -0.7850 L0.2543 -0.9671 L0.4498 -0.8931 L0.4040 -0.6905 L0.4672 -0.6494 L0.5262 -0.6026 L0.7038 -0.7104 L0.8361 -0.5486 L0.6951 -0.3960 L0.7293 -0.3288 L0.7570 -0.2587 L0.9647 -0.2634 L0.9984 -0.0570 L0.8000 0.0046Z" transform="translate(259.375 747.5) rotate(-5) scale(12 10)" fill="#7c7c86"/><path d="M0.7960 0.0799 L0.7850 0.1544 L0.9671 0.2543 L0.8931 0.4498 L0.6905 0.4040 L0.6494 0.4672 L0.6026 0.5262 L0.7104 0.7038 L0.5486 0.8361 L0.3960 0.6951 L0.3288 0.7293 L0.2587 0.7570 L0.2634 0.9647 L0.0570 0.9984 L-0.0046 0.8000 L-0.0799 0.7960 L-0.1544 0.7850 L-0.2543 0.9671 L-0.4498 0.8931 L-0.4040 0.6905 L-0.4672 0.6494 L-0.5262 0.6026 L-0.7038 0.7104 L-0.8361 0.5486 L-0.6951 0.3960 L-0.7293 0.3288 L-0.7570 0.2587 L-0.9647 0.2634 L-0.9984 0.0570 L-0.8000 -0.0046 L-0.7960 -0.0799 L-0.7850 -0.1544 L-0.9671 -0.2543 L-0.8931 -0.4498 L-0.6905 -0.4040 L-0.6494 -0.4672 L-0.6026 -0.5262 L-0.7104 -0.7038 L-0.5486 -0.8361 L-0.3960 -0.6951 L-0.3288 -0.7293 L-0.2587 -0.7570 L-0.2634 -0.9647 L-0.0570 -0.9984 L0.0046 -0.8000 L0.0799 -0.7960 L0.1544 -0.7850 L0.2543 -0.9671 L0.4498 -0.8931 L0.4040 -0.6905 L0.4672 -0.6494 L0.5262 -0.6026 L0.7038 -0.7104 L0.8361 -0.5486 L0.6951 -0.3960 L0.7293 -0.3288 L0.7570 -0.2587 L0.9647 -0.2634 L0.9984 -0.0570 L0.8000 0.0046Z" transform="translate(259.2475 746.99) rotate(-5) scale(12 10)" fill="#94949c"/><path d="M0.7960 0.0799 L0.7850 0.1544 L0.9671 0.2543 L0.8931 0.4498 L0.6905 0.4040 L0.6494 0.4672 L0.6026 0.5262 L0.7104 0.7038 L0.5486 0.8361 L0.3960 0.6951 L0.3288 0.7293 L0.2587 0.7570 L0.2634 0.9647 L0.0570 0.9984 L-0.0046 0.8000 L-0.0799 0.7960 L-0.1544 0.7850 L-0.2543 0.9671 L-0.4498 0.8931 L-0.4040 0.6905 L-0.4672 0.6494 L-0.5262 0.6026 L-0.7038 0.7104 L-0.8361 0.5486 L-0.6951 0.3960 L-0.7293 0.3288 L-0.7570 0.2587 L-0.9647 0.2634 L-0.9984 0.0570 L-0.8000 -0.0046 L-0.7960 -0.0799 L-0.7850 -0.1544 L-0.9671 -0.2543 L-0.8931 -0.4498 L-0.6905 -0.4040 L-0.6494 -0.4672 L-0.6026 -0.5262 L-0.7104 -0.7038 L-0.5486 -0.8361 L-0.3960 -0.6951 L-0.3288 -0.7293 L-0.2587 -0.7570 L-0.2634 -0.9647 L-0.0570 -0.9984 L0.0046 -0.8000 L0.0799 -0.7960 L0.1544 -0.7850 L0.2543 -0.9671 L0.4498 -0.8931 L0.4040 -0.6905 L0.4672 -0.6494 L0.5262 -0.6026 L0.7038 -0.7104 L0.8361 -0.5486 L0.6951 -0.3960 L0.7293 -0.3288 L0.7570 -0.2587 L0.9647 -0.2634 L0.9984 -0.0570 L0.8000 0.0046Z" transform="translate(259.12375 746.495) rotate(-5) scale(12 10)" fill="#94949c"/><path d="M0.7960 0.0799 L0.7850 0.1544 L0.9671 0.2543 L0.8931 0.4498 L0.6905 0.4040 L0.6494 0.4672 L0.6026 0.5262 L0.7104 0.7038 L0.5486 0.8361 L0.3960 0.6951 L0.3288 0.7293 L0.2587 0.7570 L0.2634 0.9647 L0.0570 0.9984 L-0.0046 0.8000 L-0.0799 0.7960 L-0.1544 0.7850 L-0.2543 0.9671 L-0.4498 0.8931 L-0.4040 0.6905 L-0.4672 0.6494 L-0.5262 0.6026 L-0.7038 0.7104 L-0.8361 0.5486 L-0.6951 0.3960 L-0.7293 0.3288 L-0.7570 0.2587 L-0.9647 0.2634 L-0.9984 0.0570 L-0.8000 -0.0046 L-0.7960 -0.0799 L-0.7850 -0.1544 L-0.9671 -0.2543 L-0.8931 -0.4498 L-0.6905 -0.4040 L-0.6494 -0.4672 L-0.6026 -0.5262 L-0.7104 -0.7038 L-0.5486 -0.8361 L-0.3960 -0.6951 L-0.3288 -0.7293 L-0.2587 -0.7570 L-0.2634 -0.9647 L-0.0570 -0.9984 L0.0046 -0.8000 L0.0799 -0.7960 L0.1544 -0.7850 L0.2543 -0.9671 L0.4498 -0.8931 L0.4040 -0.6905 L0.4672 -0.6494 L0.5262 -0.6026 L0.7038 -0.7104 L0.8361 -0.5486 L0.6951 -0.3960 L0.7293 -0.3288 L0.7570 -0.2587 L0.9647 -0.2634 L0.9984 -0.0570 L0.8000 0.0046Z" transform="translate(259 746) rotate(-5) scale(12 10)" fill="url(#g13)"/><g transform="translate(259 746) rotate(-5) scale(12 10)"><circle cx="0.000" cy="0.000" r="0.360" fill="url(#g13h)"/><ellipse cx="0.079" cy="0.111" rx="0.302" ry="0.281" fill="#fdfdfd"/><circle cx="0.627" cy="0.127" r="0.120" fill="url(#g13h)"/><ellipse cx="0.654" cy="0.164" rx="0.101" ry="0.094" fill="#fdfdfd"/><circle cx="0.354" cy="0.533" r="0.120" fill="url(#g13h)"/><ellipse cx="0.380" cy="0.570" rx="0.101" ry="0.094" fill="#fdfdfd"/><circle cx="-0.127" cy="0.627" r="0.120" fill="url(#g13h)"/><ellipse cx="-0.101" cy="0.664" rx="0.101" ry="0.094" fill="#fdfdfd"/><circle cx="-0.533" cy="0.354" r="0.120" fill="url(#g13h)"/><ellipse cx="-0.507" cy="0.391" rx="0.101" ry="0.094" fill="#fdfdfd"/><circle cx="-0.627" cy="-0.127" r="0.120" fill="url(#g13h)"/><ellipse cx="-0.601" cy="-0.090" rx="0.101" ry="0.094" fill="#fdfdfd"/><circle cx="-0.354" cy="-0.533" r="0.120" fill="url(#g13h)"/><ellipse cx="-0.327" cy="-0.496" rx="0.101" ry="0.094" fill="#fdfdfd"/><circle cx="0.127" cy="-0.627" r="0.120" fill="url(#g13h)"/><ellipse cx="0.154" cy="-0.590" rx="0.101" ry="0.094" fill="#fdfdfd"/><circle cx="0.533" cy="-0.354" r="0.120" fill="url(#g13h)"/><ellipse cx="0.560" cy="-0.317" rx="0.101" ry="0.094" fill="#fdfdfd"/></g></g><rect x="217" y="860" width="10" height="7" rx="1.500" fill="#e8a8b8"/><rect x="230" y="859" width="12" height="8" rx="1.500" fill="#a8c8e8"/><rect x="245" y="861" width="10" height="7" rx="1.500" fill="#b8e0b0"/><rect x="219" y="872" width="12" height="8" rx="1.500" fill="#f0d890"/><rect x="236" y="874" width="9" height="7" rx="1.500" fill="#c8b0e0"/><rect x="248" y="872" width="8" height="9" rx="1.500" fill="#e8b890"/><g opacity=".5"><defs><linearGradient id="g14" x1="0" y1="0" x2="1" y2="1"><stop offset="0" stop-color="#fbfbfc"/><stop offset="0.55" stop-color="#d0d0d5"/><stop offset="1" stop-color="#a4a4ac"/></linearGradient><linearGradient id="g14h" x1="0" y1="0" x2="1" y2="1"><stop offset="0" stop-color="#5e5e68"/><stop offset="0.5" stop-color="#a6a6ae"/><stop offset="1" stop-color="#f2f2f4"/></linearGradient></defs><path d="M0.7960 0.0799 L0.7850 0.1544 L0.9671 0.2543 L0.8931 0.4498 L0.6905 0.4040 L0.6494 0.4672 L0.6026 0.5262 L0.7104 0.7038 L0.5486 0.8361 L0.3960 0.6951 L0.3288 0.7293 L0.2587 0.7570 L0.2634 0.9647 L0.0570 0.9984 L-0.0046 0.8000 L-0.0799 0.7960 L-0.1544 0.7850 L-0.2543 0.9671 L-0.4498 0.8931 L-0.4040 0.6905 L-0.4672 0.6494 L-0.5262 0.6026 L-0.7038 0.7104 L-0.8361 0.5486 L-0.6951 0.3960 L-0.7293 0.3288 L-0.7570 0.2587 L-0.9647 0.2634 L-0.9984 0.0570 L-0.8000 -0.0046 L-0.7960 -0.0799 L-0.7850 -0.1544 L-0.9671 -0.2543 L-0.8931 -0.4498 L-0.6905 -0.4040 L-0.6494 -0.4672 L-0.6026 -0.5262 L-0.7104 -0.7038 L-0.5486 -0.8361 L-0.3960 -0.6951 L-0.3288 -0.7293 L-0.2587 -0.7570 L-0.2634 -0.9647 L-0.0570 -0.9984 L0.0046 -0.8000 L0.0799 -0.7960 L0.1544 -0.7850 L0.2543 -0.9671 L0.4498 -0.8931 L0.4040 -0.6905 L0.4672 -0.6494 L0.5262 -0.6026 L0.7038 -0.7104 L0.8361 -0.5486 L0.6951 -0.3960 L0.7293 -0.3288 L0.7570 -0.2587 L0.9647 -0.2634 L0.9984 -0.0570 L0.8000 0.0046Z" transform="translate(261.375 851.5) rotate(-5) scale(11 9)" fill="#7c7c86"/><path d="M0.7960 0.0799 L0.7850 0.1544 L0.9671 0.2543 L0.8931 0.4498 L0.6905 0.4040 L0.6494 0.4672 L0.6026 0.5262 L0.7104 0.7038 L0.5486 0.8361 L0.3960 0.6951 L0.3288 0.7293 L0.2587 0.7570 L0.2634 0.9647 L0.0570 0.9984 L-0.0046 0.8000 L-0.0799 0.7960 L-0.1544 0.7850 L-0.2543 0.9671 L-0.4498 0.8931 L-0.4040 0.6905 L-0.4672 0.6494 L-0.5262 0.6026 L-0.7038 0.7104 L-0.8361 0.5486 L-0.6951 0.3960 L-0.7293 0.3288 L-0.7570 0.2587 L-0.9647 0.2634 L-0.9984 0.0570 L-0.8000 -0.0046 L-0.7960 -0.0799 L-0.7850 -0.1544 L-0.9671 -0.2543 L-0.8931 -0.4498 L-0.6905 -0.4040 L-0.6494 -0.4672 L-0.6026 -0.5262 L-0.7104 -0.7038 L-0.5486 -0.8361 L-0.3960 -0.6951 L-0.3288 -0.7293 L-0.2587 -0.7570 L-0.2634 -0.9647 L-0.0570 -0.9984 L0.0046 -0.8000 L0.0799 -0.7960 L0.1544 -0.7850 L0.2543 -0.9671 L0.4498 -0.8931 L0.4040 -0.6905 L0.4672 -0.6494 L0.5262 -0.6026 L0.7038 -0.7104 L0.8361 -0.5486 L0.6951 -0.3960 L0.7293 -0.3288 L0.7570 -0.2587 L0.9647 -0.2634 L0.9984 -0.0570 L0.8000 0.0046Z" transform="translate(261.2475 850.99) rotate(-5) scale(11 9)" fill="#94949c"/><path d="M0.7960 0.0799 L0.7850 0.1544 L0.9671 0.2543 L0.8931 0.4498 L0.6905 0.4040 L0.6494 0.4672 L0.6026 0.5262 L0.7104 0.7038 L0.5486 0.8361 L0.3960 0.6951 L0.3288 0.7293 L0.2587 0.7570 L0.2634 0.9647 L0.0570 0.9984 L-0.0046 0.8000 L-0.0799 0.7960 L-0.1544 0.7850 L-0.2543 0.9671 L-0.4498 0.8931 L-0.4040 0.6905 L-0.4672 0.6494 L-0.5262 0.6026 L-0.7038 0.7104 L-0.8361 0.5486 L-0.6951 0.3960 L-0.7293 0.3288 L-0.7570 0.2587 L-0.9647 0.2634 L-0.9984 0.0570 L-0.8000 -0.0046 L-0.7960 -0.0799 L-0.7850 -0.1544 L-0.9671 -0.2543 L-0.8931 -0.4498 L-0.6905 -0.4040 L-0.6494 -0.4672 L-0.6026 -0.5262 L-0.7104 -0.7038 L-0.5486 -0.8361 L-0.3960 -0.6951 L-0.3288 -0.7293 L-0.2587 -0.7570 L-0.2634 -0.9647 L-0.0570 -0.9984 L0.0046 -0.8000 L0.0799 -0.7960 L0.1544 -0.7850 L0.2543 -0.9671 L0.4498 -0.8931 L0.4040 -0.6905 L0.4672 -0.6494 L0.5262 -0.6026 L0.7038 -0.7104 L0.8361 -0.5486 L0.6951 -0.3960 L0.7293 -0.3288 L0.7570 -0.2587 L0.9647 -0.2634 L0.9984 -0.0570 L0.8000 0.0046Z" transform="translate(261.12375 850.495) rotate(-5) scale(11 9)" fill="#94949c"/><path d="M0.7960 0.0799 L0.7850 0.1544 L0.9671 0.2543 L0.8931 0.4498 L0.6905 0.4040 L0.6494 0.4672 L0.6026 0.5262 L0.7104 0.7038 L0.5486 0.8361 L0.3960 0.6951 L0.3288 0.7293 L0.2587 0.7570 L0.2634 0.9647 L0.0570 0.9984 L-0.0046 0.8000 L-0.0799 0.7960 L-0.1544 0.7850 L-0.2543 0.9671 L-0.4498 0.8931 L-0.4040 0.6905 L-0.4672 0.6494 L-0.5262 0.6026 L-0.7038 0.7104 L-0.8361 0.5486 L-0.6951 0.3960 L-0.7293 0.3288 L-0.7570 0.2587 L-0.9647 0.2634 L-0.9984 0.0570 L-0.8000 -0.0046 L-0.7960 -0.0799 L-0.7850 -0.1544 L-0.9671 -0.2543 L-0.8931 -0.4498 L-0.6905 -0.4040 L-0.6494 -0.4672 L-0.6026 -0.5262 L-0.7104 -0.7038 L-0.5486 -0.8361 L-0.3960 -0.6951 L-0.3288 -0.7293 L-0.2587 -0.7570 L-0.2634 -0.9647 L-0.0570 -0.9984 L0.0046 -0.8000 L0.0799 -0.7960 L0.1544 -0.7850 L0.2543 -0.9671 L0.4498 -0.8931 L0.4040 -0.6905 L0.4672 -0.6494 L0.5262 -0.6026 L0.7038 -0.7104 L0.8361 -0.5486 L0.6951 -0.3960 L0.7293 -0.3288 L0.7570 -0.2587 L0.9647 -0.2634 L0.9984 -0.0570 L0.8000 0.0046Z" transform="translate(261 850) rotate(-5) scale(11 9)" fill="url(#g14)"/><g transform="translate(261 850) rotate(-5) scale(11 9)"><circle cx="0.000" cy="0.000" r="0.360" fill="url(#g14h)"/><ellipse cx="0.079" cy="0.111" rx="0.302" ry="0.281" fill="#fdfdfd"/><circle cx="0.627" cy="0.127" r="0.120" fill="url(#g14h)"/><ellipse cx="0.654" cy="0.164" rx="0.101" ry="0.094" fill="#fdfdfd"/><circle cx="0.354" cy="0.533" r="0.120" fill="url(#g14h)"/><ellipse cx="0.380" cy="0.570" rx="0.101" ry="0.094" fill="#fdfdfd"/><circle cx="-0.127" cy="0.627" r="0.120" fill="url(#g14h)"/><ellipse cx="-0.101" cy="0.664" rx="0.101" ry="0.094" fill="#fdfdfd"/><circle cx="-0.533" cy="0.354" r="0.120" fill="url(#g14h)"/><ellipse cx="-0.507" cy="0.391" rx="0.101" ry="0.094" fill="#fdfdfd"/><circle cx="-0.627" cy="-0.127" r="0.120" fill="url(#g14h)"/><ellipse cx="-0.601" cy="-0.090" rx="0.101" ry="0.094" fill="#fdfdfd"/><circle cx="-0.354" cy="-0.533" r="0.120" fill="url(#g14h)"/><ellipse cx="-0.327" cy="-0.496" rx="0.101" ry="0.094" fill="#fdfdfd"/><circle cx="0.127" cy="-0.627" r="0.120" fill="url(#g14h)"/><ellipse cx="0.154" cy="-0.590" rx="0.101" ry="0.094" fill="#fdfdfd"/><circle cx="0.533" cy="-0.354" r="0.120" fill="url(#g14h)"/><ellipse cx="0.560" cy="-0.317" rx="0.101" ry="0.094" fill="#fdfdfd"/></g></g><path d="M191.500 581.500v12.500l3-2.800 2.200 4.800 1.800-0.800-2.200-4.700h4z" fill="#fff" stroke="#333" stroke-width="0.800" stroke-linejoin="round"/><path d="M179.500 908.300h12M185.500 902.300v12" stroke="#333" stroke-width="1.300"/></svg>
<span class="t " style="left:85.3px;top:935.99px;font-size:11px;line-height:14px;color:#555;letter-spacing:-0.535px;">Слайд 1 / 19</span>
<span class="t " style="left:179.6px;top:935.99px;font-size:11px;line-height:14px;color:#555;letter-spacing:-0.644px;">Gear Drives</span>
<span class="t " style="left:273px;top:935.99px;font-size:11px;line-height:14px;color:#555;letter-spacing:-0.664px;">Отсутствует шрифт</span>
<span class="t " style="left:866.3px;top:935.19px;font-size:11px;line-height:14px;color:#555;letter-spacing:-0.510px;">Заметки</span>
<span class="t " style="left:949.5px;top:935.19px;font-size:11px;line-height:14px;color:#555;letter-spacing:-0.297px;">Примечание</span>
<div class="b" style="left:1029.8px;top:932.3px;width:19.8px;height:19.2px;background:#dddddd;border-radius:2px;"></div>
<div class="b" style="left:1121.8px;top:933.8px;width:17.5px;height:16.2px;background:#e8641a;border-radius:2.5px;"></div>
<span class="t " style="left:1191.8px;top:935.86px;font-size:10.5px;line-height:13px;color:#555;letter-spacing:-0.672px;">79%</span>
<svg width="1918" height="1079" viewBox="0 0 1918 1079" style="left:0;top:0" fill="none"><path d="M164 938.500l3-1.500 2 1.500 2-1.500 3 1.500-1.500 2.500-1.500-0.800v7h-6v-7l-1.500 0.800z" stroke="#666" stroke-width="1" stroke-linejoin="round"/><circle cx="171.800" cy="945.200" r="1.800" stroke="#666" stroke-width="1" fill="#f0f0f0"/><path d="M173 946.500l1.800 1.800" stroke="#666" stroke-width="1"/><path d="M262 938l5 8.500h-10z" fill="#f3a51e" stroke="#f3a51e" stroke-width="1" stroke-linejoin="round"/><path d="M262 941v3" stroke="#fff" stroke-width="1"/><circle cx="262" cy="945.300" r="0.550" fill="#fff"/><path d="M851 938h10M851 942h10M851 946h10" stroke="#666" stroke-width="1.100"/><path d="M857.500 936.500l1.800 1.600 1.800-1.600" stroke="#666" stroke-width="0.900"/><path d="M909.500 941.200l2 2 2-2" stroke="#666" stroke-width="1"/><path d="M940 945.500h-4.500l-2.500 2.300v-2.300h-0.500v-9h11v5" stroke="#666" stroke-width="1.100" stroke-linejoin="round"/><path d="M940.500 946h5M943 943.500v5" stroke="#666" stroke-width="1.100"/><rect x="1034.500" y="937" width="11.500" height="10" rx="1" stroke="#666" stroke-width="1.100"/><path d="M1038 937v10" stroke="#666" stroke-width="1.100"/><rect x="1061.5" y="936.3" width="4.800" height="4.300" rx="0.800" stroke="#666" stroke-width="1"/><rect x="1068.5" y="936.3" width="4.800" height="4.300" rx="0.800" stroke="#666" stroke-width="1"/><rect x="1061.5" y="942.8" width="4.800" height="4.300" rx="0.800" stroke="#666" stroke-width="1"/><rect x="1068.5" y="942.8" width="4.800" height="4.300" rx="0.800" stroke="#666" stroke-width="1"/><path d="M1096 938.500c-2-1.500-4-1.800-6-1v9c2-0.800 4-0.500 6 1 2-1.500 4-1.800 6-1v-9c-2-0.800-4-0.500-6 1zM1096 938.500v9" stroke="#666" stroke-width="1.100" stroke-linejoin="round"/><path d="M1128 938.200l5.500 3.700-5.500 3.700z" fill="#fff"/><rect x="1163" y="939" width="6" height="5.500" rx="0.800" stroke="#666" stroke-width="1.100"/><path d="M1160 939.500v-3h3M1169 936.500h3v3M1172 944v3h-3M1163 947h-3v-3" stroke="#666" stroke-width="1.100"/><path d="M1223.500 941.500l2 2 2-2z" fill="#666"/><path d="M1243.500 942.500h10.500" stroke="#333" stroke-width="2"/><path d="M1369 942.500h9.700M1373.850 937.700v9.700" stroke="#333" stroke-width="1.800"/><path d="M1266.300 942.300h31" stroke="#4a7af0" stroke-width="1.600"/><path d="M1303 942.300h54" stroke="#cfcfcf" stroke-width="1.300"/><circle cx="1301.300" cy="942.300" r="1.600" fill="#777"/></svg>
<div class="b" style="left:621.9px;top:917.2px;width:223.8px;height:29.3px;background:rgba(78,78,82,.93);border-radius:14.7px;"></div>
<span class="t " style="left:632.9px;top:921.14px;font-size:17.5px;line-height:22px;color:#fff;letter-spacing:-0.085px;-webkit-text-stroke:0.3px #fff;">Митрофанова Екатерина</span>
<div class="b" style="left:0px;top:1032px;width:1918px;height:47px;background:linear-gradient(90deg,#1d5c96 0%,#2a7fc0 3%,#3a92d0 9%,#4ba3da 16%,#55ade0 24%,#4fa6dc 32%,#3f97d4 42%,#3188ca 52%,#2b7ec2 62%,#2873b8 70%,#2367ac 78%,#1f5b9c 85%,#1c5190 92%,#1a4a84 100%);"></div>
<div class="b" style="left:0px;top:1032px;width:1918px;height:47px;background:linear-gradient(180deg,rgba(255,255,255,.28) 0px,rgba(255,255,255,.1) 2px,rgba(255,255,255,0) 40%,rgba(0,0,30,.08) 100%);"></div>
<div class="b" style="left:1250px;top:1032px;width:170px;height:47px;background:linear-gradient(28deg,rgba(255,255,255,0) 40%,rgba(200,232,250,.42) 50%,rgba(255,255,255,0) 60%);"></div>
<div class="b" style="left:120px;top:1032px;width:120px;height:48px;background:linear-gradient(110deg,rgba(255,255,255,0) 40%,rgba(190,235,220,.28) 50%,rgba(255,255,255,0) 60%);"></div>
<div class="b" style="left:211.6px;top:1032.2px;width:66.3px;height:46.8px;background:linear-gradient(180deg,rgba(255,255,255,.42),rgba(255,255,255,.22));border-radius:3px;border:1px solid rgba(255,255,255,.55);box-shadow:0 0 0 1px rgba(20,60,110,.45);"></div>
<div class="b" style="left:286.5px;top:1032.2px;width:58.7px;height:46.8px;background:rgba(255,255,255,.35);border-radius:3px;border:1px solid rgba(255,255,255,.5);box-shadow:0 0 0 1px rgba(20,60,110,.45);"></div>
<div class="b" style="left:281.8px;top:1032.2px;width:58.7px;height:46.8px;background:linear-gradient(180deg,rgba(255,255,255,.75),rgba(225,240,250,.6));border-radius:3px;border:1px solid rgba(255,255,255,.8);box-shadow:0 0 0 1px rgba(20,60,110,.45);"></div>
<div class="b" style="left:561.2px;top:1032.2px;width:66.3px;height:46.8px;background:linear-gradient(180deg,rgba(255,255,255,.34),rgba(255,255,255,.16));border-radius:3px;border:1px solid rgba(255,255,255,.45);box-shadow:0 0 0 1px rgba(20,60,110,.4);"></div>
<div class="b" style="left:1889.4px;top:1032px;width:28.6px;height:48px;background:linear-gradient(180deg,rgba(255,255,255,.22),rgba(255,255,255,.05) 45%,rgba(255,255,255,.12));border-left:1px solid rgba(255,255,255,.45);box-shadow:-1px 0 0 rgba(10,30,70,.5);"></div>
<svg width="1918" height="1079" viewBox="0 0 1918 1079" style="left:0;top:0" fill="none"><defs><radialGradient id="orb" cx="0.5" cy="0.3" r="0.8"><stop offset="0" stop-color="#7fd0f8"/><stop offset="0.45" stop-color="#2a7fd0"/><stop offset="1" stop-color="#0c3a88"/></radialGradient></defs><circle cx="33" cy="1054.200" r="21.500" fill="url(#orb)" stroke="#9cd0f0" stroke-width="1.200"/><path d="M22.500 1046.500c3-1.800 6-2 9-0.300l-2 8c-3-1.700-6-1.500-9 0.300z" fill="#f0562a"/><path d="M33.500 1046.800c3 1.600 6 1.600 9.500-0.500l-2 8c-3.500 2-6.500 2-9.500 0.500z" fill="#7cc242"/><path d="M20 1056.300c3-1.800 6-2 9-0.300l-2 8c-3-1.700-6-1.500-9 0.300z" fill="#3a9ae8"/><path d="M31 1056.600c3 1.600 6 1.600 9.500-0.500l-2 8c-3.500 2-6.500 2-9.500 0.500z" fill="#fcc42a"/><ellipse cx="33" cy="1043" rx="15" ry="8" fill="#fff" opacity=".18"/><circle cx="105" cy="1054.200" r="18.300" fill="#3a3a3c"/><circle cx="105" cy="1054.200" r="18.300" stroke="#262628" stroke-width="1.500"/><path d="M94.500 1053l10.500-9.500 10.500 9.500" stroke="#9a9a9a" stroke-width="2.600" stroke-linejoin="round"/><path d="M97.500 1053v9.500h15v-9.500" stroke="#9a9a9a" stroke-width="2.400"/><rect x="103" y="1053" width="4" height="9" fill="#8a8a8a"/><path d="M184 1043.500l4.500 1v25l-4.500 2.500z" fill="#9fd0f0"/><path d="M180.500 1042.500l4 1v27l-4 2z" fill="#b8ddf4"/><path d="M157.500 1041.500h22v30.500h-22z" fill="#7cc0ec"/><path d="M157.500 1041.500h22v14h-22z" fill="#9ad2f4"/><circle cx="169.500" cy="1056.800" r="10.600" fill="#f58220"/><path d="M165.500 1050.800l10 6-10 6z" fill="#fff"/><path d="M226 1044.500c0-1.500 1-2.500 2.500-2.500h11l2.500 3h20.500c1.500 0 2.500 1 2.500 2.500v24c0 1.500-1 2.500-2.500 2.500h-34c-1.500 0-2.500-1-2.500-2.500z" fill="#f3d778"/><path d="M232 1040.500h12l2 3h-14zM242 1043h11l2 3h-13zM251 1045.500h10l2 2.500h-12z" fill="#fbf3d0"/><rect x="229" y="1039.500" width="2.200" height="2.200" fill="#3aa04a"/><rect x="238.500" y="1042" width="2.200" height="2.200" fill="#e03a2a"/><rect x="248.500" y="1044.500" width="2.200" height="2.200" fill="#3a7ae0"/><path d="M226 1050h39v21.500c0 1.500-1 2.500-2.500 2.500h-34c-1.500 0-2.500-1-2.500-2.500z" fill="#f7e08c"/><path d="M231.500 1060.500c0-1.500 1-2.500 2.500-2.500h23c1.500 0 2.500 1 2.500 2.500v13.500h-28z" fill="#7cc4ee"/><path d="M236 1068h19v6h-19z" fill="#f3d778"/><path d="M231.500 1060.500c0-1.500 1-2.500 2.500-2.500h23c1.500 0 2.500 1 2.500 2.500v3h-28z" fill="#a8dcf8"/><circle cx="310.700" cy="1054.500" r="20" fill="#fff"/><defs><linearGradient id="yb" x1="0" y1="1" x2="1" y2="0"><stop offset="0" stop-color="#ff3a1a"/><stop offset="0.6" stop-color="#ff3a2a"/><stop offset="1" stop-color="#ff40d0"/></linearGradient></defs><path d="M299 1044.500l11.700 12.500v12" stroke="#ff4a1a" stroke-width="5" stroke-linecap="round" stroke-linejoin="round"/><path d="M310.700 1057l10.800-12" stroke="url(#yb)" stroke-width="5" stroke-linecap="round"/><circle cx="384.500" cy="1055.100" r="20.300" fill="#fc3f1d"/><defs><linearGradient id="op" x1="0" y1="0" x2="1" y2="1"><stop offset="0" stop-color="#ff1b2d"/><stop offset="1" stop-color="#a70014"/></linearGradient></defs><path d="M454.600 1035.500a19.500 19.500 0 1 0 0 39 19.500 19.500 0 0 0 0-39zm0 5.500c5.300 0 9.500 6.300 9.500 14s-4.200 14-9.500 14-9.500-6.300-9.500-14 4.200-14 9.500-14z" fill="url(#op)" fill-rule="evenodd"/><path d="M461 1037c6.500 2.500 11 9 11 18s-4.500 15.500-11 18c5-3 8-10 8-18s-3-15-8-18z" fill="#ff4b4b" opacity=".8"/><circle cx="524.2" cy="1055.5" r="20.3" fill="#fbc116"/><path d="M524.2 1055.5L506.62 1045.35A20.3 20.3 0 0 1 541.78 1045.35Z" fill="#e33b2e"/><path d="M524.2 1055.5L506.62 1045.35A20.3 20.3 0 0 0 524.20 1075.80Z" fill="#229342"/><path d="M524.2 1055.5L541.78 1045.35A20.3 20.3 0 0 1 524.20 1075.80Z" fill="#fbc116"/><path d="M541.78 1045.35L532.34 1050.80L524.20 1046.10L524.20 1043.50Z" fill="#e33b2e"/><path d="M524.20 1075.80L524.20 1064.90L532.34 1060.20L539.44 1068.29Z" fill="#fbc116"/><path d="M506.62 1045.35L516.06 1050.80L516.06 1060.20L505.51 1062.30Z" fill="#229342"/><circle cx="524.2" cy="1055.5" r="9.400" fill="#fff"/><circle cx="524.2" cy="1055.5" r="7.500" fill="#3a7cf0"/><rect x="596" y="1040.500" width="16.600" height="29" fill="#fff" stroke="#2b579a" stroke-width="1"/><path d="M600 1045.500h10M600 1049.500h10M600 1053.500h10M600 1057.500h10M600 1061.500h10M600 1065.500h10" stroke="#2b579a" stroke-width="1.600"/><path d="M576.600 1041l21.400-3.800v35.600l-21.400-3.800z" fill="#2b579a"/><path d="M1677.200 1058.600l4.650-5.600 4.650 5.600z" fill="#fff"/><path d="M1705 1052.500h3.500l5-5v17l-5-5h-3.500z" fill="#e8eef4" stroke="#566" stroke-width="0.600"/><path d="M1716.500 1052.500a4 4 0 0 1 0 7M1719 1050a7.500 7.500 0 0 1 0 12M1721.500 1048a10.500 10.500 0 0 1 0 16" stroke="#e8eef4" stroke-width="1.100"/><rect x="1740" y="1050.500" width="13" height="10" fill="#2a5a9a" stroke="#e8eef4" stroke-width="1.300"/><path d="M1743 1064.500h7M1746.500 1061v3.500" stroke="#e8eef4" stroke-width="1.500"/><path d="M1737 1047v6h3.500v-6M1738.700 1053v10h3" stroke="#e8eef4" stroke-width="1.200"/><path d="M1766.300 1047v19" stroke="#e8eef4" stroke-width="1.300"/><path d="M1767.500 1048c3-1.500 5.500-1.500 8 0.500s5 2 7.500 0.500v8c-2.500 1.500-5 1.500-7.500-0.500s-5-2-8-0.500z" fill="#fff"/></svg>
<span class="t " style="left:374.6px;top:1036.91px;font-size:32px;line-height:38px;color:#fff;font-weight:700;transform:scaleX(.8);transform-origin:50% 50%;">Я</span>
<span class="t " style="left:578.4px;top:1046.23px;font-size:15.5px;line-height:18px;color:#fff;font-weight:700;">W</span>
<span class="t " style="left:1635.6px;top:1045.65px;font-size:14px;line-height:17px;color:#dfe7f1;letter-spacing:-0.310px;">RU</span>
<span class="t " style="left:1823.5px;top:1037.95px;font-size:14.3px;line-height:17px;color:#fff;letter-spacing:-0.437px;">15:28</span>
<span class="t " style="left:1805.4px;top:1059.15px;font-size:14.3px;line-height:17px;color:#fff;letter-spacing:-0.247px;">03.12.2025</span>
<div class="b" style="left:1413.7px;top:260.6px;width:34.4px;height:34.4px;background:#232326;border-radius:18px;"></div>
<svg width="1918" height="1079" viewBox="0 0 1918 1079" style="left:0;top:0" fill="none"><path d="M1432.400 276.300l7.300-7.300M1433.700 268.700h6.300v6.300" stroke="#d4d4de" stroke-width="2.3" stroke-linejoin="round" stroke-linecap="round"/><path d="M1429.600 280l-7.300 7.300M1428.300 287.600h-6.300v-6.300" stroke="#d4d4de" stroke-width="2.3" stroke-linejoin="round" stroke-linecap="round"/></svg>
</body></html>
